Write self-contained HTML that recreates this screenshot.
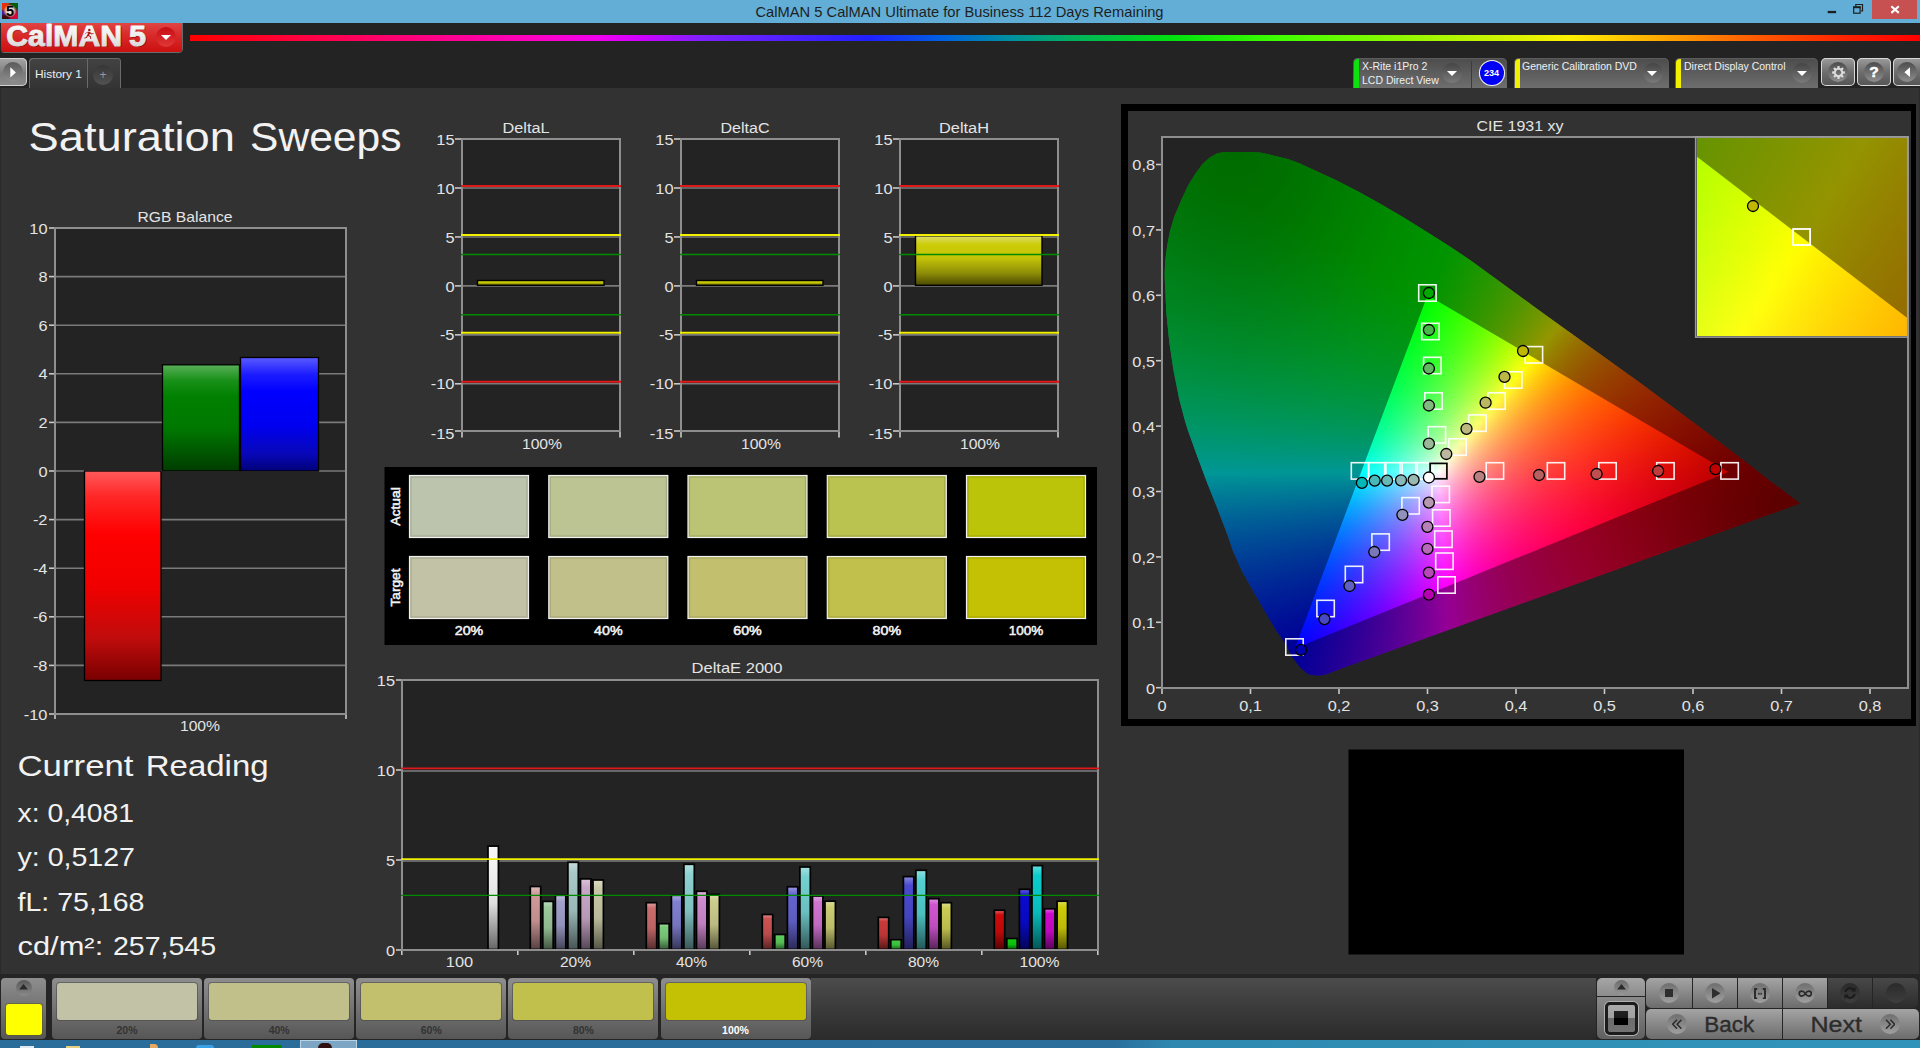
<!DOCTYPE html>
<html lang="en"><head><meta charset="utf-8"><title>CalMAN 5 - Saturation Sweeps</title>
<style>
html,body{margin:0;padding:0}
body{width:1920px;height:1048px;overflow:hidden;background:#323232;position:relative;font-family:"Liberation Sans",sans-serif}
svg.layer{position:absolute;left:0;top:0}
svg text{font-family:"Liberation Sans",sans-serif}
.cie{position:absolute;width:746px;height:550px}
.cie .hs{position:absolute;left:0;top:0;width:746px;height:550px}
.cie i,.inset i{position:absolute;height:2px;display:block}
.cie>b{position:absolute;left:0;top:0;width:746px;height:550px;background:rgba(0,0,0,.41)}
.inset{position:absolute;overflow:hidden}
.inset>b{position:absolute;left:0;top:0;width:100%;height:100%;background:rgba(0,0,0,.42)}
.abs{position:absolute}
#rightline{position:absolute;left:1919px;top:88px;width:1px;height:886px;background:#2a2a2a}
#titlebar{position:absolute;left:0;top:0;width:1920px;height:23px;background:#62aed6}
#toolbar{position:absolute;left:0;top:23px;width:1920px;height:65px;background:#232323}
#leftline{position:absolute;left:0;top:88px;width:1px;height:886px;background:#2a2a2a}
#rainbow{position:absolute;left:190px;top:35.200px;width:1730px;height:5.400px;
 background:linear-gradient(90deg,#ff0000 0,#ff0040 6.4%,#ff0080 13.3%,#ff00c0 19.7%,#f000f0 23.7%,#d000ff 26%,#8020ff 29.5%,#2020ff 39.3%,#0060e0 43.4%,#0090a0 47.4%,#00b060 50.9%,#00e010 56.6%,#40ff00 63%,#90f800 70%,#c8f400 75%,#fff000 79.8%,#ffb000 84.5%,#ff6000 90%,#ff2000 96%,#ff0000 100%)}
#logo{position:absolute;left:1px;top:23px;width:181px;height:29px;border-radius:0 0 3.500px 3.500px;
 background:linear-gradient(#e04444 0,#d82828 45%,#cc1010 100%);box-shadow:0 1px 0 #6a6a6a,1px 0 0 #6a6a6a}
#logo .t{position:absolute;left:4px;top:-3px;font-size:28.5px;font-weight:bold;letter-spacing:-0.6px;color:#ececec;
 text-shadow:1px 1px 1px rgba(60,0,0,.55);white-space:nowrap;transform-origin:0 0}
#logo .dd{position:absolute;left:155px;top:4px;width:20px;height:20px;border-radius:50%;background:linear-gradient(#c80c14,#e03838)}
.tri-d{position:absolute;width:0;height:0;border-left:5.2px solid transparent;border-right:5.2px solid transparent;border-top:5.8px solid #fff}
.tab{position:absolute;top:58px;height:30px;border-radius:5px 5px 0 0;background:linear-gradient(#4c4c4c,#6e6e6e);color:#f0f0f0;font-size:10.8px;line-height:13.6px;white-space:nowrap;box-shadow:inset 0 1px 0 #5c5c5c}
.tab .bar{position:absolute;left:1px;top:1px;width:5px;height:29px;border-radius:4px 0 0 0}
.tab .tx{position:absolute;left:8.5px;top:2px;transform-origin:0 0;transform:scaleX(.972)}
.tab .dd{position:absolute;top:5px;width:20px;height:20px;border-radius:50%;background:linear-gradient(#444,#7a7a7a)}
.sqb{position:absolute;top:58px;height:28px;width:34px;border-radius:5px;background:linear-gradient(#9c9c9c,#6e6e6e 50%,#545454);box-shadow:inset 0 0 0 1px #d8d8d8}
.sqb .c{position:absolute;left:7px;top:4px;width:20px;height:20px;border-radius:50%;background:linear-gradient(#4c4c4c,#8e8e8e)}
#bottombar{position:absolute;left:0;top:974px;width:1920px;height:66px;background:#252525}
#taskbar{position:absolute;left:0;top:1040px;width:1920px;height:8px;background:linear-gradient(100deg,#2a6c9a 0,#2a6e9c 58%,#2e88b0 61%,#3090b6 80%,#3094ba 100%)}
.sw{position:absolute;top:978px;width:150px;height:60.5px;border-radius:4px;background:linear-gradient(#8e8e8e,#767676 45%,#565656);}
.sw .c{position:absolute;left:5px;top:5px;width:140px;height:37px;border-radius:3px;box-shadow:0 0 0 1px rgba(70,70,70,.55)}
.sw .l{position:absolute;left:0;width:150px;top:46px;text-align:center;font-size:10.5px;font-weight:bold;color:#333}
.gbtn{position:absolute;background:linear-gradient(#a4a4a4,#6c6c6c)}
.gbtn .c{position:absolute;width:20px;height:20px;border-radius:50%;background:linear-gradient(#6e6e6e,#a0a0a0)}

</style></head>
<body>
<svg class="layer" width="1920" height="1048" viewBox="0 0 1920 1048"><defs><linearGradient id="g1" x1="0" y1="0" x2="0" y2="1"><stop offset="0" stop-color="#ff5a5a"/><stop offset="0.12" stop-color="#ff2828"/><stop offset="0.3" stop-color="#ff0000"/><stop offset="0.55" stop-color="#f00000"/><stop offset="0.8" stop-color="#c00c0c"/><stop offset="1" stop-color="#780000"/></linearGradient>
<linearGradient id="g2" x1="0" y1="0" x2="0" y2="1"><stop offset="0" stop-color="#58b058"/><stop offset="0.15" stop-color="#189018"/><stop offset="0.3" stop-color="#008000"/><stop offset="0.6" stop-color="#007800"/><stop offset="1" stop-color="#003c00"/></linearGradient>
<linearGradient id="g3" x1="0" y1="0" x2="0" y2="1"><stop offset="0" stop-color="#5a5aff"/><stop offset="0.15" stop-color="#1c1cff"/><stop offset="0.3" stop-color="#0000ff"/><stop offset="0.6" stop-color="#0000f0"/><stop offset="0.85" stop-color="#0808b8"/><stop offset="1" stop-color="#000078"/></linearGradient>
<linearGradient id="g4" x1="0" y1="0" x2="0" y2="1"><stop offset="0" stop-color="#dede70"/><stop offset="0.18" stop-color="#cccc08"/><stop offset="0.45" stop-color="#c4c408"/><stop offset="0.75" stop-color="#8e8e08"/><stop offset="1" stop-color="#4a4800"/></linearGradient>
<linearGradient id="g5" x1="0" y1="0" x2="0" y2="1"><stop offset="0" stop-color="#dede70"/><stop offset="0.18" stop-color="#cccc08"/><stop offset="0.45" stop-color="#c4c408"/><stop offset="0.75" stop-color="#8e8e08"/><stop offset="1" stop-color="#4a4800"/></linearGradient>
<linearGradient id="g6" x1="0" y1="0" x2="0" y2="1"><stop offset="0" stop-color="#dede70"/><stop offset="0.18" stop-color="#cccc08"/><stop offset="0.45" stop-color="#c4c408"/><stop offset="0.75" stop-color="#8e8e08"/><stop offset="1" stop-color="#4a4800"/></linearGradient>
<linearGradient id="g7" x1="0" y1="0" x2="0" y2="1"><stop offset="0" stop-color="#f7f7f7"/><stop offset="0.12" stop-color="#f4f4f4"/><stop offset="0.55" stop-color="#e0e0e0"/><stop offset="1" stop-color="#666666"/></linearGradient>
<linearGradient id="g8" x1="0" y1="0" x2="0" y2="1"><stop offset="0" stop-color="#e0bdbd"/><stop offset="0.12" stop-color="#d09a9a"/><stop offset="0.55" stop-color="#bf8d8d"/><stop offset="1" stop-color="#574040"/></linearGradient>
<linearGradient id="g9" x1="0" y1="0" x2="0" y2="1"><stop offset="0" stop-color="#bedbbe"/><stop offset="0.12" stop-color="#9cc89c"/><stop offset="0.55" stop-color="#8fb88f"/><stop offset="1" stop-color="#415441"/></linearGradient>
<linearGradient id="g10" x1="0" y1="0" x2="0" y2="1"><stop offset="0" stop-color="#c1c1dd"/><stop offset="0.12" stop-color="#a0a0cc"/><stop offset="0.55" stop-color="#9393bb"/><stop offset="1" stop-color="#434355"/></linearGradient>
<linearGradient id="g11" x1="0" y1="0" x2="0" y2="1"><stop offset="0" stop-color="#c6dbdb"/><stop offset="0.12" stop-color="#a8c8c8"/><stop offset="0.55" stop-color="#9ab8b8"/><stop offset="1" stop-color="#465454"/></linearGradient>
<linearGradient id="g12" x1="0" y1="0" x2="0" y2="1"><stop offset="0" stop-color="#dbc6db"/><stop offset="0.12" stop-color="#c8a8c8"/><stop offset="0.55" stop-color="#b89ab8"/><stop offset="1" stop-color="#544654"/></linearGradient>
<linearGradient id="g13" x1="0" y1="0" x2="0" y2="1"><stop offset="0" stop-color="#dbdbc6"/><stop offset="0.12" stop-color="#c8c8a8"/><stop offset="0.55" stop-color="#b8b89a"/><stop offset="1" stop-color="#545446"/></linearGradient>
<linearGradient id="g14" x1="0" y1="0" x2="0" y2="1"><stop offset="0" stop-color="#dd9f9f"/><stop offset="0.12" stop-color="#cc6c6c"/><stop offset="0.55" stop-color="#bb6363"/><stop offset="1" stop-color="#552d2d"/></linearGradient>
<linearGradient id="g15" x1="0" y1="0" x2="0" y2="1"><stop offset="0" stop-color="#a9dda9"/><stop offset="0.12" stop-color="#7ccc7c"/><stop offset="0.55" stop-color="#72bb72"/><stop offset="1" stop-color="#345534"/></linearGradient>
<linearGradient id="g16" x1="0" y1="0" x2="0" y2="1"><stop offset="0" stop-color="#acace0"/><stop offset="0.12" stop-color="#8080d0"/><stop offset="0.55" stop-color="#7575bf"/><stop offset="1" stop-color="#353557"/></linearGradient>
<linearGradient id="g17" x1="0" y1="0" x2="0" y2="1"><stop offset="0" stop-color="#b4e0e0"/><stop offset="0.12" stop-color="#8cd0d0"/><stop offset="0.55" stop-color="#80bfbf"/><stop offset="1" stop-color="#3a5757"/></linearGradient>
<linearGradient id="g18" x1="0" y1="0" x2="0" y2="1"><stop offset="0" stop-color="#e0b4e0"/><stop offset="0.12" stop-color="#d08cd0"/><stop offset="0.55" stop-color="#bf80bf"/><stop offset="1" stop-color="#573a57"/></linearGradient>
<linearGradient id="g19" x1="0" y1="0" x2="0" y2="1"><stop offset="0" stop-color="#ddddb4"/><stop offset="0.12" stop-color="#cccc8c"/><stop offset="0.55" stop-color="#bbbb80"/><stop offset="1" stop-color="#55553a"/></linearGradient>
<linearGradient id="g20" x1="0" y1="0" x2="0" y2="1"><stop offset="0" stop-color="#dd8e8e"/><stop offset="0.12" stop-color="#cc5252"/><stop offset="0.55" stop-color="#bb4b4b"/><stop offset="1" stop-color="#552222"/></linearGradient>
<linearGradient id="g21" x1="0" y1="0" x2="0" y2="1"><stop offset="0" stop-color="#95dd95"/><stop offset="0.12" stop-color="#5ccc5c"/><stop offset="0.55" stop-color="#54bb54"/><stop offset="1" stop-color="#265526"/></linearGradient>
<linearGradient id="g22" x1="0" y1="0" x2="0" y2="1"><stop offset="0" stop-color="#9a9ae0"/><stop offset="0.12" stop-color="#6464d0"/><stop offset="0.55" stop-color="#5c5cbf"/><stop offset="1" stop-color="#2a2a57"/></linearGradient>
<linearGradient id="g23" x1="0" y1="0" x2="0" y2="1"><stop offset="0" stop-color="#a4e0e0"/><stop offset="0.12" stop-color="#74d0d0"/><stop offset="0.55" stop-color="#6abfbf"/><stop offset="1" stop-color="#305757"/></linearGradient>
<linearGradient id="g24" x1="0" y1="0" x2="0" y2="1"><stop offset="0" stop-color="#e0a4e0"/><stop offset="0.12" stop-color="#d074d0"/><stop offset="0.55" stop-color="#bf6abf"/><stop offset="1" stop-color="#573057"/></linearGradient>
<linearGradient id="g25" x1="0" y1="0" x2="0" y2="1"><stop offset="0" stop-color="#dddda4"/><stop offset="0.12" stop-color="#cccc74"/><stop offset="0.55" stop-color="#bbbb6a"/><stop offset="1" stop-color="#555530"/></linearGradient>
<linearGradient id="g26" x1="0" y1="0" x2="0" y2="1"><stop offset="0" stop-color="#dd7e7e"/><stop offset="0.12" stop-color="#cc3a3a"/><stop offset="0.55" stop-color="#bb3535"/><stop offset="1" stop-color="#551818"/></linearGradient>
<linearGradient id="g27" x1="0" y1="0" x2="0" y2="1"><stop offset="0" stop-color="#82dd82"/><stop offset="0.12" stop-color="#40cc40"/><stop offset="0.55" stop-color="#3abb3a"/><stop offset="1" stop-color="#1a551a"/></linearGradient>
<linearGradient id="g28" x1="0" y1="0" x2="0" y2="1"><stop offset="0" stop-color="#8989e0"/><stop offset="0.12" stop-color="#4a4ad0"/><stop offset="0.55" stop-color="#4444bf"/><stop offset="1" stop-color="#1f1f57"/></linearGradient>
<linearGradient id="g29" x1="0" y1="0" x2="0" y2="1"><stop offset="0" stop-color="#8fe0e0"/><stop offset="0.12" stop-color="#54d0d0"/><stop offset="0.55" stop-color="#4dbfbf"/><stop offset="1" stop-color="#235757"/></linearGradient>
<linearGradient id="g30" x1="0" y1="0" x2="0" y2="1"><stop offset="0" stop-color="#e08fe0"/><stop offset="0.12" stop-color="#d054d0"/><stop offset="0.55" stop-color="#bf4dbf"/><stop offset="1" stop-color="#572357"/></linearGradient>
<linearGradient id="g31" x1="0" y1="0" x2="0" y2="1"><stop offset="0" stop-color="#dddd8f"/><stop offset="0.12" stop-color="#cccc54"/><stop offset="0.55" stop-color="#bbbb4d"/><stop offset="1" stop-color="#555523"/></linearGradient>
<linearGradient id="g32" x1="0" y1="0" x2="0" y2="1"><stop offset="0" stop-color="#dd5f5f"/><stop offset="0.12" stop-color="#cc0a0a"/><stop offset="0.55" stop-color="#bb0909"/><stop offset="1" stop-color="#550404"/></linearGradient>
<linearGradient id="g33" x1="0" y1="0" x2="0" y2="1"><stop offset="0" stop-color="#63dd63"/><stop offset="0.12" stop-color="#10cc10"/><stop offset="0.55" stop-color="#0ebb0e"/><stop offset="1" stop-color="#065506"/></linearGradient>
<linearGradient id="g34" x1="0" y1="0" x2="0" y2="1"><stop offset="0" stop-color="#5f5fe0"/><stop offset="0.12" stop-color="#0a0ad0"/><stop offset="0.55" stop-color="#0909bf"/><stop offset="1" stop-color="#040457"/></linearGradient>
<linearGradient id="g35" x1="0" y1="0" x2="0" y2="1"><stop offset="0" stop-color="#5fdddd"/><stop offset="0.12" stop-color="#0acccc"/><stop offset="0.55" stop-color="#09bbbb"/><stop offset="1" stop-color="#045555"/></linearGradient>
<linearGradient id="g36" x1="0" y1="0" x2="0" y2="1"><stop offset="0" stop-color="#dd5fdd"/><stop offset="0.12" stop-color="#cc0acc"/><stop offset="0.55" stop-color="#bb09bb"/><stop offset="1" stop-color="#550455"/></linearGradient>
<linearGradient id="g37" x1="0" y1="0" x2="0" y2="1"><stop offset="0" stop-color="#dddd5f"/><stop offset="0.12" stop-color="#cccc0a"/><stop offset="0.55" stop-color="#bbbb09"/><stop offset="1" stop-color="#555504"/></linearGradient></defs>
<rect x="54.00" y="227.00" width="293.00" height="488.00" fill="#232323" />
<line x1="49.00" y1="714.00" x2="54.00" y2="714.00" stroke="#c8c8c8" stroke-width="1.6"/>
<text x="47.5" y="719.6" font-size="15.00" text-anchor="end" fill="#e4e4e4" font-weight="normal" textLength="23.7" lengthAdjust="spacingAndGlyphs" >-10</text>
<line x1="54.00" y1="665.40" x2="347.00" y2="665.40" stroke="#7a7a7a" stroke-width="1.6"/>
<line x1="49.00" y1="665.40" x2="54.00" y2="665.40" stroke="#c8c8c8" stroke-width="1.6"/>
<text x="47.5" y="671.0" font-size="15.00" text-anchor="end" fill="#e4e4e4" font-weight="normal" textLength="14.6" lengthAdjust="spacingAndGlyphs" >-8</text>
<line x1="54.00" y1="616.80" x2="347.00" y2="616.80" stroke="#7a7a7a" stroke-width="1.6"/>
<line x1="49.00" y1="616.80" x2="54.00" y2="616.80" stroke="#c8c8c8" stroke-width="1.6"/>
<text x="47.5" y="622.4" font-size="15.00" text-anchor="end" fill="#e4e4e4" font-weight="normal" textLength="14.6" lengthAdjust="spacingAndGlyphs" >-6</text>
<line x1="54.00" y1="568.20" x2="347.00" y2="568.20" stroke="#7a7a7a" stroke-width="1.6"/>
<line x1="49.00" y1="568.20" x2="54.00" y2="568.20" stroke="#c8c8c8" stroke-width="1.6"/>
<text x="47.5" y="573.8" font-size="15.00" text-anchor="end" fill="#e4e4e4" font-weight="normal" textLength="14.6" lengthAdjust="spacingAndGlyphs" >-4</text>
<line x1="54.00" y1="519.60" x2="347.00" y2="519.60" stroke="#7a7a7a" stroke-width="1.6"/>
<line x1="49.00" y1="519.60" x2="54.00" y2="519.60" stroke="#c8c8c8" stroke-width="1.6"/>
<text x="47.5" y="525.2" font-size="15.00" text-anchor="end" fill="#e4e4e4" font-weight="normal" textLength="14.6" lengthAdjust="spacingAndGlyphs" >-2</text>
<line x1="54.00" y1="471.00" x2="347.00" y2="471.00" stroke="#7a7a7a" stroke-width="1.6"/>
<line x1="49.00" y1="471.00" x2="54.00" y2="471.00" stroke="#c8c8c8" stroke-width="1.6"/>
<text x="47.5" y="476.6" font-size="15.00" text-anchor="end" fill="#e4e4e4" font-weight="normal" textLength="9.1" lengthAdjust="spacingAndGlyphs" >0</text>
<line x1="54.00" y1="422.40" x2="347.00" y2="422.40" stroke="#7a7a7a" stroke-width="1.6"/>
<line x1="49.00" y1="422.40" x2="54.00" y2="422.40" stroke="#c8c8c8" stroke-width="1.6"/>
<text x="47.5" y="428.0" font-size="15.00" text-anchor="end" fill="#e4e4e4" font-weight="normal" textLength="9.1" lengthAdjust="spacingAndGlyphs" >2</text>
<line x1="54.00" y1="373.80" x2="347.00" y2="373.80" stroke="#7a7a7a" stroke-width="1.6"/>
<line x1="49.00" y1="373.80" x2="54.00" y2="373.80" stroke="#c8c8c8" stroke-width="1.6"/>
<text x="47.5" y="379.4" font-size="15.00" text-anchor="end" fill="#e4e4e4" font-weight="normal" textLength="9.1" lengthAdjust="spacingAndGlyphs" >4</text>
<line x1="54.00" y1="325.20" x2="347.00" y2="325.20" stroke="#7a7a7a" stroke-width="1.6"/>
<line x1="49.00" y1="325.20" x2="54.00" y2="325.20" stroke="#c8c8c8" stroke-width="1.6"/>
<text x="47.5" y="330.8" font-size="15.00" text-anchor="end" fill="#e4e4e4" font-weight="normal" textLength="9.1" lengthAdjust="spacingAndGlyphs" >6</text>
<line x1="54.00" y1="276.60" x2="347.00" y2="276.60" stroke="#7a7a7a" stroke-width="1.6"/>
<line x1="49.00" y1="276.60" x2="54.00" y2="276.60" stroke="#c8c8c8" stroke-width="1.6"/>
<text x="47.5" y="282.2" font-size="15.00" text-anchor="end" fill="#e4e4e4" font-weight="normal" textLength="9.1" lengthAdjust="spacingAndGlyphs" >8</text>
<line x1="49.00" y1="228.00" x2="54.00" y2="228.00" stroke="#c8c8c8" stroke-width="1.6"/>
<text x="47.5" y="233.6" font-size="15.00" text-anchor="end" fill="#e4e4e4" font-weight="normal" textLength="18.2" lengthAdjust="spacingAndGlyphs" >10</text>
<rect x="84.5" y="471.0" width="76.5" height="209.5" fill="url(#g1)" stroke="#000" stroke-width="1.3"/>
<rect x="162.5" y="364.8" width="77.0" height="106.2" fill="url(#g2)" stroke="#000" stroke-width="1.3"/>
<rect x="240.5" y="357.5" width="78.0" height="113.5" fill="url(#g3)" stroke="#000" stroke-width="1.3"/>
<rect x="55.0" y="228.0" width="291.0" height="486.0" fill="none" stroke="#8e8e8e" stroke-width="2"/>
<line x1="55.00" y1="715.00" x2="55.00" y2="719.00" stroke="#c8c8c8" stroke-width="1.6"/>
<line x1="346.00" y1="715.00" x2="346.00" y2="719.00" stroke="#c8c8c8" stroke-width="1.6"/>
<text x="200.0" y="730.7" font-size="15.00" text-anchor="middle" fill="#e4e4e4" font-weight="normal" textLength="40.2" lengthAdjust="spacingAndGlyphs" >100%</text>
<text x="185.0" y="221.5" font-size="14.60" text-anchor="middle" fill="#e4e4e4" font-weight="normal" textLength="95.0" lengthAdjust="spacingAndGlyphs" >RGB Balance</text>
<rect x="461.00" y="138.00" width="160.00" height="294.00" fill="#232323" />
<line x1="455.00" y1="431.00" x2="461.00" y2="431.00" stroke="#c8c8c8" stroke-width="1.6"/>
<text x="454.5" y="439.2" font-size="15.00" text-anchor="end" fill="#e4e4e4" font-weight="normal" textLength="23.7" lengthAdjust="spacingAndGlyphs" >-15</text>
<line x1="461.00" y1="383.80" x2="621.00" y2="383.80" stroke="#7a7a7a" stroke-width="1.6"/>
<line x1="455.00" y1="383.80" x2="461.00" y2="383.80" stroke="#c8c8c8" stroke-width="1.6"/>
<text x="454.5" y="389.4" font-size="15.00" text-anchor="end" fill="#e4e4e4" font-weight="normal" textLength="23.7" lengthAdjust="spacingAndGlyphs" >-10</text>
<line x1="461.00" y1="334.85" x2="621.00" y2="334.85" stroke="#7a7a7a" stroke-width="1.6"/>
<line x1="455.00" y1="334.85" x2="461.00" y2="334.85" stroke="#c8c8c8" stroke-width="1.6"/>
<text x="454.5" y="340.4" font-size="15.00" text-anchor="end" fill="#e4e4e4" font-weight="normal" textLength="14.6" lengthAdjust="spacingAndGlyphs" >-5</text>
<line x1="461.00" y1="285.90" x2="621.00" y2="285.90" stroke="#7a7a7a" stroke-width="1.6"/>
<line x1="455.00" y1="285.90" x2="461.00" y2="285.90" stroke="#c8c8c8" stroke-width="1.6"/>
<text x="454.5" y="291.5" font-size="15.00" text-anchor="end" fill="#e4e4e4" font-weight="normal" textLength="9.1" lengthAdjust="spacingAndGlyphs" >0</text>
<line x1="461.00" y1="236.95" x2="621.00" y2="236.95" stroke="#7a7a7a" stroke-width="1.6"/>
<line x1="455.00" y1="236.95" x2="461.00" y2="236.95" stroke="#c8c8c8" stroke-width="1.6"/>
<text x="454.5" y="242.5" font-size="15.00" text-anchor="end" fill="#e4e4e4" font-weight="normal" textLength="9.1" lengthAdjust="spacingAndGlyphs" >5</text>
<line x1="461.00" y1="188.00" x2="621.00" y2="188.00" stroke="#7a7a7a" stroke-width="1.6"/>
<line x1="455.00" y1="188.00" x2="461.00" y2="188.00" stroke="#c8c8c8" stroke-width="1.6"/>
<text x="454.5" y="193.6" font-size="15.00" text-anchor="end" fill="#e4e4e4" font-weight="normal" textLength="18.2" lengthAdjust="spacingAndGlyphs" >10</text>
<line x1="455.00" y1="139.00" x2="461.00" y2="139.00" stroke="#c8c8c8" stroke-width="1.6"/>
<text x="454.5" y="144.6" font-size="15.00" text-anchor="end" fill="#e4e4e4" font-weight="normal" textLength="18.2" lengthAdjust="spacingAndGlyphs" >15</text>
<rect x="477.5" y="280.5" width="126.5" height="4.8" fill="url(#g4)" stroke="#000" stroke-width="1.4"/>
<rect x="462.0" y="139.0" width="158.0" height="292.0" fill="none" stroke="#8e8e8e" stroke-width="2"/>
<line x1="461.00" y1="186.00" x2="621.00" y2="186.00" stroke="#e01818" stroke-width="2"/>
<line x1="461.00" y1="381.80" x2="621.00" y2="381.80" stroke="#e01818" stroke-width="2"/>
<line x1="461.00" y1="234.95" x2="621.00" y2="234.95" stroke="#f0f000" stroke-width="2"/>
<line x1="461.00" y1="332.85" x2="621.00" y2="332.85" stroke="#f0f000" stroke-width="2"/>
<line x1="461.00" y1="254.53" x2="621.00" y2="254.53" stroke="#008a00" stroke-width="1.5"/>
<line x1="461.00" y1="314.77" x2="621.00" y2="314.77" stroke="#008a00" stroke-width="1.5"/>
<line x1="462.00" y1="432.00" x2="462.00" y2="437.50" stroke="#c8c8c8" stroke-width="1.6"/>
<line x1="620.00" y1="432.00" x2="620.00" y2="437.50" stroke="#c8c8c8" stroke-width="1.6"/>
<text x="542.0" y="448.8" font-size="15.00" text-anchor="middle" fill="#e4e4e4" font-weight="normal" textLength="40.2" lengthAdjust="spacingAndGlyphs" >100%</text>
<text x="526.0" y="133.0" font-size="15.20" text-anchor="middle" fill="#e4e4e4" font-weight="normal" textLength="47.0" lengthAdjust="spacingAndGlyphs" >DeltaL</text>
<rect x="680.00" y="138.00" width="160.00" height="294.00" fill="#232323" />
<line x1="674.00" y1="431.00" x2="680.00" y2="431.00" stroke="#c8c8c8" stroke-width="1.6"/>
<text x="673.5" y="439.2" font-size="15.00" text-anchor="end" fill="#e4e4e4" font-weight="normal" textLength="23.7" lengthAdjust="spacingAndGlyphs" >-15</text>
<line x1="680.00" y1="383.80" x2="840.00" y2="383.80" stroke="#7a7a7a" stroke-width="1.6"/>
<line x1="674.00" y1="383.80" x2="680.00" y2="383.80" stroke="#c8c8c8" stroke-width="1.6"/>
<text x="673.5" y="389.4" font-size="15.00" text-anchor="end" fill="#e4e4e4" font-weight="normal" textLength="23.7" lengthAdjust="spacingAndGlyphs" >-10</text>
<line x1="680.00" y1="334.85" x2="840.00" y2="334.85" stroke="#7a7a7a" stroke-width="1.6"/>
<line x1="674.00" y1="334.85" x2="680.00" y2="334.85" stroke="#c8c8c8" stroke-width="1.6"/>
<text x="673.5" y="340.4" font-size="15.00" text-anchor="end" fill="#e4e4e4" font-weight="normal" textLength="14.6" lengthAdjust="spacingAndGlyphs" >-5</text>
<line x1="680.00" y1="285.90" x2="840.00" y2="285.90" stroke="#7a7a7a" stroke-width="1.6"/>
<line x1="674.00" y1="285.90" x2="680.00" y2="285.90" stroke="#c8c8c8" stroke-width="1.6"/>
<text x="673.5" y="291.5" font-size="15.00" text-anchor="end" fill="#e4e4e4" font-weight="normal" textLength="9.1" lengthAdjust="spacingAndGlyphs" >0</text>
<line x1="680.00" y1="236.95" x2="840.00" y2="236.95" stroke="#7a7a7a" stroke-width="1.6"/>
<line x1="674.00" y1="236.95" x2="680.00" y2="236.95" stroke="#c8c8c8" stroke-width="1.6"/>
<text x="673.5" y="242.5" font-size="15.00" text-anchor="end" fill="#e4e4e4" font-weight="normal" textLength="9.1" lengthAdjust="spacingAndGlyphs" >5</text>
<line x1="680.00" y1="188.00" x2="840.00" y2="188.00" stroke="#7a7a7a" stroke-width="1.6"/>
<line x1="674.00" y1="188.00" x2="680.00" y2="188.00" stroke="#c8c8c8" stroke-width="1.6"/>
<text x="673.5" y="193.6" font-size="15.00" text-anchor="end" fill="#e4e4e4" font-weight="normal" textLength="18.2" lengthAdjust="spacingAndGlyphs" >10</text>
<line x1="674.00" y1="139.00" x2="680.00" y2="139.00" stroke="#c8c8c8" stroke-width="1.6"/>
<text x="673.5" y="144.6" font-size="15.00" text-anchor="end" fill="#e4e4e4" font-weight="normal" textLength="18.2" lengthAdjust="spacingAndGlyphs" >15</text>
<rect x="696.5" y="280.5" width="126.5" height="4.8" fill="url(#g5)" stroke="#000" stroke-width="1.4"/>
<rect x="681.0" y="139.0" width="158.0" height="292.0" fill="none" stroke="#8e8e8e" stroke-width="2"/>
<line x1="680.00" y1="186.00" x2="840.00" y2="186.00" stroke="#e01818" stroke-width="2"/>
<line x1="680.00" y1="381.80" x2="840.00" y2="381.80" stroke="#e01818" stroke-width="2"/>
<line x1="680.00" y1="234.95" x2="840.00" y2="234.95" stroke="#f0f000" stroke-width="2"/>
<line x1="680.00" y1="332.85" x2="840.00" y2="332.85" stroke="#f0f000" stroke-width="2"/>
<line x1="680.00" y1="254.53" x2="840.00" y2="254.53" stroke="#008a00" stroke-width="1.5"/>
<line x1="680.00" y1="314.77" x2="840.00" y2="314.77" stroke="#008a00" stroke-width="1.5"/>
<line x1="681.00" y1="432.00" x2="681.00" y2="437.50" stroke="#c8c8c8" stroke-width="1.6"/>
<line x1="839.00" y1="432.00" x2="839.00" y2="437.50" stroke="#c8c8c8" stroke-width="1.6"/>
<text x="761.0" y="448.8" font-size="15.00" text-anchor="middle" fill="#e4e4e4" font-weight="normal" textLength="40.2" lengthAdjust="spacingAndGlyphs" >100%</text>
<text x="745.0" y="133.0" font-size="15.20" text-anchor="middle" fill="#e4e4e4" font-weight="normal" textLength="49.0" lengthAdjust="spacingAndGlyphs" >DeltaC</text>
<rect x="899.00" y="138.00" width="160.00" height="294.00" fill="#232323" />
<line x1="893.00" y1="431.00" x2="899.00" y2="431.00" stroke="#c8c8c8" stroke-width="1.6"/>
<text x="892.5" y="439.2" font-size="15.00" text-anchor="end" fill="#e4e4e4" font-weight="normal" textLength="23.7" lengthAdjust="spacingAndGlyphs" >-15</text>
<line x1="899.00" y1="383.80" x2="1059.00" y2="383.80" stroke="#7a7a7a" stroke-width="1.6"/>
<line x1="893.00" y1="383.80" x2="899.00" y2="383.80" stroke="#c8c8c8" stroke-width="1.6"/>
<text x="892.5" y="389.4" font-size="15.00" text-anchor="end" fill="#e4e4e4" font-weight="normal" textLength="23.7" lengthAdjust="spacingAndGlyphs" >-10</text>
<line x1="899.00" y1="334.85" x2="1059.00" y2="334.85" stroke="#7a7a7a" stroke-width="1.6"/>
<line x1="893.00" y1="334.85" x2="899.00" y2="334.85" stroke="#c8c8c8" stroke-width="1.6"/>
<text x="892.5" y="340.4" font-size="15.00" text-anchor="end" fill="#e4e4e4" font-weight="normal" textLength="14.6" lengthAdjust="spacingAndGlyphs" >-5</text>
<line x1="899.00" y1="285.90" x2="1059.00" y2="285.90" stroke="#7a7a7a" stroke-width="1.6"/>
<line x1="893.00" y1="285.90" x2="899.00" y2="285.90" stroke="#c8c8c8" stroke-width="1.6"/>
<text x="892.5" y="291.5" font-size="15.00" text-anchor="end" fill="#e4e4e4" font-weight="normal" textLength="9.1" lengthAdjust="spacingAndGlyphs" >0</text>
<line x1="899.00" y1="236.95" x2="1059.00" y2="236.95" stroke="#7a7a7a" stroke-width="1.6"/>
<line x1="893.00" y1="236.95" x2="899.00" y2="236.95" stroke="#c8c8c8" stroke-width="1.6"/>
<text x="892.5" y="242.5" font-size="15.00" text-anchor="end" fill="#e4e4e4" font-weight="normal" textLength="9.1" lengthAdjust="spacingAndGlyphs" >5</text>
<line x1="899.00" y1="188.00" x2="1059.00" y2="188.00" stroke="#7a7a7a" stroke-width="1.6"/>
<line x1="893.00" y1="188.00" x2="899.00" y2="188.00" stroke="#c8c8c8" stroke-width="1.6"/>
<text x="892.5" y="193.6" font-size="15.00" text-anchor="end" fill="#e4e4e4" font-weight="normal" textLength="18.2" lengthAdjust="spacingAndGlyphs" >10</text>
<line x1="893.00" y1="139.00" x2="899.00" y2="139.00" stroke="#c8c8c8" stroke-width="1.6"/>
<text x="892.5" y="144.6" font-size="15.00" text-anchor="end" fill="#e4e4e4" font-weight="normal" textLength="18.2" lengthAdjust="spacingAndGlyphs" >15</text>
<rect x="915.5" y="235.8" width="126.5" height="49.5" fill="url(#g6)" stroke="#000" stroke-width="1.4"/>
<rect x="900.0" y="139.0" width="158.0" height="292.0" fill="none" stroke="#8e8e8e" stroke-width="2"/>
<line x1="899.00" y1="186.00" x2="1059.00" y2="186.00" stroke="#e01818" stroke-width="2"/>
<line x1="899.00" y1="381.80" x2="1059.00" y2="381.80" stroke="#e01818" stroke-width="2"/>
<line x1="899.00" y1="234.95" x2="1059.00" y2="234.95" stroke="#f0f000" stroke-width="2"/>
<line x1="899.00" y1="332.85" x2="1059.00" y2="332.85" stroke="#f0f000" stroke-width="2"/>
<line x1="899.00" y1="254.53" x2="1059.00" y2="254.53" stroke="#008a00" stroke-width="1.5"/>
<line x1="899.00" y1="314.77" x2="1059.00" y2="314.77" stroke="#008a00" stroke-width="1.5"/>
<line x1="900.00" y1="432.00" x2="900.00" y2="437.50" stroke="#c8c8c8" stroke-width="1.6"/>
<line x1="1058.00" y1="432.00" x2="1058.00" y2="437.50" stroke="#c8c8c8" stroke-width="1.6"/>
<text x="980.0" y="448.8" font-size="15.00" text-anchor="middle" fill="#e4e4e4" font-weight="normal" textLength="40.2" lengthAdjust="spacingAndGlyphs" >100%</text>
<text x="964.0" y="133.0" font-size="15.20" text-anchor="middle" fill="#e4e4e4" font-weight="normal" textLength="50.0" lengthAdjust="spacingAndGlyphs" >DeltaH</text>
<rect x="384.50" y="467.00" width="712.50" height="178.00" fill="#000" />
<rect x="409.5" y="475.5" width="119" height="62" fill="#bcc4ae" stroke="#f0f0f0" stroke-width="1.2"/>
<rect x="409.5" y="556.5" width="119" height="62" fill="#c2c2a6" stroke="#f0f0f0" stroke-width="1.2"/>
<rect x="411.0" y="477" width="116" height="59" fill="none" stroke="#000" stroke-opacity=".13" stroke-width="1.2"/>
<rect x="411.0" y="558" width="116" height="59" fill="none" stroke="#000" stroke-opacity=".13" stroke-width="1.2"/>
<text x="469.0" y="634.5" font-size="12.60" text-anchor="middle" fill="#f4f4f4" font-weight="normal" textLength="28.5" lengthAdjust="spacingAndGlyphs" stroke="#f4f4f4" stroke-width=".5">20%</text>
<rect x="548.8" y="475.5" width="119" height="62" fill="#bcc493" stroke="#f0f0f0" stroke-width="1.2"/>
<rect x="548.8" y="556.5" width="119" height="62" fill="#c2c08a" stroke="#f0f0f0" stroke-width="1.2"/>
<rect x="550.3" y="477" width="116" height="59" fill="none" stroke="#000" stroke-opacity=".13" stroke-width="1.2"/>
<rect x="550.3" y="558" width="116" height="59" fill="none" stroke="#000" stroke-opacity=".13" stroke-width="1.2"/>
<text x="608.3" y="634.5" font-size="12.60" text-anchor="middle" fill="#f4f4f4" font-weight="normal" textLength="28.5" lengthAdjust="spacingAndGlyphs" stroke="#f4f4f4" stroke-width=".5">40%</text>
<rect x="688.0" y="475.5" width="119" height="62" fill="#bac474" stroke="#f0f0f0" stroke-width="1.2"/>
<rect x="688.0" y="556.5" width="119" height="62" fill="#c2c06e" stroke="#f0f0f0" stroke-width="1.2"/>
<rect x="689.5" y="477" width="116" height="59" fill="none" stroke="#000" stroke-opacity=".13" stroke-width="1.2"/>
<rect x="689.5" y="558" width="116" height="59" fill="none" stroke="#000" stroke-opacity=".13" stroke-width="1.2"/>
<text x="747.5" y="634.5" font-size="12.60" text-anchor="middle" fill="#f4f4f4" font-weight="normal" textLength="28.5" lengthAdjust="spacingAndGlyphs" stroke="#f4f4f4" stroke-width=".5">60%</text>
<rect x="827.3" y="475.5" width="119" height="62" fill="#bac250" stroke="#f0f0f0" stroke-width="1.2"/>
<rect x="827.3" y="556.5" width="119" height="62" fill="#c2c04c" stroke="#f0f0f0" stroke-width="1.2"/>
<rect x="828.8" y="477" width="116" height="59" fill="none" stroke="#000" stroke-opacity=".13" stroke-width="1.2"/>
<rect x="828.8" y="558" width="116" height="59" fill="none" stroke="#000" stroke-opacity=".13" stroke-width="1.2"/>
<text x="886.8" y="634.5" font-size="12.60" text-anchor="middle" fill="#f4f4f4" font-weight="normal" textLength="28.5" lengthAdjust="spacingAndGlyphs" stroke="#f4f4f4" stroke-width=".5">80%</text>
<rect x="966.5" y="475.5" width="119" height="62" fill="#bcc40a" stroke="#f0f0f0" stroke-width="1.2"/>
<rect x="966.5" y="556.5" width="119" height="62" fill="#c4c004" stroke="#f0f0f0" stroke-width="1.2"/>
<rect x="968.0" y="477" width="116" height="59" fill="none" stroke="#000" stroke-opacity=".13" stroke-width="1.2"/>
<rect x="968.0" y="558" width="116" height="59" fill="none" stroke="#000" stroke-opacity=".13" stroke-width="1.2"/>
<text x="1026.0" y="634.5" font-size="12.60" text-anchor="middle" fill="#f4f4f4" font-weight="normal" textLength="34.5" lengthAdjust="spacingAndGlyphs" stroke="#f4f4f4" stroke-width=".5">100%</text>
<text x="0.0" y="0.0" font-size="12.60" text-anchor="middle" fill="#f4f4f4" font-weight="normal" textLength="38.5" lengthAdjust="spacingAndGlyphs" transform="translate(399.5 506.5) rotate(-90)" stroke="#f4f4f4" stroke-width=".5">Actual</text>
<text x="0.0" y="0.0" font-size="12.60" text-anchor="middle" fill="#f4f4f4" font-weight="normal" textLength="38.0" lengthAdjust="spacingAndGlyphs" transform="translate(399.5 587.5) rotate(-90)" stroke="#f4f4f4" stroke-width=".5">Target</text>
<rect x="401.00" y="679.00" width="698.00" height="272.00" fill="#232323" />
<line x1="396.00" y1="950.00" x2="401.00" y2="950.00" stroke="#c8c8c8" stroke-width="1.6"/>
<text x="395.0" y="956.2" font-size="15.00" text-anchor="end" fill="#e4e4e4" font-weight="normal" textLength="9.1" lengthAdjust="spacingAndGlyphs" >0</text>
<line x1="401.00" y1="860.90" x2="1099.00" y2="860.90" stroke="#808080" stroke-width="1.5"/>
<line x1="396.00" y1="860.00" x2="401.00" y2="860.00" stroke="#c8c8c8" stroke-width="1.6"/>
<text x="395.0" y="866.2" font-size="15.00" text-anchor="end" fill="#e4e4e4" font-weight="normal" textLength="9.1" lengthAdjust="spacingAndGlyphs" >5</text>
<line x1="401.00" y1="770.90" x2="1099.00" y2="770.90" stroke="#808080" stroke-width="1.5"/>
<line x1="396.00" y1="770.00" x2="401.00" y2="770.00" stroke="#c8c8c8" stroke-width="1.6"/>
<text x="395.0" y="776.2" font-size="15.00" text-anchor="end" fill="#e4e4e4" font-weight="normal" textLength="18.2" lengthAdjust="spacingAndGlyphs" >10</text>
<line x1="396.00" y1="680.00" x2="401.00" y2="680.00" stroke="#c8c8c8" stroke-width="1.6"/>
<text x="395.0" y="686.2" font-size="15.00" text-anchor="end" fill="#e4e4e4" font-weight="normal" textLength="18.2" lengthAdjust="spacingAndGlyphs" >15</text>
<rect x="488.0" y="846.1" width="10.400" height="103.4" fill="url(#g7)" stroke="#000" stroke-width="1.700"/>
<rect x="530.3" y="886.5" width="10.400" height="63.0" fill="url(#g8)" stroke="#000" stroke-width="1.700"/>
<rect x="542.8" y="901.4" width="10.400" height="48.1" fill="url(#g9)" stroke="#000" stroke-width="1.700"/>
<rect x="555.4" y="895.3" width="10.400" height="54.2" fill="url(#g10)" stroke="#000" stroke-width="1.700"/>
<rect x="567.9" y="862.3" width="10.400" height="87.2" fill="url(#g11)" stroke="#000" stroke-width="1.700"/>
<rect x="580.5" y="878.9" width="10.400" height="70.6" fill="url(#g12)" stroke="#000" stroke-width="1.700"/>
<rect x="593.0" y="880.0" width="10.400" height="69.5" fill="url(#g13)" stroke="#000" stroke-width="1.700"/>
<rect x="646.3" y="902.7" width="10.400" height="46.8" fill="url(#g14)" stroke="#000" stroke-width="1.700"/>
<rect x="658.8" y="923.7" width="10.400" height="25.8" fill="url(#g15)" stroke="#000" stroke-width="1.700"/>
<rect x="671.4" y="895.3" width="10.400" height="54.2" fill="url(#g16)" stroke="#000" stroke-width="1.700"/>
<rect x="683.9" y="864.3" width="10.400" height="85.2" fill="url(#g17)" stroke="#000" stroke-width="1.700"/>
<rect x="696.5" y="891.3" width="10.400" height="58.2" fill="url(#g18)" stroke="#000" stroke-width="1.700"/>
<rect x="709.0" y="894.4" width="10.400" height="55.1" fill="url(#g19)" stroke="#000" stroke-width="1.700"/>
<rect x="762.3" y="914.5" width="10.400" height="35.0" fill="url(#g20)" stroke="#000" stroke-width="1.700"/>
<rect x="774.8" y="934.5" width="10.400" height="15.0" fill="url(#g21)" stroke="#000" stroke-width="1.700"/>
<rect x="787.4" y="886.8" width="10.400" height="62.7" fill="url(#g22)" stroke="#000" stroke-width="1.700"/>
<rect x="799.9" y="867.0" width="10.400" height="82.5" fill="url(#g23)" stroke="#000" stroke-width="1.700"/>
<rect x="812.5" y="896.0" width="10.400" height="53.5" fill="url(#g24)" stroke="#000" stroke-width="1.700"/>
<rect x="825.0" y="901.2" width="10.400" height="48.3" fill="url(#g25)" stroke="#000" stroke-width="1.700"/>
<rect x="878.3" y="917.4" width="10.400" height="32.1" fill="url(#g26)" stroke="#000" stroke-width="1.700"/>
<rect x="890.8" y="939.7" width="10.400" height="9.8" fill="url(#g27)" stroke="#000" stroke-width="1.700"/>
<rect x="903.4" y="876.6" width="10.400" height="72.9" fill="url(#g28)" stroke="#000" stroke-width="1.700"/>
<rect x="915.9" y="870.3" width="10.400" height="79.2" fill="url(#g29)" stroke="#000" stroke-width="1.700"/>
<rect x="928.5" y="898.7" width="10.400" height="50.8" fill="url(#g30)" stroke="#000" stroke-width="1.700"/>
<rect x="941.0" y="902.7" width="10.400" height="46.8" fill="url(#g31)" stroke="#000" stroke-width="1.700"/>
<rect x="994.3" y="910.2" width="10.400" height="39.3" fill="url(#g32)" stroke="#000" stroke-width="1.700"/>
<rect x="1006.8" y="938.5" width="10.400" height="11.0" fill="url(#g33)" stroke="#000" stroke-width="1.700"/>
<rect x="1019.4" y="889.3" width="10.400" height="60.2" fill="url(#g34)" stroke="#000" stroke-width="1.700"/>
<rect x="1032.0" y="865.6" width="10.400" height="83.9" fill="url(#g35)" stroke="#000" stroke-width="1.700"/>
<rect x="1044.5" y="908.8" width="10.400" height="40.7" fill="url(#g36)" stroke="#000" stroke-width="1.700"/>
<rect x="1057.1" y="901.2" width="10.400" height="48.3" fill="url(#g37)" stroke="#000" stroke-width="1.700"/>
<rect x="402.0" y="680.0" width="696.0" height="270.0" fill="none" stroke="#8e8e8e" stroke-width="2"/>
<line x1="401.00" y1="768.40" x2="1099.00" y2="768.40" stroke="#e01818" stroke-width="1.9"/>
<line x1="401.00" y1="859.10" x2="1099.00" y2="859.10" stroke="#f0f000" stroke-width="1.7"/>
<line x1="401.00" y1="895.40" x2="1099.00" y2="895.40" stroke="#008a00" stroke-width="1.4"/>
<line x1="401.80" y1="951.00" x2="401.80" y2="955.00" stroke="#c8c8c8" stroke-width="1.6"/>
<line x1="517.80" y1="951.00" x2="517.80" y2="955.00" stroke="#c8c8c8" stroke-width="1.6"/>
<line x1="633.80" y1="951.00" x2="633.80" y2="955.00" stroke="#c8c8c8" stroke-width="1.6"/>
<line x1="749.80" y1="951.00" x2="749.80" y2="955.00" stroke="#c8c8c8" stroke-width="1.6"/>
<line x1="865.80" y1="951.00" x2="865.80" y2="955.00" stroke="#c8c8c8" stroke-width="1.6"/>
<line x1="981.80" y1="951.00" x2="981.80" y2="955.00" stroke="#c8c8c8" stroke-width="1.6"/>
<line x1="1097.80" y1="951.00" x2="1097.80" y2="955.00" stroke="#c8c8c8" stroke-width="1.6"/>
<text x="459.5" y="967.0" font-size="15.00" text-anchor="middle" fill="#e4e4e4" font-weight="normal" textLength="27.3" lengthAdjust="spacingAndGlyphs" >100</text>
<text x="575.5" y="967.0" font-size="15.00" text-anchor="middle" fill="#e4e4e4" font-weight="normal" textLength="31.1" lengthAdjust="spacingAndGlyphs" >20%</text>
<text x="691.5" y="967.0" font-size="15.00" text-anchor="middle" fill="#e4e4e4" font-weight="normal" textLength="31.1" lengthAdjust="spacingAndGlyphs" >40%</text>
<text x="807.5" y="967.0" font-size="15.00" text-anchor="middle" fill="#e4e4e4" font-weight="normal" textLength="31.1" lengthAdjust="spacingAndGlyphs" >60%</text>
<text x="923.5" y="967.0" font-size="15.00" text-anchor="middle" fill="#e4e4e4" font-weight="normal" textLength="31.1" lengthAdjust="spacingAndGlyphs" >80%</text>
<text x="1039.5" y="967.0" font-size="15.00" text-anchor="middle" fill="#e4e4e4" font-weight="normal" textLength="40.2" lengthAdjust="spacingAndGlyphs" >100%</text>
<text x="737.0" y="672.5" font-size="14.60" text-anchor="middle" fill="#e4e4e4" font-weight="normal" textLength="91.0" lengthAdjust="spacingAndGlyphs" >DeltaE 2000</text>
<rect x="1121.00" y="104.00" width="795.00" height="622.00" fill="#000" />
<rect x="1128.00" y="111.00" width="783.00" height="608.00" fill="#323232" />
<rect x="1161.00" y="136.00" width="748.00" height="553.00" fill="#232323" />
<rect x="1162.0" y="137.0" width="746.0" height="551.0" fill="none" stroke="#8e8e8e" stroke-width="2"/>
<line x1="1162.00" y1="689.00" x2="1162.00" y2="694.00" stroke="#c8c8c8" stroke-width="1.6"/>
<text x="1162.0" y="711.2" font-size="15.00" text-anchor="middle" fill="#e4e4e4" font-weight="normal" textLength="9.1" lengthAdjust="spacingAndGlyphs" >0</text>
<line x1="1156.00" y1="687.70" x2="1161.00" y2="687.70" stroke="#c8c8c8" stroke-width="1.6"/>
<text x="1155.0" y="693.5" font-size="15.00" text-anchor="end" fill="#e4e4e4" font-weight="normal" textLength="9.1" lengthAdjust="spacingAndGlyphs" >0</text>
<line x1="1250.50" y1="689.00" x2="1250.50" y2="694.00" stroke="#c8c8c8" stroke-width="1.6"/>
<text x="1250.5" y="711.2" font-size="15.00" text-anchor="middle" fill="#e4e4e4" font-weight="normal" textLength="22.7" lengthAdjust="spacingAndGlyphs" >0,1</text>
<line x1="1156.00" y1="622.30" x2="1161.00" y2="622.30" stroke="#c8c8c8" stroke-width="1.6"/>
<text x="1155.0" y="628.1" font-size="15.00" text-anchor="end" fill="#e4e4e4" font-weight="normal" textLength="22.7" lengthAdjust="spacingAndGlyphs" >0,1</text>
<line x1="1339.00" y1="689.00" x2="1339.00" y2="694.00" stroke="#c8c8c8" stroke-width="1.6"/>
<text x="1339.0" y="711.2" font-size="15.00" text-anchor="middle" fill="#e4e4e4" font-weight="normal" textLength="22.7" lengthAdjust="spacingAndGlyphs" >0,2</text>
<line x1="1156.00" y1="556.90" x2="1161.00" y2="556.90" stroke="#c8c8c8" stroke-width="1.6"/>
<text x="1155.0" y="562.7" font-size="15.00" text-anchor="end" fill="#e4e4e4" font-weight="normal" textLength="22.7" lengthAdjust="spacingAndGlyphs" >0,2</text>
<line x1="1427.50" y1="689.00" x2="1427.50" y2="694.00" stroke="#c8c8c8" stroke-width="1.6"/>
<text x="1427.5" y="711.2" font-size="15.00" text-anchor="middle" fill="#e4e4e4" font-weight="normal" textLength="22.7" lengthAdjust="spacingAndGlyphs" >0,3</text>
<line x1="1156.00" y1="491.50" x2="1161.00" y2="491.50" stroke="#c8c8c8" stroke-width="1.6"/>
<text x="1155.0" y="497.3" font-size="15.00" text-anchor="end" fill="#e4e4e4" font-weight="normal" textLength="22.7" lengthAdjust="spacingAndGlyphs" >0,3</text>
<line x1="1516.00" y1="689.00" x2="1516.00" y2="694.00" stroke="#c8c8c8" stroke-width="1.6"/>
<text x="1516.0" y="711.2" font-size="15.00" text-anchor="middle" fill="#e4e4e4" font-weight="normal" textLength="22.7" lengthAdjust="spacingAndGlyphs" >0,4</text>
<line x1="1156.00" y1="426.10" x2="1161.00" y2="426.10" stroke="#c8c8c8" stroke-width="1.6"/>
<text x="1155.0" y="431.9" font-size="15.00" text-anchor="end" fill="#e4e4e4" font-weight="normal" textLength="22.7" lengthAdjust="spacingAndGlyphs" >0,4</text>
<line x1="1604.50" y1="689.00" x2="1604.50" y2="694.00" stroke="#c8c8c8" stroke-width="1.6"/>
<text x="1604.5" y="711.2" font-size="15.00" text-anchor="middle" fill="#e4e4e4" font-weight="normal" textLength="22.7" lengthAdjust="spacingAndGlyphs" >0,5</text>
<line x1="1156.00" y1="360.70" x2="1161.00" y2="360.70" stroke="#c8c8c8" stroke-width="1.6"/>
<text x="1155.0" y="366.5" font-size="15.00" text-anchor="end" fill="#e4e4e4" font-weight="normal" textLength="22.7" lengthAdjust="spacingAndGlyphs" >0,5</text>
<line x1="1693.00" y1="689.00" x2="1693.00" y2="694.00" stroke="#c8c8c8" stroke-width="1.6"/>
<text x="1693.0" y="711.2" font-size="15.00" text-anchor="middle" fill="#e4e4e4" font-weight="normal" textLength="22.7" lengthAdjust="spacingAndGlyphs" >0,6</text>
<line x1="1156.00" y1="295.30" x2="1161.00" y2="295.30" stroke="#c8c8c8" stroke-width="1.6"/>
<text x="1155.0" y="301.1" font-size="15.00" text-anchor="end" fill="#e4e4e4" font-weight="normal" textLength="22.7" lengthAdjust="spacingAndGlyphs" >0,6</text>
<line x1="1781.50" y1="689.00" x2="1781.50" y2="694.00" stroke="#c8c8c8" stroke-width="1.6"/>
<text x="1781.5" y="711.2" font-size="15.00" text-anchor="middle" fill="#e4e4e4" font-weight="normal" textLength="22.7" lengthAdjust="spacingAndGlyphs" >0,7</text>
<line x1="1156.00" y1="229.90" x2="1161.00" y2="229.90" stroke="#c8c8c8" stroke-width="1.6"/>
<text x="1155.0" y="235.7" font-size="15.00" text-anchor="end" fill="#e4e4e4" font-weight="normal" textLength="22.7" lengthAdjust="spacingAndGlyphs" >0,7</text>
<line x1="1870.00" y1="689.00" x2="1870.00" y2="694.00" stroke="#c8c8c8" stroke-width="1.6"/>
<text x="1870.0" y="711.2" font-size="15.00" text-anchor="middle" fill="#e4e4e4" font-weight="normal" textLength="22.7" lengthAdjust="spacingAndGlyphs" >0,8</text>
<line x1="1156.00" y1="164.50" x2="1161.00" y2="164.50" stroke="#c8c8c8" stroke-width="1.6"/>
<text x="1155.0" y="170.3" font-size="15.00" text-anchor="end" fill="#e4e4e4" font-weight="normal" textLength="22.7" lengthAdjust="spacingAndGlyphs" >0,8</text>
<text x="1520.0" y="131.0" font-size="14.60" text-anchor="middle" fill="#e4e4e4" font-weight="normal" textLength="87.0" lengthAdjust="spacingAndGlyphs" >CIE 1931 xy</text>
<rect x="1692.00" y="138.00" width="215.00" height="202.50" fill="#232323" />
<rect x="1348.50" y="749.50" width="335.50" height="205.00" fill="#000" />
<text x="28.5" y="151.3" font-size="40.60" text-anchor="start" fill="#f2f2f2" font-weight="normal" textLength="206.5" lengthAdjust="spacingAndGlyphs" >Saturation</text>
<text x="250.0" y="151.3" font-size="40.60" text-anchor="start" fill="#f2f2f2" font-weight="normal" textLength="151.5" lengthAdjust="spacingAndGlyphs" >Sweeps</text>
<text x="17.5" y="775.5" font-size="28.80" text-anchor="start" fill="#f2f2f2" font-weight="normal" textLength="116.0" lengthAdjust="spacingAndGlyphs" >Current</text>
<text x="145.7" y="775.5" font-size="28.80" text-anchor="start" fill="#f2f2f2" font-weight="normal" textLength="123.0" lengthAdjust="spacingAndGlyphs" >Reading</text>
<text x="17.5" y="822.0" font-size="25.40" text-anchor="start" fill="#f2f2f2" font-weight="normal" textLength="116.5" lengthAdjust="spacingAndGlyphs" >x: 0,4081</text>
<text x="17.5" y="865.7" font-size="25.40" text-anchor="start" fill="#f2f2f2" font-weight="normal" textLength="117.5" lengthAdjust="spacingAndGlyphs" >y: 0,5127</text>
<text x="17.5" y="910.6" font-size="25.40" text-anchor="start" fill="#f2f2f2" font-weight="normal" textLength="127.0" lengthAdjust="spacingAndGlyphs" >fL: 75,168</text>
<text x="17.5" y="955.2" font-size="25.40" text-anchor="start" fill="#f2f2f2" font-weight="normal" textLength="85.7" lengthAdjust="spacingAndGlyphs" >cd/m²:</text>
<text x="112.9" y="955.2" font-size="25.40" text-anchor="start" fill="#f2f2f2" font-weight="normal" textLength="103.2" lengthAdjust="spacingAndGlyphs" >257,545</text>
</svg>
<div class="cie" style="left:1162px;top:138px"><div class="hs" style="clip-path:polygon(62.4px 13.9px,91.0px 13.9px,98.2px 14.4px,112.5px 17.7px,126.8px 21.3px,138.0px 25.5px,150.9px 31.5px,173.8px 42.0px,196.7px 53.8px,219.6px 66.4px,242.5px 79.9px,265.4px 94.2px,288.3px 108.8px,308.0px 121.9px,383.9px 177.2px,441.1px 218.2px,478.0px 244.8px,519.1px 275.3px,549.6px 298.0px,580.1px 321.2px,610.7px 344.9px,638.2px 365.5px,178.0px 530.9px,169.0px 534.6px,162.2px 537.0px,154.2px 537.6px,146.2px 536.3px,138.2px 529.6px,130.2px 518.9px,123.5px 505.5px,114.1px 492.2px,102.1px 472.1px,90.7px 452.1px,79.4px 432.0px,70.6px 412.0px,66.3px 399.0px,56.1px 372.2px,45.4px 345.5px,35.4px 318.7px,25.8px 292.0px,23.0px 283.0px,17.3px 261.5px,11.6px 232.9px,7.3px 204.3px,4.4px 175.6px,3.0px 147.0px,2.6px 135.8px,3.4px 121.5px,5.2px 107.2px,8.0px 92.9px,12.3px 78.6px,19.5px 61.4px,26.6px 46.4px,33.8px 34.9px,40.9px 25.6px,48.1px 19.2px,55.3px 15.3px)"><i style="left:54px;top:13px;width:56px;background:linear-gradient(90deg,#00b900,#00b800,#00b800,#00b800,#00b900,#00b900,#00bb00,#00bc00)"></i>
<i style="left:50px;top:15px;width:64px;background:linear-gradient(90deg,#00b900,#00b900,#00b800,#00b800,#00b800,#00b900,#00ba00,#00bb00,#00bd00)"></i>
<i style="left:46px;top:17px;width:80px;background:linear-gradient(90deg,#00ba00,#00b900,#00b800,#00b800,#00b800,#00b900,#00ba00,#00bb00,#00bc00,#00be00,#00c000)"></i>
<i style="left:44px;top:19px;width:88px;background:linear-gradient(90deg,#00ba00,#00b900,#00b900,#00b800,#00b800,#00b900,#00ba00,#00bb00,#00bc00,#00be00,#00c000,#00c200)"></i>
<i style="left:41px;top:21px;width:96px;background:linear-gradient(90deg,#00bb00,#00ba00,#00b900,#00b900,#00b900,#00b900,#00b900,#00ba00,#00bc00,#00bd00,#00bf00,#00c100,#00c300)"></i>
<i style="left:39px;top:23px;width:104px;background:linear-gradient(90deg,#00bb00,#00ba00,#00b900,#00b900,#00b900,#00b900,#00b900,#00ba00,#00bb00,#00bd00,#00bf00,#00c100,#00c300,#00c500)"></i>
<i style="left:37px;top:25px;width:112px;background:linear-gradient(90deg,#00bc01,#00bb00,#00ba00,#00b900,#00b900,#00b900,#00b900,#00ba00,#00bb00,#00bd00,#00be00,#00c000,#00c300,#00c500,#00c700)"></i>
<i style="left:36px;top:27px;width:112px;background:linear-gradient(90deg,#00bc01,#00bb00,#00ba00,#00b900,#00b900,#00b900,#00ba00,#00ba00,#00bb00,#00bd00,#00be00,#00c000,#00c200,#00c500,#00c700)"></i>
<i style="left:34px;top:29px;width:120px;background:linear-gradient(90deg,#00bd02,#00bb01,#00ba00,#00ba00,#00b900,#00b900,#00ba00,#00ba00,#00bb00,#00bd00,#00be00,#00c000,#00c200,#00c400,#00c700,#00c900)"></i>
<i style="left:33px;top:31px;width:128px;background:linear-gradient(90deg,#00bd02,#00bc01,#00bb00,#00ba00,#00ba00,#00b900,#00ba00,#00ba00,#00bb00,#00bd00,#00be00,#00c000,#00c200,#00c400,#00c700,#00c900,#00cc00)"></i>
<i style="left:31px;top:33px;width:136px;background:linear-gradient(90deg,#00be03,#00bc02,#00bb01,#00ba00,#00ba00,#00ba00,#00ba00,#00ba00,#00bb00,#00bc00,#00be00,#00c000,#00c200,#00c400,#00c600,#00c900,#00cc00,#00ce00)"></i>
<i style="left:30px;top:35px;width:136px;background:linear-gradient(90deg,#00be04,#00bd03,#00bc02,#00bb01,#00ba00,#00ba00,#00ba00,#00bb00,#00bb00,#00bd00,#00be00,#00c000,#00c200,#00c400,#00c600,#00c900,#00cb00,#00ce00)"></i>
<i style="left:29px;top:37px;width:144px;background:linear-gradient(90deg,#00bf04,#00bd03,#00bc02,#00bb01,#00ba00,#00ba00,#00ba00,#00bb00,#00bc00,#00bd00,#00be00,#00c000,#00c200,#00c400,#00c600,#00c900,#00cb00,#00ce00,#00d100)"></i>
<i style="left:27px;top:39px;width:152px;background:linear-gradient(90deg,#00bf05,#00be04,#00bd03,#00bc02,#00bb01,#00bb00,#00bb00,#00bb00,#00bc00,#00bd00,#00be00,#00bf00,#00c100,#00c300,#00c600,#00c800,#00cb00,#00cd00,#00d000,#00d300)"></i>
<i style="left:26px;top:41px;width:152px;background:linear-gradient(90deg,#00c005,#00be04,#00bd03,#00bc02,#00bb01,#00bb00,#00bb00,#00bb00,#00bc00,#00bd00,#00be00,#00bf00,#00c100,#00c300,#00c600,#00c800,#00cb00,#00cd00,#00d000,#00d300)"></i>
<i style="left:25px;top:43px;width:160px;background:linear-gradient(90deg,#00c006,#00bf05,#00bd04,#00bc03,#00bc02,#00bb01,#00bb00,#00bb00,#00bc00,#00bd00,#00be00,#00c000,#00c100,#00c300,#00c600,#00c800,#00ca00,#00cd00,#00d000,#00d300,#00d600)"></i>
<i style="left:24px;top:45px;width:168px;background:linear-gradient(90deg,#00c107,#00bf06,#00be05,#00bd04,#00bc02,#00bc01,#00bb00,#00bc00,#00bc00,#00bd00,#00be00,#00c000,#00c100,#00c300,#00c500,#00c800,#00ca00,#00cd00,#00d000,#00d300,#00d600,#00d900)"></i>
<i style="left:23px;top:47px;width:168px;background:linear-gradient(90deg,#00c107,#00c006,#00be05,#00bd04,#00bc03,#00bc02,#00bc01,#00bc00,#00bc00,#00bd00,#00be00,#00c000,#00c100,#00c300,#00c500,#00c800,#00ca00,#00cd00,#00d000,#00d300,#00d600,#00d900)"></i>
<i style="left:22px;top:49px;width:176px;background:linear-gradient(90deg,#00c208,#00c007,#00bf06,#00be05,#00bd04,#00bc03,#00bc02,#00bc01,#00bd00,#00bd00,#00be00,#00c000,#00c100,#00c300,#00c500,#00c800,#00ca00,#00cd00,#00d000,#00d300,#00d500,#00d900,#00dc00)"></i>
<i style="left:21px;top:51px;width:184px;background:linear-gradient(90deg,#00c209,#00c108,#00bf06,#00be05,#00bd04,#00bd03,#00bc02,#00bc01,#00bd00,#00be00,#00bf00,#00c000,#00c200,#00c300,#00c500,#00c800,#00ca00,#00cd00,#00d000,#00d200,#00d500,#00d800,#00db00,#00de00)"></i>
<i style="left:20px;top:53px;width:184px;background:linear-gradient(90deg,#00c309,#00c108,#00c007,#00bf06,#00be05,#00bd04,#00bd03,#00bd02,#00bd01,#00be00,#00bf00,#00c000,#00c200,#00c300,#00c600,#00c800,#00ca00,#00cd00,#00cf00,#00d200,#00d500,#00d800,#00db00,#00de00)"></i>
<i style="left:19px;top:55px;width:192px;background:linear-gradient(90deg,#00c30a,#00c209,#00c008,#00bf07,#00be06,#00bd04,#00bd03,#00bd02,#00bd01,#00be00,#00bf00,#00c000,#00c200,#00c400,#00c600,#00c800,#00ca00,#00cd00,#00cf00,#00d200,#00d500,#00d800,#00db00,#00de00,#00e100)"></i>
<i style="left:18px;top:57px;width:192px;background:linear-gradient(90deg,#00c40b,#00c20a,#00c108,#00c007,#00bf06,#00be05,#00be04,#00be03,#00be02,#00be01,#00bf00,#00c000,#00c200,#00c400,#00c600,#00c800,#00ca00,#00cd00,#00cf00,#00d200,#00d500,#00d800,#00db00,#00de00,#00e100)"></i>
<i style="left:17px;top:59px;width:200px;background:linear-gradient(90deg,#00c50c,#00c30a,#00c109,#00c008,#00bf07,#00be06,#00be05,#00be04,#00be02,#00bf01,#00c000,#00c100,#00c200,#00c400,#00c600,#00c800,#00ca00,#00cd00,#00cf00,#00d200,#00d500,#00d800,#00db00,#00de00,#00e100,#00e400)"></i>
<i style="left:16px;top:61px;width:200px;background:linear-gradient(90deg,#00c50c,#00c30b,#00c20a,#00c109,#00c008,#00bf06,#00be05,#00be04,#00be03,#00bf02,#00c001,#00c100,#00c200,#00c400,#00c600,#00c800,#00ca00,#00cd00,#00cf00,#00d200,#00d500,#00d800,#00db00,#00de00,#00e100,#00e400)"></i>
<i style="left:15px;top:63px;width:208px;background:linear-gradient(90deg,#00c60d,#00c40c,#00c20b,#00c109,#00c008,#00bf07,#00bf06,#00bf05,#00bf04,#00bf03,#00c002,#00c100,#00c200,#00c400,#00c600,#00c800,#00ca00,#00cd00,#00cf00,#00d200,#00d500,#00d800,#00db00,#00de00,#00e000,#00e300,#00e600)"></i>
<i style="left:15px;top:65px;width:208px;background:linear-gradient(90deg,#00c60e,#00c40c,#00c30b,#00c10a,#00c009,#00c008,#00bf07,#00bf05,#00bf04,#00c003,#00c002,#00c201,#00c300,#00c400,#00c600,#00c800,#00cb00,#00cd00,#00d000,#00d200,#00d500,#00d800,#00db00,#00de00,#00e100,#00e400,#00e700)"></i>
<i style="left:14px;top:67px;width:216px;background:linear-gradient(90deg,#00c70e,#00c50d,#00c30c,#00c20b,#00c10a,#00c008,#00c007,#00c006,#00c005,#00c004,#00c103,#00c202,#00c300,#00c500,#00c600,#00c800,#00cb00,#00cd00,#00d000,#00d200,#00d500,#00d800,#00db00,#00de00,#00e100,#00e400,#00e600,#00e900)"></i>
<i style="left:13px;top:69px;width:224px;background:linear-gradient(90deg,#00c70f,#00c60e,#00c40d,#00c30b,#00c20a,#00c109,#00c008,#00c007,#00c006,#00c004,#00c103,#00c202,#00c301,#00c500,#00c700,#00c900,#00cb00,#00cd00,#00d000,#00d200,#00d500,#00d800,#00db00,#00de00,#00e000,#00e300,#00e600,#00e900,#00ec00)"></i>
<i style="left:12px;top:71px;width:224px;background:linear-gradient(90deg,#00c810,#00c60f,#00c50d,#00c30c,#00c20b,#00c10a,#00c109,#00c007,#00c006,#00c105,#00c104,#00c203,#00c402,#00c501,#00c700,#00c900,#00cb00,#00cd00,#00d000,#00d200,#00d500,#00d800,#00db00,#00dd00,#00e000,#00e300,#00e600,#00e900,#00ec00)"></i>
<i style="left:11px;top:73px;width:232px;background:linear-gradient(90deg,#00c911,#00c70f,#00c50e,#00c40d,#00c30c,#00c20b,#00c109,#00c108,#00c107,#00c106,#00c205,#00c304,#00c402,#00c501,#00c700,#00c900,#00cb00,#00cd00,#00d000,#00d200,#00d500,#00d800,#00da00,#00dd00,#00e000,#00e300,#00e600,#00e900,#00ec00,#00ee00)"></i>
<i style="left:10px;top:75px;width:232px;background:linear-gradient(90deg,#00c911,#00c710,#00c60f,#00c40e,#00c30c,#00c20b,#00c20a,#00c109,#00c108,#00c207,#00c205,#00c304,#00c403,#00c602,#00c701,#00c900,#00cb00,#00cd00,#00d000,#00d200,#00d500,#00d800,#00da00,#00dd00,#00e000,#00e300,#00e600,#00e900,#00ec00,#00ee00)"></i>
<i style="left:10px;top:77px;width:240px;background:linear-gradient(90deg,#00ca12,#00c811,#00c610,#00c50e,#00c40d,#00c30c,#00c20b,#00c209,#00c208,#00c207,#00c306,#00c305,#00c504,#00c602,#00c801,#00c900,#00cb00,#00ce00,#00d000,#00d300,#00d500,#00d800,#00db00,#00de00,#00e000,#00e300,#00e600,#00e900,#00ec00,#00ee00,#00f100)"></i>
<i style="left:9px;top:79px;width:240px;background:linear-gradient(90deg,#00ca13,#00c912,#00c710,#00c50f,#00c40e,#00c30d,#00c30b,#00c20a,#00c209,#00c208,#00c307,#00c406,#00c504,#00c603,#00c802,#00ca01,#00cc00,#00ce00,#00d000,#00d300,#00d500,#00d800,#00db00,#00de00,#00e000,#00e300,#00e600,#00e900,#00ec00,#00ee00,#00f100)"></i>
<i style="left:8px;top:81px;width:248px;background:linear-gradient(90deg,#00cb14,#00c912,#00c811,#00c610,#00c50f,#00c40d,#00c30c,#00c30b,#00c30a,#00c309,#00c307,#00c406,#00c505,#00c604,#00c803,#00ca01,#00cc00,#00ce00,#00d000,#00d300,#00d500,#00d800,#00db00,#00dd00,#00e000,#00e300,#00e600,#00e900,#00ec00,#00ee00,#00f100,#00f300)"></i>
<i style="left:8px;top:83px;width:248px;background:linear-gradient(90deg,#00cc14,#00ca13,#00c812,#00c711,#00c50f,#00c40e,#00c40d,#00c30c,#00c30a,#00c309,#00c408,#00c507,#00c606,#00c704,#00c803,#00ca02,#00cc01,#00ce00,#00d100,#00d300,#00d600,#00d800,#00db00,#00de00,#00e100,#00e300,#00e600,#00e900,#00ec00,#00ee00,#00f100,#00f300)"></i>
<i style="left:7px;top:85px;width:256px;background:linear-gradient(90deg,#00cc15,#00ca14,#00c913,#00c711,#00c610,#00c50f,#00c40e,#00c40c,#00c40b,#00c40a,#00c409,#00c508,#00c606,#00c705,#00c904,#00ca03,#00cc01,#00ce00,#00d100,#00d300,#00d600,#00d800,#00db00,#00de00,#00e100,#00e300,#00e600,#00e900,#00ec00,#00ee00,#00f100,#00f300,#00f500)"></i>
<i style="left:7px;top:87px;width:256px;background:linear-gradient(90deg,#00cd16,#00cb15,#00c913,#00c812,#00c611,#00c50f,#00c50e,#00c40d,#00c40c,#00c40b,#00c509,#00c608,#00c707,#00c806,#00c904,#00cb03,#00cd02,#00cf01,#00d100,#00d400,#00d600,#00d900,#00db00,#00de00,#00e100,#00e400,#00e600,#00e900,#00ec00,#00ee00,#00f100,#00f300,#00f600)"></i>
<i style="left:6px;top:89px;width:264px;background:linear-gradient(90deg,#00cd17,#00cc16,#00ca14,#00c813,#00c712,#00c610,#00c50f,#00c50e,#00c50d,#00c50b,#00c50a,#00c609,#00c708,#00c807,#00c905,#00cb04,#00cd03,#00cf01,#00d100,#00d400,#00d600,#00d900,#00db00,#00de00,#00e100,#00e400,#00e600,#00e900,#00ec00,#00ee00,#00f100,#00f300,#00f500,#00f700)"></i>
<i style="left:5px;top:91px;width:264px;background:linear-gradient(90deg,#00ce18,#00cc16,#00ca15,#00c914,#00c812,#00c711,#00c610,#00c50f,#00c50d,#00c50c,#00c60b,#00c60a,#00c709,#00c807,#00ca06,#00cb05,#00cd03,#00cf02,#00d101,#00d400,#00d600,#00d900,#00db00,#00de00,#00e100,#00e400,#00e600,#00e900,#00ec00,#00ee00,#00f100,#00f300,#00f500,#00f700)"></i>
<i style="left:5px;top:93px;width:264px;background:linear-gradient(90deg,#00cf19,#00cd17,#00cb16,#00c914,#00c813,#00c712,#00c711,#00c60f,#00c60e,#00c60d,#00c60c,#00c70a,#00c809,#00c908,#00ca07,#00cc05,#00ce04,#00d003,#00d201,#00d400,#00d700,#00d900,#00dc00,#00de00,#00e100,#00e400,#00e700,#00e900,#00ec00,#00ef00,#00f100,#00f300,#00f600,#00f800)"></i>
<i style="left:5px;top:95px;width:272px;background:linear-gradient(90deg,#00cf19,#00cd18,#00cb17,#00ca15,#00c914,#00c813,#00c711,#00c710,#00c60f,#00c60e,#00c70c,#00c70b,#00c80a,#00c909,#00cb07,#00cc06,#00ce05,#00d003,#00d202,#00d501,#00d700,#00da00,#00dc00,#00df00,#00e100,#00e400,#00e700,#00ea00,#00ec00,#00ef00,#00f100,#00f400,#00f600,#00f800,#00fa00)"></i>
<i style="left:4px;top:97px;width:272px;background:linear-gradient(90deg,#00d01a,#00ce19,#00cc17,#00cb16,#00c915,#00c813,#00c812,#00c711,#00c710,#00c70e,#00c70d,#00c80c,#00c90b,#00ca09,#00cb08,#00cd07,#00ce06,#00d004,#00d203,#00d501,#00d700,#00da00,#00dc00,#00df00,#00e200,#00e400,#00e700,#00ea00,#00ec00,#00ef00,#00f100,#00f300,#00f600,#00f800,#00f900)"></i>
<i style="left:4px;top:99px;width:280px;background:linear-gradient(90deg,#00d01b,#00ce1a,#00cd18,#00cb17,#00ca15,#00c914,#00c813,#00c812,#00c710,#00c80f,#00c80e,#00c80d,#00c90b,#00ca0a,#00cc09,#00cd07,#00cf06,#00d105,#00d303,#00d502,#00d801,#00da00,#00dd00,#00df00,#00e200,#00e500,#00e700,#00ea00,#00ec00,#00ef00,#00f100,#00f400,#00f600,#00f800,#00fa00,#00fb00)"></i>
<i style="left:4px;top:101px;width:280px;background:linear-gradient(90deg,#00d11c,#00cf1a,#00cd19,#00cc18,#00ca16,#00c915,#00c914,#00c812,#00c811,#00c810,#00c80f,#00c90d,#00ca0c,#00cb0b,#00cc09,#00ce08,#00cf07,#00d105,#00d304,#00d603,#00d801,#00da00,#00dd00,#00e000,#00e200,#00e500,#00e800,#00ea00,#00ed00,#00ef00,#00f200,#00f400,#00f600,#00f800,#00fa00,#00fb00)"></i>
<i style="left:3px;top:103px;width:288px;background:linear-gradient(90deg,#00d11d,#00d01b,#00ce1a,#00cc18,#00cb17,#00ca16,#00c914,#00c913,#00c912,#00c911,#00c90f,#00c90e,#00ca0d,#00cb0c,#00cd0a,#00ce09,#00d008,#00d206,#00d405,#00d604,#00d802,#00db01,#00dd00,#00e000,#00e200,#00e500,#00e700,#00ea00,#00ed00,#00ef00,#00f200,#00f400,#00f600,#00f800,#00fa00,#00fb00,#05fd00)"></i>
<i style="left:3px;top:105px;width:288px;background:linear-gradient(90deg,#00d21e,#00d01c,#00ce1b,#00cd19,#00cc18,#00cb17,#00ca15,#00c914,#00c913,#00c911,#00c910,#00ca0f,#00cb0e,#00cc0c,#00cd0b,#00cf0a,#00d008,#00d207,#00d406,#00d604,#00d903,#00db01,#00dd00,#00e000,#00e300,#00e500,#00e800,#00ea00,#00ed00,#00ef00,#00f200,#00f400,#00f600,#00f800,#00fa00,#00fb00,#06fd00)"></i>
<i style="left:2px;top:107px;width:296px;background:linear-gradient(90deg,#00d31f,#00d11d,#00cf1c,#00ce1a,#00cc19,#00cb18,#00cb16,#00ca15,#00ca14,#00ca12,#00ca11,#00ca10,#00cb0e,#00cc0d,#00cd0c,#00cf0b,#00d009,#00d208,#00d406,#00d605,#00d904,#00db02,#00de01,#00e000,#00e300,#00e500,#00e800,#00ea00,#00ed00,#00ef00,#00f200,#00f400,#00f600,#00f800,#00fa00,#00fb00,#06fd00,#0efe00)"></i>
<i style="left:2px;top:109px;width:296px;background:linear-gradient(90deg,#00d31f,#00d11e,#00d01c,#00ce1b,#00cd1a,#00cc18,#00cb17,#00cb16,#00ca14,#00ca13,#00cb12,#00cb11,#00cc0f,#00cd0e,#00ce0d,#00cf0b,#00d10a,#00d309,#00d507,#00d706,#00d904,#00dc03,#00de01,#00e000,#00e300,#00e600,#00e800,#00eb00,#00ed00,#00f000,#00f200,#00f400,#00f600,#00f800,#00fa00,#00fb00,#06fd00,#0ffe00)"></i>
<i style="left:2px;top:111px;width:296px;background:linear-gradient(90deg,#00d420,#00d21f,#00d01d,#00cf1c,#00ce1a,#00cd19,#00cc18,#00cb16,#00cb15,#00cb14,#00cb13,#00cc11,#00cc10,#00cd0f,#00cf0d,#00d00c,#00d20b,#00d309,#00d508,#00d706,#00da05,#00dc03,#00de02,#00e100,#00e300,#00e600,#00e800,#00eb00,#00ed00,#00f000,#00f200,#00f400,#00f600,#00f800,#00fa00,#00fb00,#07fd00,#10fe00)"></i>
<i style="left:2px;top:113px;width:304px;background:linear-gradient(90deg,#00d421,#00d220,#00d11e,#00cf1d,#00ce1b,#00cd1a,#00cc19,#00cc17,#00cc16,#00cc15,#00cc13,#00cc12,#00cd11,#00ce0f,#00cf0e,#00d00d,#00d20b,#00d40a,#00d609,#00d807,#00da06,#00dc04,#00df03,#00e101,#00e400,#00e600,#00e900,#00eb00,#00ee00,#00f000,#00f200,#00f500,#00f700,#00f800,#00fa00,#00fc00,#08fd00,#11fe00,#1aff00)"></i>
<i style="left:1px;top:115px;width:304px;background:linear-gradient(90deg,#00d522,#00d321,#00d21f,#00d01e,#00cf1c,#00ce1b,#00cd1a,#00cc18,#00cc17,#00cc16,#00cc14,#00cd13,#00cd12,#00ce10,#00cf0f,#00d10e,#00d20c,#00d40b,#00d60a,#00d808,#00da07,#00dd05,#00df04,#00e102,#00e400,#00e600,#00e900,#00eb00,#00ee00,#00f000,#00f200,#00f500,#00f700,#00f800,#00fa00,#00fc00,#08fd00,#10fe00,#19fe00)"></i>
<i style="left:1px;top:117px;width:312px;background:linear-gradient(90deg,#00d523,#00d421,#00d220,#00d11f,#00cf1d,#00ce1c,#00ce1a,#00cd19,#00cd18,#00cd16,#00cd15,#00cd14,#00ce12,#00cf11,#00d010,#00d10f,#00d30d,#00d50c,#00d70a,#00d909,#00db07,#00dd06,#00df04,#00e203,#00e401,#00e700,#00e900,#00ec00,#00ee00,#00f000,#00f300,#00f500,#00f700,#00f900,#00fa00,#01fc00,#09fd00,#11fe00,#1aff00,#24ff00)"></i>
<i style="left:1px;top:119px;width:312px;background:linear-gradient(90deg,#00d624,#00d422,#00d321,#00d11f,#00d01e,#00cf1d,#00ce1b,#00ce1a,#00cd19,#00cd17,#00cd16,#00ce15,#00cf13,#00cf12,#00d111,#00d20f,#00d30e,#00d50d,#00d70b,#00d90a,#00db08,#00dd07,#00e005,#00e203,#00e502,#00e700,#00ea00,#00ec00,#00ee00,#00f100,#00f300,#00f500,#00f700,#00f900,#00fa00,#01fc00,#09fd00,#12fe00,#1bff00,#25ff00)"></i>
<i style="left:1px;top:121px;width:312px;background:linear-gradient(90deg,#00d725,#00d523,#00d322,#00d220,#00d11f,#00d01d,#00cf1c,#00ce1b,#00ce19,#00ce18,#00ce17,#00cf15,#00cf14,#00d013,#00d111,#00d310,#00d40f,#00d60d,#00d80c,#00da0a,#00dc09,#00de07,#00e006,#00e304,#00e503,#00e701,#00ea00,#00ec00,#00ef00,#00f100,#00f300,#00f500,#00f700,#00f900,#00fb00,#02fc00,#0afd00,#13fe00,#1cff00,#26ff00)"></i>
<i style="left:1px;top:123px;width:320px;background:linear-gradient(90deg,#00d726,#00d524,#00d423,#00d221,#00d120,#00d01e,#00cf1d,#00cf1c,#00cf1a,#00cf19,#00cf18,#00cf16,#00d015,#00d114,#00d212,#00d311,#00d510,#00d60e,#00d80d,#00da0b,#00dc0a,#00de08,#00e107,#00e305,#00e503,#00e802,#00ea00,#00ed00,#00ef00,#00f100,#00f300,#00f500,#00f700,#00f900,#00fb00,#03fc00,#0bfd00,#14fe00,#1eff00,#27ff00,#31ff00)"></i>
<i style="left:1px;top:125px;width:320px;background:linear-gradient(90deg,#00d827,#00d625,#00d424,#00d322,#00d221,#00d11f,#00d01e,#00cf1c,#00cf1b,#00cf1a,#00cf18,#00d017,#00d016,#00d114,#00d213,#00d412,#00d510,#00d70f,#00d90e,#00db0c,#00dd0b,#00df09,#00e107,#00e306,#00e604,#00e802,#00eb01,#00ed00,#00ef00,#00f100,#00f400,#00f600,#00f800,#00f900,#00fb00,#04fc00,#0cfd00,#15fe00,#1fff00,#28ff00,#33ff00)"></i>
<i style="left:0px;top:127px;width:320px;background:linear-gradient(90deg,#00d828,#00d726,#00d525,#00d423,#00d222,#00d120,#00d11f,#00d01e,#00d01c,#00d01b,#00d019,#00d018,#00d117,#00d215,#00d314,#00d413,#00d611,#00d710,#00d90f,#00db0d,#00dd0c,#00df0a,#00e108,#00e407,#00e605,#00e803,#00eb02,#00ed00,#00ef00,#00f100,#00f400,#00f600,#00f800,#00f900,#00fb00,#03fc00,#0cfd00,#15fe00,#1eff00,#28ff00,#33ff00)"></i>
<i style="left:0px;top:129px;width:328px;background:linear-gradient(90deg,#00d929,#00d727,#00d626,#00d424,#00d323,#00d221,#00d120,#00d11e,#00d01d,#00d01c,#00d11a,#00d119,#00d218,#00d216,#00d315,#00d514,#00d612,#00d811,#00d90f,#00db0e,#00dd0c,#00e00b,#00e209,#00e408,#00e606,#00e904,#00eb02,#00ed01,#00f000,#00f200,#00f400,#00f600,#00f800,#00f900,#00fb00,#04fc00,#0dfd00,#16fe00,#20ff00,#2aff00,#34ff00,#3eff00)"></i>
<i style="left:0px;top:131px;width:328px;background:linear-gradient(90deg,#00d92a,#00d828,#00d627,#00d525,#00d424,#00d322,#00d221,#00d11f,#00d11e,#00d11d,#00d11b,#00d21a,#00d219,#00d317,#00d416,#00d515,#00d713,#00d812,#00da10,#00dc0f,#00de0d,#00e00c,#00e20a,#00e408,#00e707,#00e905,#00eb03,#00ee01,#00f000,#00f200,#00f400,#00f600,#00f800,#00fa00,#00fb00,#05fc00,#0efd00,#17fe00,#21ff00,#2bff00,#35ff00,#40ff00)"></i>
<i style="left:0px;top:133px;width:328px;background:linear-gradient(90deg,#00da2b,#00d829,#00d728,#00d526,#00d425,#00d323,#00d322,#00d220,#00d21f,#00d21e,#00d21c,#00d21b,#00d319,#00d418,#00d517,#00d615,#00d714,#00d913,#00db11,#00dc10,#00de0e,#00e10d,#00e30b,#00e509,#00e708,#00e906,#00ec04,#00ee02,#00f000,#00f200,#00f400,#00f600,#00f800,#00fa00,#00fb00,#06fc00,#0ffe00,#18fe00,#22ff00,#2cff00,#36ff00,#41ff00)"></i>
<i style="left:0px;top:135px;width:336px;background:linear-gradient(90deg,#00db2c,#00d92a,#00d729,#00d627,#00d526,#00d424,#00d323,#00d321,#00d220,#00d21e,#00d21d,#00d31c,#00d31a,#00d419,#00d518,#00d616,#00d815,#00d914,#00db12,#00dd11,#00df0f,#00e10d,#00e30c,#00e50a,#00e808,#00ea07,#00ec05,#00ee03,#00f101,#00f300,#00f500,#00f700,#00f800,#00fa00,#00fb00,#07fd00,#10fe00,#19fe00,#23ff00,#2dff00,#38ff00,#43ff00,#4eff00)"></i>
<i style="left:0px;top:137px;width:336px;background:linear-gradient(90deg,#00db2d,#00d92b,#00d82a,#00d728,#00d527,#00d525,#00d424,#00d322,#00d321,#00d31f,#00d31e,#00d31d,#00d41b,#00d51a,#00d619,#00d717,#00d816,#00da14,#00dc13,#00dd12,#00df10,#00e10e,#00e40d,#00e60b,#00e809,#00ea08,#00ec06,#00ef04,#00f102,#00f300,#00f500,#00f700,#00f900,#00fa00,#00fc00,#07fd00,#11fe00,#1afe00,#24ff00,#2eff00,#39ff00,#44ff00,#4fff00)"></i>
<i style="left:0px;top:139px;width:344px;background:linear-gradient(90deg,#00dc2e,#00da2c,#00d92b,#00d729,#00d628,#00d526,#00d425,#00d423,#00d422,#00d420,#00d41f,#00d41e,#00d51c,#00d51b,#00d61a,#00d818,#00d917,#00db15,#00dc14,#00de12,#00e011,#00e20f,#00e40e,#00e60c,#00e80a,#00eb08,#00ed07,#00ef05,#00f103,#00f301,#00f500,#00f700,#00f900,#00fa00,#00fc00,#08fd00,#12fe00,#1bfe00,#25ff00,#30ff00,#3aff00,#45ff00,#51ff00,#5dff00)"></i>
<i style="left:0px;top:141px;width:344px;background:linear-gradient(90deg,#00dc2f,#00db2d,#00d92c,#00d82a,#00d729,#00d627,#00d526,#00d524,#00d423,#00d421,#00d420,#00d51f,#00d51d,#00d61c,#00d71b,#00d819,#00da18,#00db16,#00dd15,#00df13,#00e012,#00e210,#00e50f,#00e70d,#00e90b,#00eb09,#00ed08,#00ef06,#00f104,#00f402,#00f500,#00f700,#00f900,#00fa00,#01fc00,#09fd00,#13fe00,#1cff00,#26ff00,#31ff00,#3cff00,#47ff00,#52ff00,#5eff00)"></i>
<i style="left:0px;top:143px;width:344px;background:linear-gradient(90deg,#00dd30,#00db2e,#00da2d,#00d82b,#00d72a,#00d628,#00d627,#00d525,#00d524,#00d522,#00d521,#00d520,#00d61e,#00d71d,#00d81c,#00d91a,#00da19,#00dc17,#00dd16,#00df14,#00e113,#00e311,#00e510,#00e70e,#00e90c,#00eb0a,#00ee08,#00f007,#00f205,#00f403,#00f601,#00f800,#00f900,#00fb00,#01fc00,#0afd00,#14fe00,#1dff00,#28ff00,#32ff00,#3dff00,#48ff00,#54ff00,#60ff00)"></i>
<i style="left:0px;top:145px;width:352px;background:linear-gradient(90deg,#00dd31,#00dc2f,#00da2e,#00d92c,#00d82b,#00d729,#00d628,#00d626,#00d625,#00d523,#00d622,#00d621,#00d71f,#00d71e,#00d81d,#00d91b,#00db1a,#00dc18,#00de17,#00e015,#00e114,#00e312,#00e511,#00e80f,#00ea0d,#00ec0b,#00ee09,#00f008,#00f206,#00f404,#00f602,#00f800,#00f900,#00fb00,#02fc00,#0bfd00,#15fe00,#1fff00,#29ff00,#34ff00,#3fff00,#4aff00,#56ff00,#62ff00,#6eff00)"></i>
<i style="left:1px;top:147px;width:352px;background:linear-gradient(90deg,#00de32,#00dc30,#00db2f,#00da2d,#00d82b,#00d82a,#00d729,#00d627,#00d626,#00d624,#00d623,#00d721,#00d720,#00d81f,#00d91d,#00da1c,#00dc1b,#00dd19,#00df18,#00e016,#00e215,#00e413,#00e611,#00e810,#00ea0e,#00ec0c,#00ef0a,#00f108,#00f306,#00f504,#00f602,#00f800,#00fa00,#00fb00,#04fc00,#0dfd00,#17fe00,#21ff00,#2bff00,#36ff00,#42ff00,#4dff00,#59ff00,#65ff00,#72ff00)"></i>
<i style="left:1px;top:149px;width:352px;background:linear-gradient(90deg,#00de33,#00dd31,#00db30,#00da2e,#00d92d,#00d82b,#00d82a,#00d728,#00d727,#00d725,#00d724,#00d723,#00d821,#00d920,#00da1e,#00db1d,#00dc1c,#00de1a,#00df19,#00e117,#00e316,#00e514,#00e712,#00e911,#00eb0f,#00ed0d,#00ef0b,#00f109,#00f307,#00f505,#00f703,#00f801,#00fa00,#00fb00,#05fd00,#0efe00,#18fe00,#22ff00,#2dff00,#38ff00,#43ff00,#4fff00,#5bff00,#67ff00,#74ff00)"></i>
<i style="left:1px;top:151px;width:352px;background:linear-gradient(90deg,#00df34,#00dd32,#00dc31,#00db2f,#00da2e,#00d92c,#00d82b,#00d829,#00d728,#00d726,#00d825,#00d824,#00d922,#00d921,#00da1f,#00db1e,#00dd1d,#00de1b,#00e01a,#00e118,#00e317,#00e515,#00e713,#00e912,#00eb10,#00ed0e,#00ef0c,#00f10a,#00f308,#00f506,#00f704,#00f902,#00fa00,#00fc00,#06fd00,#0ffe00,#19fe00,#23ff00,#2eff00,#39ff00,#45ff00,#50ff00,#5cff00,#69ff00,#76ff00)"></i>
<i style="left:1px;top:153px;width:360px;background:linear-gradient(90deg,#00df35,#00de33,#00dd32,#00db30,#00da2f,#00d92d,#00d92c,#00d82a,#00d829,#00d827,#00d826,#00d925,#00d923,#00da22,#00db20,#00dc1f,#00dd1e,#00df1c,#00e01b,#00e219,#00e418,#00e616,#00e814,#00ea13,#00ec11,#00ee0f,#00f00d,#00f20b,#00f409,#00f507,#00f705,#00f903,#00fa01,#00fc00,#07fd00,#10fe00,#1afe00,#25ff00,#2fff00,#3bff00,#46ff00,#52ff00,#5eff00,#6bff00,#78ff00,#85ff00)"></i>
<i style="left:1px;top:155px;width:360px;background:linear-gradient(90deg,#00e036,#00de35,#00dd33,#00dc31,#00db30,#00da2e,#00d92d,#00d92b,#00d92a,#00d929,#00d927,#00d926,#00da24,#00db23,#00db22,#00dd20,#00de1f,#00df1d,#00e11c,#00e31a,#00e419,#00e617,#00e815,#00ea14,#00ec12,#00ee10,#00f00e,#00f20c,#00f40a,#00f608,#00f706,#00f904,#00fb02,#00fc00,#08fd00,#11fe00,#1bfe00,#26ff00,#31ff00,#3cff00,#48ff00,#54ff00,#60ff00,#6dff00,#7aff00,#87ff00)"></i>
<i style="left:1px;top:157px;width:360px;background:linear-gradient(90deg,#00e137,#00df36,#00de34,#00dd33,#00dc31,#00db30,#00da2e,#00da2d,#00d92b,#00d92a,#00da28,#00da27,#00da25,#00db24,#00dc23,#00dd21,#00de20,#00e01e,#00e11d,#00e31b,#00e51a,#00e718,#00e917,#00eb15,#00ec13,#00ee11,#00f00f,#00f20d,#00f40b,#00f609,#00f807,#00f905,#00fb03,#00fc00,#09fd00,#12fe00,#1cff00,#27ff00,#32ff00,#3dff00,#49ff00,#55ff00,#62ff00,#6fff00,#7cff00,#8aff00)"></i>
<i style="left:1px;top:159px;width:368px;background:linear-gradient(90deg,#00e139,#00e037,#00de35,#00dd34,#00dc32,#00db31,#00db2f,#00da2e,#00da2c,#00da2b,#00da29,#00db28,#00db27,#00dc25,#00dd24,#00de22,#00df21,#00e01f,#00e21e,#00e41c,#00e51b,#00e719,#00e918,#00eb16,#00ed14,#00ef12,#00f110,#00f30e,#00f50c,#00f60a,#00f808,#00fa06,#00fb04,#00fc01,#09fd00,#13fe00,#1eff00,#28ff00,#33ff00,#3fff00,#4bff00,#57ff00,#64ff00,#71ff00,#7eff00,#8cff00,#9aff00)"></i>
<i style="left:1px;top:161px;width:368px;background:linear-gradient(90deg,#00e23a,#00e038,#00df37,#00de35,#00dd33,#00dc32,#00db30,#00db2f,#00db2d,#00db2c,#00db2b,#00db29,#00dc28,#00dc26,#00dd25,#00de24,#00e022,#00e121,#00e31f,#00e41e,#00e61c,#00e81a,#00e919,#00eb17,#00ed15,#00ef13,#00f111,#00f30f,#00f50d,#00f70b,#00f809,#00fa07,#00fb05,#01fc02,#0afd00,#14fe00,#1fff00,#2aff00,#35ff00,#40ff00,#4cff00,#59ff00,#66ff00,#73ff00,#80ff00,#8eff00,#9dff00)"></i>
<i style="left:1px;top:163px;width:376px;background:linear-gradient(90deg,#00e23b,#00e139,#00e038,#00de36,#00dd35,#00dd33,#00dc32,#00dc30,#00db2f,#00db2d,#00dc2c,#00dc2a,#00dc29,#00dd27,#00de26,#00df25,#00e023,#00e222,#00e320,#00e51f,#00e61d,#00e81c,#00ea1a,#00ec18,#00ee16,#00f014,#00f213,#00f311,#00f50f,#00f70c,#00f80a,#00fa08,#00fb06,#02fc03,#0bfd01,#15fe00,#20ff00,#2bff00,#36ff00,#42ff00,#4eff00,#5bff00,#67ff00,#75ff00,#82ff00,#91ff00,#9fff00,#aeff00)"></i>
<i style="left:1px;top:165px;width:376px;background:linear-gradient(90deg,#00e33c,#00e13b,#00e039,#00df37,#00de36,#00dd34,#00dd33,#00dc31,#00dc30,#00dc2e,#00dc2d,#00dd2b,#00dd2a,#00de29,#00df27,#00e026,#00e124,#00e223,#00e421,#00e520,#00e71e,#00e91d,#00ea1b,#00ec19,#00ee17,#00f016,#00f214,#00f412,#00f510,#00f70e,#00f90b,#00fa09,#00fb07,#03fd04,#0cfe02,#17fe00,#21ff00,#2cff00,#38ff00,#44ff00,#50ff00,#5cff00,#69ff00,#77ff00,#85ff00,#93ff00,#a2ff00,#b1ff00)"></i>
<i style="left:1px;top:167px;width:376px;background:linear-gradient(90deg,#00e33e,#00e23c,#00e13a,#00e039,#00df37,#00de35,#00dd34,#00dd32,#00dd31,#00dd30,#00dd2e,#00dd2d,#00de2b,#00de2a,#00df28,#00e027,#00e126,#00e324,#00e423,#00e621,#00e71f,#00e91e,#00eb1c,#00ed1a,#00ef19,#00f017,#00f215,#00f413,#00f611,#00f70f,#00f90c,#00fa0a,#00fc08,#04fd06,#0dfe03,#18fe01,#22ff00,#2eff00,#39ff00,#45ff00,#51ff00,#5eff00,#6bff00,#79ff00,#87ff00,#95ff00,#a4ff00,#b4ff00)"></i>
<i style="left:2px;top:169px;width:376px;background:linear-gradient(90deg,#00e43f,#00e23d,#00e13b,#00e03a,#00df38,#00df37,#00de35,#00de34,#00dd32,#00dd31,#00dd2f,#00de2e,#00de2c,#00df2b,#00e029,#00e128,#00e227,#00e425,#00e524,#00e622,#00e820,#00ea1f,#00ec1d,#00ed1b,#00ef1a,#00f118,#00f316,#00f514,#00f612,#00f810,#00f90d,#00fb0b,#00fc09,#06fd06,#10fe04,#1afe01,#25ff00,#30ff00,#3cff00,#48ff00,#55ff00,#62ff00,#6fff00,#7dff00,#8bff00,#9aff00,#a9ff00,#b8ff00)"></i>
<i style="left:2px;top:171px;width:384px;background:linear-gradient(90deg,#00e440,#00e33e,#00e23d,#00e13b,#00e039,#00df38,#00df36,#00de35,#00de33,#00de32,#00de30,#00de2f,#00df2e,#00e02c,#00e12b,#00e229,#00e328,#00e426,#00e625,#00e723,#00e922,#00ea20,#00ec1e,#00ee1d,#00f01b,#00f119,#00f317,#00f515,#00f713,#00f811,#00fa0f,#00fb0c,#00fc0a,#07fd07,#11fe05,#1bff03,#26ff00,#32ff00,#3eff00,#4aff00,#57ff00,#64ff00,#71ff00,#7fff00,#8dff00,#9cff00,#abff00,#bbff00,#cbff00)"></i>
<i style="left:2px;top:173px;width:384px;background:linear-gradient(90deg,#00e541,#00e43f,#00e23e,#00e13c,#00e13b,#00e039,#00df38,#00df36,#00df35,#00df33,#00df32,#00df30,#00e02f,#00e02d,#00e12c,#00e22b,#00e329,#00e528,#00e626,#00e825,#00e923,#00eb21,#00ed20,#00ee1e,#00f01c,#00f21a,#00f418,#00f516,#00f714,#00f812,#00fa10,#00fb0d,#00fc0b,#08fd09,#12fe06,#1dff04,#28ff01,#33ff00,#3fff00,#4cff00,#58ff00,#66ff00,#73ff00,#81ff00,#90ff00,#9fff00,#aeff00,#beff00,#cfff00)"></i>
<i style="left:2px;top:175px;width:384px;background:linear-gradient(90deg,#00e542,#00e441,#00e33f,#00e23e,#00e13c,#00e03a,#00e039,#00e037,#00df36,#00df34,#00df33,#00e032,#00e030,#00e12f,#00e22d,#00e32c,#00e42a,#00e529,#00e727,#00e826,#00ea24,#00eb23,#00ed21,#00ef1f,#00f01d,#00f21b,#00f419,#00f617,#00f715,#00f913,#00fa11,#00fb0f,#00fc0c,#09fd0a,#13fe07,#1eff05,#29ff02,#35ff00,#41ff00,#4dff00,#5aff00,#68ff00,#75ff00,#84ff00,#92ff00,#a1ff00,#b1ff00,#c1ff00,#d2ff00)"></i>
<i style="left:2px;top:177px;width:392px;background:linear-gradient(90deg,#00e644,#00e542,#00e440,#00e33f,#00e23d,#00e13c,#00e13a,#00e039,#00e037,#00e036,#00e034,#00e033,#00e131,#00e230,#00e22f,#00e32d,#00e52c,#00e62a,#00e729,#00e927,#00ea25,#00ec24,#00ed22,#00ef20,#00f11f,#00f31d,#00f41b,#00f619,#00f717,#00f914,#00fa12,#00fc10,#00fd0d,#0afe0b,#14fe08,#1fff06,#2aff03,#36ff01,#42ff00,#4fff00,#5cff00,#6aff00,#78ff00,#86ff00,#95ff00,#a4ff00,#b4ff00,#c4ff00,#d5ff00,#e6ff00)"></i>
<i style="left:2px;top:179px;width:392px;background:linear-gradient(90deg,#00e745,#00e544,#00e442,#00e340,#00e23f,#00e23d,#00e13c,#00e13a,#00e139,#00e137,#00e136,#00e134,#00e233,#00e231,#00e330,#00e42e,#00e52d,#00e62b,#00e82a,#00e928,#00eb27,#00ec25,#00ee23,#00f022,#00f120,#00f31e,#00f51c,#00f61a,#00f818,#00f916,#00fb13,#00fc11,#01fd0f,#0bfe0c,#15fe0a,#20ff07,#2cff05,#38ff02,#44ff00,#51ff00,#5eff00,#6cff00,#7aff00,#88ff00,#97ff00,#a7ff00,#b7ff00,#c7ff00,#d8ff00,#eaff00)"></i>
<i style="left:2px;top:181px;width:392px;background:linear-gradient(90deg,#00e747,#00e645,#00e543,#00e442,#00e340,#00e23e,#00e23d,#00e13b,#00e13a,#00e138,#00e137,#00e235,#00e234,#00e333,#00e431,#00e530,#00e62e,#00e72d,#00e82b,#00ea2a,#00eb28,#00ed26,#00ee25,#00f023,#00f221,#00f31f,#00f51d,#00f71b,#00f819,#00f917,#00fb15,#00fc12,#02fd10,#0cfe0e,#16fe0b,#22ff08,#2dff06,#39ff03,#46ff00,#53ff00,#60ff00,#6eff00,#7cff00,#8bff00,#9aff00,#a9ff00,#baff00,#caff00,#dcff00,#edff00)"></i>
<i style="left:3px;top:183px;width:400px;background:linear-gradient(90deg,#00e848,#00e646,#00e544,#00e443,#00e441,#00e340,#00e23e,#00e23d,#00e23b,#00e23a,#00e238,#00e237,#00e335,#00e434,#00e432,#00e531,#00e62f,#00e82e,#00e92c,#00ea2b,#00ec29,#00ed28,#00ef26,#00f124,#00f222,#00f420,#00f51e,#00f71c,#00f81a,#00fa18,#00fb16,#00fc13,#04fd11,#0efe0e,#19ff0c,#24ff09,#30ff07,#3cff04,#49ff01,#56ff00,#64ff00,#72ff00,#80ff00,#8fff00,#9eff00,#aeff00,#bfff00,#d0ff00,#e1ff00,#f3ff00,#fff800)"></i>
<i style="left:3px;top:185px;width:400px;background:linear-gradient(90deg,#00e849,#00e747,#00e646,#00e544,#00e443,#00e441,#00e33f,#00e33e,#00e33c,#00e33b,#00e33a,#00e338,#00e437,#00e435,#00e534,#00e632,#00e731,#00e82f,#00ea2e,#00eb2c,#00ec2b,#00ee29,#00ef27,#00f126,#00f324,#00f422,#00f620,#00f71e,#00f91c,#00fa19,#00fb17,#00fc15,#05fd12,#0ffe10,#1aff0d,#26ff0b,#32ff08,#3eff05,#4bff02,#58ff00,#66ff00,#74ff00,#82ff00,#91ff00,#a1ff00,#b1ff00,#c2ff00,#d3ff00,#e5ff00,#f7ff00,#fff400)"></i>
<i style="left:3px;top:187px;width:400px;background:linear-gradient(90deg,#00e94b,#00e849,#00e647,#00e646,#00e544,#00e442,#00e441,#00e33f,#00e33e,#00e33c,#00e33b,#00e439,#00e438,#00e537,#00e635,#00e734,#00e832,#00e931,#00ea2f,#00eb2e,#00ed2c,#00ee2a,#00f029,#00f127,#00f325,#00f523,#00f621,#00f81f,#00f91d,#00fa1b,#00fb18,#00fd16,#06fd14,#10fe11,#1bff0f,#27ff0c,#33ff09,#40ff06,#4cff04,#5aff01,#68ff00,#76ff00,#85ff00,#94ff00,#a4ff00,#b4ff00,#c5ff00,#d6ff00,#e8ff00,#fbff00,#fff100)"></i>
<i style="left:3px;top:189px;width:408px;background:linear-gradient(90deg,#00e94c,#00e84a,#00e749,#00e647,#00e545,#00e544,#00e442,#00e441,#00e43f,#00e43e,#00e43c,#00e43b,#00e539,#00e538,#00e637,#00e735,#00e834,#00e932,#00eb31,#00ec2f,#00ed2d,#00ef2c,#00f02a,#00f228,#00f326,#00f525,#00f623,#00f821,#00f91e,#00fb1c,#00fc1a,#00fd17,#07fe15,#11fe12,#1dff10,#28ff0d,#35ff0a,#41ff08,#4eff05,#5cff02,#6aff00,#78ff00,#87ff00,#97ff00,#a7ff00,#b7ff00,#c8ff00,#daff00,#ecff00,#ffff00,#ffed00,#ffdd00)"></i>
<i style="left:3px;top:191px;width:408px;background:linear-gradient(90deg,#00ea4e,#00e94c,#00e84a,#00e749,#00e647,#00e545,#00e544,#00e542,#00e441,#00e43f,#00e53e,#00e53c,#00e53b,#00e639,#00e738,#00e837,#00e935,#00ea34,#00eb32,#00ec31,#00ee2f,#00ef2d,#00f12c,#00f22a,#00f428,#00f526,#00f724,#00f822,#00fa20,#00fb1e,#00fc1b,#00fd19,#08fe16,#13fe14,#1eff11,#2aff0f,#36ff0c,#43ff09,#50ff06,#5eff03,#6cff01,#7bff00,#8aff00,#99ff00,#a9ff00,#baff00,#cbff00,#ddff00,#f0ff00,#fffb00,#ffe900,#ffd900)"></i>
<i style="left:4px;top:193px;width:408px;background:linear-gradient(90deg,#00ea4f,#00e94d,#00e84b,#00e74a,#00e748,#00e647,#00e645,#00e544,#00e542,#00e541,#00e53f,#00e63e,#00e63c,#00e73b,#00e839,#00e838,#00e936,#00eb35,#00ec33,#00ed32,#00ef30,#00f02e,#00f12d,#00f32b,#00f429,#00f627,#00f725,#00f923,#00fa21,#00fb1f,#00fc1c,#00fd1a,#0afe18,#15fe15,#21ff12,#2dff10,#39ff0d,#46ff0a,#54ff07,#62ff04,#70ff01,#7fff00,#8eff00,#9eff00,#aeff00,#bfff00,#d1ff00,#e3ff00,#f6ff00,#fff500,#ffe400,#ffd400)"></i>
<i style="left:4px;top:195px;width:416px;background:linear-gradient(90deg,#00eb50,#00ea4f,#00e94d,#00e84b,#00e74a,#00e748,#00e647,#00e645,#00e644,#00e642,#00e641,#00e63f,#00e73e,#00e73c,#00e83b,#00e939,#00ea38,#00eb36,#00ec35,#00ee33,#00ef32,#00f030,#00f22e,#00f32c,#00f52b,#00f629,#00f827,#00f925,#00fa22,#00fb20,#00fc1e,#01fd1b,#0bfe19,#16ff16,#22ff14,#2eff11,#3bff0e,#48ff0b,#56ff08,#64ff06,#72ff03,#81ff00,#91ff00,#a1ff00,#b1ff00,#c3ff00,#d4ff00,#e7ff00,#faff00,#fff100,#ffe000,#ffd100,#ffc300)"></i>
<i style="left:4px;top:197px;width:416px;background:linear-gradient(90deg,#00eb52,#00ea50,#00e94f,#00e84d,#00e84b,#00e74a,#00e748,#00e647,#00e645,#00e644,#00e742,#00e741,#00e73f,#00e83e,#00e93c,#00ea3b,#00eb39,#00ec38,#00ed36,#00ee35,#00ef33,#00f132,#00f230,#00f42e,#00f52c,#00f72a,#00f828,#00f926,#00fa24,#00fc22,#00fd1f,#02fd1d,#0cfe1a,#18ff18,#23ff15,#30ff12,#3dff10,#4aff0d,#58ff0a,#66ff07,#74ff04,#84ff01,#93ff00,#a4ff00,#b4ff00,#c6ff00,#d8ff00,#eaff00,#feff00,#ffee00,#ffdd00,#ffce00,#ffc000)"></i>
<i style="left:4px;top:199px;width:416px;background:linear-gradient(90deg,#00ec53,#00eb52,#00ea50,#00e94e,#00e84d,#00e84b,#00e74a,#00e748,#00e747,#00e745,#00e744,#00e742,#00e841,#00e93f,#00e93e,#00ea3c,#00eb3b,#00ec39,#00ed38,#00ef36,#00f035,#00f133,#00f331,#00f430,#00f62e,#00f72c,#00f82a,#00fa28,#00fb25,#00fc23,#00fd21,#03fe1e,#0efe1c,#19ff19,#25ff17,#31ff14,#3eff11,#4cff0e,#59ff0b,#68ff08,#77ff05,#86ff02,#96ff00,#a6ff00,#b7ff00,#c9ff00,#dbff00,#eeff00,#fffc00,#ffea00,#ffd900,#ffcb00,#ffbd00)"></i>
<i style="left:4px;top:201px;width:424px;background:linear-gradient(90deg,#00ec55,#00eb53,#00ea52,#00ea50,#00e94e,#00e84d,#00e84b,#00e84a,#00e848,#00e847,#00e845,#00e844,#00e942,#00e941,#00ea3f,#00eb3e,#00ec3d,#00ed3b,#00ee39,#00ef38,#00f036,#00f235,#00f333,#00f531,#00f62f,#00f72d,#00f92b,#00fa29,#00fb27,#00fc25,#00fd22,#04fe20,#0ffe1d,#1aff1b,#26ff18,#33ff15,#40ff13,#4dff10,#5bff0d,#6aff0a,#79ff07,#89ff04,#99ff01,#a9ff00,#bbff00,#ccff00,#dfff00,#f2ff00,#fff800,#ffe600,#ffd600,#ffc800,#ffba00,#ffaf00)"></i>
<i style="left:5px;top:203px;width:424px;background:linear-gradient(90deg,#00ed56,#00ec55,#00eb53,#00ea51,#00e950,#00e94e,#00e94d,#00e84b,#00e84a,#00e848,#00e847,#00e945,#00e944,#00ea42,#00eb41,#00eb3f,#00ec3e,#00ed3c,#00ef3b,#00f039,#00f138,#00f236,#00f434,#00f532,#00f631,#00f82f,#00f92d,#00fa2b,#00fb28,#00fc26,#00fd24,#06fe21,#11fe1f,#1dff1c,#29ff19,#36ff17,#43ff14,#51ff11,#5fff0e,#6eff0b,#7dff08,#8dff05,#9eff01,#afff00,#c0ff00,#d2ff00,#e5ff00,#f9ff00,#fff200,#ffe100,#ffd100,#ffc300,#ffb600,#ffaa00)"></i>
<i style="left:5px;top:205px;width:424px;background:linear-gradient(90deg,#00ed58,#00ec56,#00eb55,#00eb53,#00ea51,#00ea50,#00e94e,#00e94d,#00e94b,#00e94a,#00e948,#00e947,#00ea45,#00ea44,#00eb43,#00ec41,#00ed40,#00ee3e,#00ef3d,#00f03b,#00f239,#00f338,#00f436,#00f534,#00f732,#00f830,#00f92e,#00fa2c,#00fc2a,#00fc28,#00fd25,#07fe23,#13ff20,#1eff1e,#2bff1b,#38ff18,#45ff15,#53ff12,#61ff0f,#70ff0c,#80ff09,#90ff06,#a0ff03,#b2ff00,#c3ff00,#d6ff00,#e9ff00,#fdff00,#ffee00,#ffdd00,#ffce00,#ffc000,#ffb300,#ffa800)"></i>
<i style="left:5px;top:207px;width:432px;background:linear-gradient(90deg,#00ee5a,#00ed58,#00ec56,#00eb55,#00eb53,#00ea52,#00ea50,#00ea4e,#00e94d,#00e94b,#00ea4a,#00ea49,#00ea47,#00eb46,#00ec44,#00ed43,#00ed41,#00ee40,#00f03e,#00f13d,#00f23b,#00f339,#00f538,#00f636,#00f734,#00f832,#00fa30,#00fb2e,#00fc2c,#00fd29,#00fd27,#08fe24,#14ff22,#20ff1f,#2cff1c,#39ff1a,#47ff17,#55ff14,#64ff11,#73ff0e,#82ff0b,#93ff07,#a3ff04,#b5ff01,#c7ff00,#d9ff00,#edff00,#fffd00,#ffea00,#ffd900,#ffca00,#ffbd00,#ffb000,#ffa500,#ff9b00)"></i>
<i style="left:6px;top:209px;width:432px;background:linear-gradient(90deg,#00ee5b,#00ed59,#00ed58,#00ec56,#00eb55,#00eb53,#00ea51,#00ea50,#00ea4e,#00ea4d,#00ea4b,#00eb4a,#00eb49,#00ec47,#00ec46,#00ed44,#00ee43,#00ef41,#00f040,#00f13e,#00f33c,#00f43b,#00f539,#00f637,#00f835,#00f933,#00fa31,#00fb2f,#00fc2d,#00fd2b,#00fe28,#0bfe26,#16ff23,#23ff21,#2fff1e,#3dff1b,#4bff18,#59ff15,#68ff12,#77ff0f,#87ff0c,#97ff09,#a8ff05,#baff02,#ccff00,#dfff00,#f3ff00,#fff700,#ffe400,#ffd400,#ffc500,#ffb800,#ffac00,#ffa100,#ff9700)"></i>
<i style="left:6px;top:211px;width:432px;background:linear-gradient(90deg,#00ef5d,#00ee5b,#00ed59,#00ec58,#00ec56,#00eb55,#00eb53,#00eb52,#00eb50,#00eb4f,#00eb4d,#00eb4c,#00ec4a,#00ec49,#00ed47,#00ee46,#00ef44,#00f043,#00f141,#00f240,#00f33e,#00f43c,#00f53b,#00f739,#00f837,#00f935,#00fa33,#00fb31,#00fc2f,#00fd2c,#01fe2a,#0cfe27,#18ff25,#24ff22,#31ff1f,#3eff1d,#4cff1a,#5bff17,#6aff14,#79ff10,#8aff0d,#9aff0a,#acff07,#bdff03,#d0ff00,#e3ff00,#f7ff00,#fff300,#ffe100,#ffd100,#ffc200,#ffb500,#ffa900,#ff9f00,#ff9500)"></i>
<i style="left:6px;top:213px;width:440px;background:linear-gradient(90deg,#00ef5f,#00ee5d,#00ee5b,#00ed5a,#00ec58,#00ec56,#00ec55,#00eb53,#00eb52,#00eb50,#00eb4f,#00ec4d,#00ec4c,#00ed4b,#00ed49,#00ee48,#00ef46,#00f045,#00f143,#00f242,#00f340,#00f53e,#00f63c,#00f73b,#00f839,#00f937,#00fb35,#00fc33,#00fc30,#00fd2e,#02fe2c,#0dfe29,#19ff27,#26ff24,#33ff21,#40ff1e,#4eff1b,#5dff18,#6cff15,#7cff12,#8cff0f,#9dff0c,#afff08,#c1ff05,#d4ff02,#e7ff00,#fbff00,#ffef00,#ffdd00,#ffcd00,#ffbf00,#ffb200,#ffa700,#ff9c00,#ff9200,#ff8a00)"></i>
<i style="left:6px;top:215px;width:440px;background:linear-gradient(90deg,#00f060,#00ef5f,#00ee5d,#00ed5b,#00ed5a,#00ec58,#00ec57,#00ec55,#00ec54,#00ec52,#00ec51,#00ec4f,#00ed4e,#00ed4c,#00ee4b,#00ef49,#00f048,#00f146,#00f245,#00f343,#00f442,#00f540,#00f63e,#00f73c,#00f93b,#00fa39,#00fb37,#00fc34,#00fd32,#00fd30,#03fe2d,#0eff2b,#1aff28,#27ff26,#34ff23,#42ff20,#50ff1d,#5fff1a,#6fff17,#7eff14,#8fff11,#a0ff0d,#b2ff0a,#c4ff07,#d7ff03,#ebff00,#fffe00,#ffeb00,#ffd900,#ffca00,#ffbc00,#ffaf00,#ffa400,#ff9a00,#ff9000,#ff8700)"></i>
<i style="left:7px;top:217px;width:440px;background:linear-gradient(90deg,#00f062,#00ef60,#00ef5f,#00ee5d,#00ed5b,#00ed5a,#00ed58,#00ec57,#00ec55,#00ec54,#00ed52,#00ed51,#00ed4f,#00ee4e,#00ef4c,#00ef4b,#00f04a,#00f148,#00f246,#00f345,#00f443,#00f642,#00f740,#00f83e,#00f93c,#00fa3a,#00fb38,#00fc36,#00fd34,#00fe31,#06fe2f,#11ff2c,#1dff2a,#2aff27,#38ff24,#46ff21,#54ff1e,#63ff1b,#73ff18,#83ff15,#94ff12,#a5ff0e,#b7ff0b,#caff08,#deff04,#f2ff01,#fff800,#ffe500,#ffd400,#ffc500,#ffb700,#ffab00,#ffa000,#ff9600,#ff8d00,#ff8400)"></i>
<i style="left:7px;top:219px;width:440px;background:linear-gradient(90deg,#00f164,#00f062,#00ef60,#00ef5f,#00ee5d,#00ee5c,#00ed5a,#00ed59,#00ed57,#00ed56,#00ed54,#00ee53,#00ee51,#00ef50,#00ef4e,#00f04d,#00f14b,#00f24a,#00f348,#00f447,#00f545,#00f643,#00f742,#00f840,#00f93e,#00fa3c,#00fb3a,#00fc38,#00fd36,#00fe33,#07fe31,#12ff2e,#1fff2c,#2cff29,#39ff26,#48ff23,#56ff20,#66ff1d,#75ff1a,#86ff17,#97ff14,#a8ff10,#bbff0d,#ceff09,#e1ff06,#f6ff02,#fff400,#ffe100,#ffd000,#ffc200,#ffb400,#ffa800,#ff9d00,#ff9300,#ff8a00,#ff8200)"></i>
<i style="left:7px;top:221px;width:448px;background:linear-gradient(90deg,#00f165,#00f064,#00f062,#00ef61,#00ef5f,#00ee5d,#00ee5c,#00ee5a,#00ee59,#00ee57,#00ee56,#00ee54,#00ef53,#00ef52,#00f050,#00f04f,#00f14d,#00f24c,#00f34a,#00f449,#00f547,#00f645,#00f744,#00f942,#00fa40,#00fb3e,#00fc3c,#00fd3a,#00fd37,#00fe35,#08fe33,#14ff30,#20ff2d,#2dff2b,#3bff28,#4aff25,#58ff22,#68ff1f,#78ff1c,#88ff19,#9aff15,#acff12,#beff0e,#d1ff0b,#e5ff07,#faff04,#ffef00,#ffdd00,#ffcd00,#ffbe00,#ffb100,#ffa600,#ff9b00,#ff9100,#ff8800,#ff8000,#ff7800)"></i>
<i style="left:8px;top:223px;width:448px;background:linear-gradient(90deg,#00f267,#00f165,#00f064,#00f062,#00ef61,#00ef5f,#00ee5e,#00ee5c,#00ee5b,#00ee59,#00ee58,#00ef56,#00ef55,#00f053,#00f052,#00f150,#00f24f,#00f34d,#00f44c,#00f54a,#00f649,#00f747,#00f845,#00f943,#00fa41,#00fb3f,#00fc3d,#00fd3b,#00fe39,#00fe37,#0aff34,#17ff32,#23ff2f,#31ff2c,#3fff29,#4dff26,#5cff23,#6cff20,#7cff1d,#8dff1a,#9fff17,#b1ff13,#c4ff10,#d8ff0c,#ecff09,#fffd05,#ffe901,#ffd700,#ffc800,#ffba00,#ffad00,#ffa100,#ff9700,#ff8d00,#ff8500,#ff7d00,#ff7500)"></i>
<i style="left:8px;top:225px;width:448px;background:linear-gradient(90deg,#00f269,#00f167,#00f166,#00f064,#00f062,#00ef61,#00ef5f,#00ef5e,#00ef5c,#00ef5b,#00ef5a,#00ef58,#00f057,#00f055,#00f154,#00f252,#00f251,#00f34f,#00f44e,#00f54c,#00f64b,#00f749,#00f847,#00f945,#00fa43,#00fb41,#00fc3f,#00fd3d,#00fe3b,#00fe39,#0cff36,#18ff33,#25ff31,#32ff2e,#41ff2b,#4fff28,#5fff25,#6fff22,#7fff1f,#90ff1c,#a2ff19,#b4ff15,#c8ff12,#dbff0e,#f0ff0a,#fff907,#ffe503,#ffd400,#ffc400,#ffb700,#ffaa00,#ff9f00,#ff9400,#ff8b00,#ff8200,#ff7b00,#ff7300)"></i>
<i style="left:8px;top:227px;width:456px;background:linear-gradient(90deg,#00f36b,#00f269,#00f168,#00f166,#00f064,#00f063,#00ef61,#00ef60,#00ef5e,#00ef5d,#00f05b,#00f05a,#00f059,#00f157,#00f156,#00f254,#00f353,#00f451,#00f550,#00f64e,#00f74d,#00f84b,#00f949,#00fa47,#00fb45,#00fc43,#00fc41,#00fd3f,#00fe3d,#01fe3a,#0dff38,#19ff35,#26ff33,#34ff30,#43ff2d,#51ff2a,#61ff27,#71ff24,#82ff21,#93ff1e,#a5ff1a,#b8ff17,#cbff13,#dfff10,#f4ff0c,#fff408,#ffe104,#ffd001,#ffc100,#ffb300,#ffa700,#ff9c00,#ff9200,#ff8900,#ff8000,#ff7800,#ff7100,#ff6b00)"></i>
<i style="left:9px;top:229px;width:456px;background:linear-gradient(90deg,#00f36c,#00f26b,#00f269,#00f168,#00f166,#00f065,#00f063,#00f062,#00f060,#00f05f,#00f05d,#00f05c,#00f15a,#00f159,#00f258,#00f356,#00f355,#00f453,#00f552,#00f650,#00f74e,#00f84d,#00f94b,#00fa49,#00fb47,#00fc45,#00fd43,#00fd41,#00fe3f,#04ff3c,#10ff3a,#1cff37,#2aff34,#38ff32,#46ff2f,#55ff2c,#65ff29,#76ff26,#87ff23,#98ff1f,#abff1c,#beff18,#d1ff15,#e6ff11,#fbff0e,#ffee09,#ffdb05,#ffcb02,#ffbc00,#ffaf00,#ffa300,#ff9800,#ff8e00,#ff8500,#ff7d00,#ff7500,#ff6e00,#ff6800)"></i>
<i style="left:9px;top:231px;width:456px;background:linear-gradient(90deg,#00f36e,#00f36d,#00f26b,#00f26a,#00f168,#00f167,#00f065,#00f064,#00f062,#00f061,#00f15f,#00f15e,#00f15c,#00f25b,#00f25a,#00f358,#00f457,#00f555,#00f654,#00f752,#00f850,#00f84f,#00f94d,#00fa4b,#00fb49,#00fc47,#00fd45,#00fe43,#00fe41,#05ff3e,#11ff3c,#1eff39,#2bff36,#3aff34,#48ff31,#58ff2e,#68ff2b,#78ff28,#89ff24,#9bff21,#aeff1e,#c1ff1a,#d5ff17,#eaff13,#fffe0f,#ffea0b,#ffd706,#ffc703,#ffb900,#ffac00,#ffa000,#ff9600,#ff8c00,#ff8300,#ff7b00,#ff7300,#ff6c00,#ff6600)"></i>
<i style="left:9px;top:233px;width:464px;background:linear-gradient(90deg,#00f470,#00f36f,#00f36d,#00f26c,#00f26a,#00f169,#00f167,#00f166,#00f164,#00f163,#00f161,#00f160,#00f25e,#00f25d,#00f35c,#00f45a,#00f459,#00f557,#00f656,#00f754,#00f852,#00f951,#00fa4f,#00fb4d,#00fc4b,#00fc49,#00fd47,#00fe45,#00fe43,#06ff40,#12ff3e,#1fff3b,#2dff38,#3bff36,#4aff33,#5aff30,#6aff2d,#7bff2a,#8cff27,#9eff23,#b1ff20,#c5ff1c,#d9ff19,#eeff15,#fffa11,#ffe50c,#ffd408,#ffc404,#ffb601,#ffa900,#ff9d00,#ff9300,#ff8900,#ff8100,#ff7900,#ff7100,#ff6a00,#ff6400,#ff5e00)"></i>
<i style="left:10px;top:235px;width:464px;background:linear-gradient(90deg,#00f472,#00f471,#00f36f,#00f36d,#00f26c,#00f26a,#00f269,#00f167,#00f166,#00f265,#00f263,#00f262,#00f260,#00f35f,#00f45d,#00f45c,#00f55b,#00f659,#00f757,#00f756,#00f854,#00f953,#00fa51,#00fb4f,#00fc4d,#00fd4b,#00fd49,#00fe47,#00fe44,#09ff42,#15ff40,#23ff3d,#30ff3a,#3fff37,#4eff35,#5eff32,#6fff2f,#80ff2b,#92ff28,#a4ff25,#b7ff21,#cbff1e,#e0ff1a,#f6ff17,#fff312,#ffdf0d,#ffce09,#ffbf05,#ffb102,#ffa500,#ff9900,#ff8f00,#ff8600,#ff7d00,#ff7600,#ff6e00,#ff6800,#ff6200,#ff5c00)"></i>
<i style="left:10px;top:237px;width:464px;background:linear-gradient(90deg,#00f574,#00f473,#00f471,#00f36f,#00f36e,#00f26c,#00f26b,#00f26a,#00f268,#00f267,#00f265,#00f364,#00f362,#00f361,#00f460,#00f55e,#00f55d,#00f65b,#00f75a,#00f858,#00f956,#00fa55,#00fa53,#00fb51,#00fc4f,#00fd4d,#00fe4b,#00fe49,#00ff47,#0aff44,#17ff42,#24ff3f,#32ff3c,#41ff3a,#50ff37,#60ff34,#71ff31,#83ff2e,#95ff2a,#a7ff27,#bbff24,#cfff20,#e4ff1c,#faff19,#ffee14,#ffdb0f,#ffca0a,#ffbb06,#ffae03,#ffa200,#ff9700,#ff8d00,#ff8400,#ff7b00,#ff7400,#ff6c00,#ff6600,#ff6000,#ff5a00)"></i>
<i style="left:10px;top:239px;width:472px;background:linear-gradient(90deg,#00f576,#00f575,#00f473,#00f472,#00f370,#00f36f,#00f36d,#00f26c,#00f26a,#00f369,#00f367,#00f366,#00f365,#00f463,#00f462,#00f560,#00f65f,#00f75d,#00f75c,#00f85a,#00f959,#00fa57,#00fb55,#00fc53,#00fc51,#00fd4f,#00fe4d,#00fe4b,#00ff49,#0bff46,#18ff44,#26ff41,#34ff3e,#43ff3c,#53ff39,#63ff36,#74ff33,#85ff30,#98ff2c,#abff29,#beff26,#d3ff22,#e8ff1f,#ffff1b,#ffea15,#ffd710,#ffc70c,#ffb808,#ffab04,#ff9f01,#ff9400,#ff8a00,#ff8100,#ff7900,#ff7100,#ff6a00,#ff6400,#ff5e00,#ff5800,#fe5300)"></i>
<i style="left:11px;top:241px;width:472px;background:linear-gradient(90deg,#00f678,#00f577,#00f475,#00f473,#00f472,#00f370,#00f36f,#00f36e,#00f36c,#00f36b,#00f369,#00f468,#00f467,#00f465,#00f564,#00f662,#00f661,#00f75f,#00f85e,#00f95c,#00f95b,#00fa59,#00fb57,#00fc55,#00fd53,#00fd51,#00fe4f,#00fe4d,#02ff4b,#0eff48,#1bff46,#29ff43,#38ff40,#47ff3e,#57ff3b,#67ff38,#79ff35,#8bff32,#9dff2e,#b1ff2b,#c5ff28,#daff24,#efff20,#fff81c,#ffe316,#ffd111,#ffc10d,#ffb309,#ffa605,#ff9b02,#ff9000,#ff8700,#ff7e00,#ff7600,#ff6e00,#ff6800,#ff6100,#ff5b00,#fe5600,#fe5000)"></i>
<i style="left:11px;top:243px;width:472px;background:linear-gradient(90deg,#00f67a,#00f579,#00f577,#00f476,#00f474,#00f473,#00f471,#00f370,#00f36e,#00f46d,#00f46c,#00f46a,#00f469,#00f567,#00f566,#00f664,#00f763,#00f762,#00f860,#00f95e,#00fa5d,#00fb5b,#00fb59,#00fc58,#00fd56,#00fd54,#00fe52,#00fe4f,#03ff4d,#0fff4b,#1dff48,#2bff45,#3aff43,#49ff40,#59ff3d,#6aff3a,#7bff37,#8eff34,#a0ff31,#b4ff2d,#c9ff2a,#deff26,#f4ff23,#fff31d,#ffdf18,#ffce12,#ffbe0e,#ffb00a,#ffa306,#ff9803,#ff8e01,#ff8400,#ff7c00,#ff7400,#ff6c00,#ff6600,#ff5f00,#ff5a00,#fe5400,#fd4f00)"></i>
<i style="left:12px;top:245px;width:472px;background:linear-gradient(90deg,#00f67c,#00f67b,#00f579,#00f578,#00f476,#00f475,#00f473,#00f472,#00f470,#00f46f,#00f46e,#00f56c,#00f56b,#00f569,#00f668,#00f767,#00f765,#00f864,#00f962,#00f961,#00fa5f,#00fb5d,#00fc5b,#00fc5a,#00fd58,#00fe56,#00fe54,#00ff51,#06ff4f,#12ff4d,#20ff4a,#2eff47,#3dff45,#4dff42,#5eff3f,#6fff3c,#80ff39,#93ff36,#a6ff32,#baff2f,#cfff2c,#e5ff28,#fbff24,#ffec1e,#ffd918,#ffc813,#ffb90f,#ffab0b,#ff9f07,#ff9404,#ff8a01,#ff8100,#ff7800,#ff7100,#ff6a00,#ff6300,#ff5d00,#fe5700,#fe5200,#fd4c00)"></i>
<i style="left:12px;top:247px;width:480px;background:linear-gradient(90deg,#00f77e,#00f67d,#00f67b,#00f57a,#00f578,#00f577,#00f575,#00f474,#00f473,#00f571,#00f570,#00f56e,#00f56d,#00f66c,#00f66a,#00f769,#00f867,#00f866,#00f964,#00fa63,#00fb61,#00fb60,#00fc5e,#00fd5c,#00fd5a,#00fe58,#00fe56,#00ff54,#07ff51,#14ff4f,#22ff4c,#30ff4a,#3fff47,#4fff44,#60ff41,#71ff3e,#83ff3b,#96ff38,#aaff35,#beff32,#d3ff2e,#e9ff2a,#fffe27,#ffe820,#ffd51a,#ffc415,#ffb510,#ffa80c,#ff9c08,#ff9105,#ff8702,#ff7e00,#ff7600,#ff6f00,#ff6800,#ff6100,#ff5b00,#fe5500,#fd5000,#fc4b00,#fb4600)"></i>
<i style="left:12px;top:249px;width:480px;background:linear-gradient(90deg,#00f780,#00f77f,#00f67d,#00f67c,#00f57b,#00f579,#00f578,#00f576,#00f575,#00f574,#00f572,#00f671,#00f66f,#00f66e,#00f76d,#00f76b,#00f86a,#00f968,#00f967,#00fa65,#00fb64,#00fc62,#00fc60,#00fd5e,#00fd5c,#00fe5a,#00fe58,#00ff56,#08ff54,#15ff51,#23ff4f,#32ff4c,#41ff49,#52ff47,#62ff44,#74ff41,#86ff3e,#99ff3b,#adff37,#c2ff34,#d7ff30,#eeff2d,#fff928,#ffe421,#ffd11b,#ffc116,#ffb212,#ffa50d,#ff990a,#ff8f06,#ff8504,#ff7c01,#ff7400,#ff6c00,#ff6600,#ff5f00,#ff5900,#fe5400,#fd4e00,#fc4900,#fb4400)"></i>
<i style="left:13px;top:251px;width:480px;background:linear-gradient(90deg,#00f883,#00f781,#00f780,#00f67e,#00f67d,#00f67b,#00f57a,#00f578,#00f577,#00f676,#00f674,#00f673,#00f672,#00f770,#00f76f,#00f86d,#00f86c,#00f96b,#00fa69,#00fb67,#00fb66,#00fc64,#00fd62,#00fd61,#00fe5f,#00fe5d,#00ff5a,#00ff58,#0bff56,#18ff53,#27ff51,#36ff4e,#46ff4c,#56ff49,#67ff46,#79ff43,#8cff40,#9fff3d,#b3ff39,#c8ff36,#deff33,#f5ff2f,#fff229,#ffdd22,#ffcb1c,#ffbb17,#ffad12,#ffa00e,#ff950a,#ff8b07,#ff8104,#ff7902,#ff7100,#ff6a00,#ff6300,#ff5d00,#fe5700,#fe5100,#fd4c00,#fc4700,#fa4200)"></i>
<i style="left:13px;top:253px;width:488px;background:linear-gradient(90deg,#00f885,#00f783,#00f782,#00f780,#00f67f,#00f67e,#00f67c,#00f67b,#00f679,#00f678,#00f677,#00f675,#00f774,#00f773,#00f871,#00f870,#00f96e,#00f96d,#00fa6b,#00fb6a,#00fb68,#00fc67,#00fd65,#00fd63,#00fe61,#00fe5f,#00ff5d,#00ff5b,#0cff58,#1aff56,#28ff53,#38ff51,#48ff4e,#58ff4b,#6aff48,#7cff45,#8fff42,#a3ff3f,#b7ff3c,#ccff39,#e3ff35,#faff31,#ffed2b,#ffd924,#ffc71e,#ffb818,#ffaa14,#ff9d0f,#ff920c,#ff8808,#ff7f05,#ff7603,#ff6f00,#ff6700,#ff6100,#ff5b00,#fe5500,#fd4f00,#fc4a00,#fb4500,#fa4100,#f83c00)"></i>
<i style="left:14px;top:255px;width:488px;background:linear-gradient(90deg,#00f887,#00f885,#00f784,#00f783,#00f781,#00f680,#00f67e,#00f67d,#00f67c,#00f67a,#00f779,#00f778,#00f776,#00f875,#00f873,#00f972,#00f971,#00fa6f,#00fb6e,#00fb6c,#00fc6b,#00fc69,#00fd67,#00fe65,#00fe63,#00fe61,#00ff5f,#02ff5d,#0fff5b,#1dff58,#2cff56,#3cff53,#4cff50,#5dff4d,#6fff4b,#81ff48,#94ff45,#a9ff41,#beff3e,#d3ff3b,#eaff37,#fffc33,#ffe62b,#ffd324,#ffc21e,#ffb319,#ffa514,#ff9910,#ff8e0c,#ff8409,#ff7b06,#ff7303,#ff6c01,#ff6500,#ff5e00,#ff5800,#fe5200,#fd4d00,#fc4800,#fa4300,#f93f00,#f73a00)"></i>
<i style="left:14px;top:257px;width:488px;background:linear-gradient(90deg,#00f989,#00f888,#00f886,#00f785,#00f783,#00f782,#00f781,#00f77f,#00f77e,#00f77d,#00f77b,#00f77a,#00f879,#00f877,#00f976,#00f975,#00fa73,#00fa72,#00fb70,#00fb6f,#00fc6d,#00fd6b,#00fd6a,#00fe68,#00fe66,#00ff64,#00ff62,#03ff60,#11ff5d,#1fff5b,#2eff58,#3eff56,#4eff53,#5fff50,#71ff4d,#84ff4a,#98ff47,#acff44,#c1ff41,#d8ff3d,#efff3a,#fff735,#ffe22d,#ffcf26,#ffbe20,#ffaf1a,#ffa216,#ff9611,#ff8c0e,#ff820a,#ff7907,#ff7104,#ff6902,#ff6300,#ff5c00,#fe5600,#fe5100,#fd4b00,#fb4600,#fa4100,#f83d00,#f63900)"></i>
<i style="left:14px;top:259px;width:488px;background:linear-gradient(90deg,#00f98c,#00f98a,#00f889,#00f887,#00f886,#00f785,#00f783,#00f782,#00f780,#00f77f,#00f77e,#00f87d,#00f87b,#00f87a,#00f979,#00f977,#00fa76,#00fb74,#00fb73,#00fc71,#00fc70,#00fd6e,#00fd6c,#00fe6a,#00fe69,#00ff67,#00ff64,#05ff62,#12ff60,#21ff5d,#30ff5b,#40ff58,#51ff56,#62ff53,#74ff50,#87ff4d,#9bff4a,#b0ff47,#c5ff44,#dcff40,#f4ff3d,#fff236,#ffdd2e,#ffcb27,#ffba21,#ffac1c,#ff9f17,#ff9313,#ff890f,#ff7f0b,#ff7708,#ff6f05,#ff6703,#ff6101,#ff5a00,#fe5400,#fd4f00,#fc4a00,#fb4500,#f94000,#f83b00,#f63700)"></i>
<i style="left:15px;top:261px;width:496px;background:linear-gradient(90deg,#00f98e,#00f98c,#00f98b,#00f88a,#00f888,#00f887,#00f885,#00f884,#00f883,#00f881,#00f880,#00f87f,#00f97e,#00f97c,#00f97b,#00fa7a,#00fa78,#00fb77,#00fc75,#00fc74,#00fd72,#00fd70,#00fe6f,#00fe6d,#00fe6b,#00ff69,#00ff67,#08ff65,#15ff62,#24ff60,#34ff5d,#44ff5b,#55ff58,#67ff55,#7aff52,#8dff4f,#a1ff4c,#b6ff49,#ccff46,#e3ff43,#fcff3f,#ffeb37,#ffd72f,#ffc528,#ffb522,#ffa71c,#ff9a18,#ff8f13,#ff8510,#ff7c0c,#ff7309,#ff6c06,#ff6404,#ff5e01,#ff5800,#fe5200,#fd4c00,#fc4700,#fa4200,#f93e00,#f73900,#f53500,#f33200)"></i>
<i style="left:15px;top:263px;width:496px;background:linear-gradient(90deg,#00fa90,#00f98f,#00f98d,#00f98c,#00f88b,#00f889,#00f888,#00f887,#00f885,#00f884,#00f883,#00f981,#00f980,#00f97f,#00fa7e,#00fa7c,#00fb7b,#00fb79,#00fc78,#00fc76,#00fd75,#00fd73,#00fe71,#00fe70,#00ff6e,#00ff6c,#00ff69,#09ff67,#17ff65,#26ff63,#36ff60,#46ff5d,#58ff5b,#6aff58,#7dff55,#90ff52,#a5ff4f,#baff4c,#d1ff49,#e8ff46,#fffd42,#ffe638,#ffd230,#ffc129,#ffb223,#ffa41e,#ff9719,#ff8c15,#ff8211,#ff790d,#ff710a,#ff6907,#ff6204,#ff5c02,#ff5600,#fe5000,#fd4b00,#fb4600,#fa4100,#f83c00,#f63800,#f43400,#f23000)"></i>
<i style="left:16px;top:265px;width:496px;background:linear-gradient(90deg,#00fa92,#00fa91,#00f990,#00f98e,#00f98d,#00f98c,#00f88a,#00f889,#00f888,#00f986,#00f985,#00f984,#00f983,#00fa81,#00fa80,#00fb7f,#00fb7d,#00fc7c,#00fc7a,#00fd79,#00fd77,#00fe76,#00fe74,#00fe72,#00ff70,#00ff6e,#00ff6c,#0cff6a,#1aff67,#2aff65,#3aff63,#4bff60,#5cff5d,#6fff5b,#82ff58,#96ff55,#abff52,#c1ff4f,#d8ff4b,#f0ff48,#fff542,#ffdf39,#ffcc31,#ffbb2a,#ffac24,#ff9f1e,#ff931a,#ff8815,#ff7f11,#ff760e,#ff6e0b,#ff6608,#ff6005,#ff5903,#fe5301,#fd4e00,#fc4800,#fb4300,#f93f00,#f73a00,#f53600,#f33200,#f12e00)"></i>
<i style="left:16px;top:267px;width:504px;background:linear-gradient(90deg,#00fa95,#00fa94,#00fa92,#00f991,#00f990,#00f98e,#00f98d,#00f98c,#00f98a,#00f989,#00f988,#00f987,#00fa85,#00fa84,#00fa83,#00fb81,#00fb80,#00fc7f,#00fc7d,#00fd7c,#00fd7a,#00fe78,#00fe77,#00ff75,#00ff73,#00ff71,#00ff6f,#0dff6d,#1cff6a,#2cff68,#3cff65,#4dff63,#5fff60,#72ff5e,#85ff5b,#9aff58,#afff55,#c5ff52,#ddff4e,#f5ff4b,#fff144,#ffdb3a,#ffc832,#ffb82b,#ffa925,#ff9c20,#ff901b,#ff8616,#ff7c13,#ff730f,#ff6c0c,#ff6409,#ff5e06,#ff5704,#fe5101,#fd4c00,#fc4700,#fa4200,#f93d00,#f73900,#f53400,#f23100,#f02d00,#ee2a00)"></i>
<i style="left:17px;top:269px;width:504px;background:linear-gradient(90deg,#00fb97,#00fa96,#00fa95,#00fa93,#00f992,#00f991,#00f98f,#00f98e,#00f98d,#00f98c,#00fa8a,#00fa89,#00fa88,#00fa87,#00fb85,#00fb84,#00fc83,#00fc81,#00fd80,#00fd7e,#00fe7d,#00fe7b,#00fe79,#00ff78,#00ff76,#00ff74,#03ff71,#11ff6f,#20ff6d,#2fff6b,#40ff68,#52ff66,#64ff63,#77ff60,#8bff5d,#a0ff5b,#b6ff58,#ccff54,#e4ff51,#fdff4e,#ffe944,#ffd43b,#ffc233,#ffb22c,#ffa426,#ff9720,#ff8c1c,#ff8217,#ff7913,#ff7010,#ff680c,#ff6109,#ff5b07,#ff5504,#fe4f02,#fd4900,#fb4400,#fa3f00,#f83b00,#f63700,#f43300,#f12f00,#ef2b00,#ed2800)"></i>
<i style="left:17px;top:271px;width:504px;background:linear-gradient(90deg,#00fb9a,#00fb98,#00fa97,#00fa96,#00fa95,#00fa93,#00fa92,#00fa91,#00fa90,#00fa8e,#00fa8d,#00fa8c,#00fa8b,#00fb89,#00fb88,#00fc87,#00fc85,#00fc84,#00fd83,#00fd81,#00fe80,#00fe7e,#00fe7c,#00ff7a,#00ff79,#00ff77,#04ff74,#12ff72,#21ff70,#31ff6e,#42ff6b,#54ff69,#67ff66,#7aff63,#8eff61,#a4ff5e,#baff5b,#d1ff58,#e9ff54,#fffc50,#ffe445,#ffd03c,#ffbe34,#ffaf2d,#ffa127,#ff9422,#ff891d,#ff7f18,#ff7614,#ff6e11,#ff660d,#ff5f0a,#ff5908,#fe5305,#fe4d03,#fc4801,#fb4300,#f93e00,#f73900,#f53500,#f33100,#f12d00,#ee2a00,#ec2700)"></i>
<i style="left:18px;top:273px;width:504px;background:linear-gradient(90deg,#00fb9c,#00fb9b,#00fb9a,#00fa98,#00fa97,#00fa96,#00fa95,#00fa93,#00fa92,#00fa91,#00fa90,#00fb8f,#00fb8d,#00fb8c,#00fc8b,#00fc8a,#00fc88,#00fd87,#00fd85,#00fe84,#00fe82,#00fe81,#00ff7f,#00ff7d,#00ff7b,#00ff79,#07ff77,#16ff75,#25ff73,#36ff70,#47ff6e,#59ff6b,#6cff69,#80ff66,#94ff63,#aaff61,#c1ff5e,#d8ff5b,#f1ff57,#fff350,#ffdd46,#ffc93d,#ffb835,#ffa92e,#ff9c28,#ff9022,#ff851d,#ff7b19,#ff7315,#ff6b11,#ff630e,#ff5c0b,#ff5608,#fe5006,#fd4b03,#fc4501,#fa4000,#f93c00,#f73700,#f43300,#f22f00,#f02c00,#ed2800,#ea2500)"></i>
<i style="left:18px;top:275px;width:512px;background:linear-gradient(90deg,#00fc9f,#00fb9e,#00fb9c,#00fb9b,#00fa9a,#00fa99,#00fa97,#00fa96,#00fa95,#00fa94,#00fb93,#00fb91,#00fb90,#00fb8f,#00fc8e,#00fc8c,#00fd8b,#00fd8a,#00fd88,#00fe87,#00fe85,#00fe84,#00ff82,#00ff80,#00ff7e,#00ff7c,#09ff7a,#17ff78,#27ff76,#38ff74,#49ff71,#5cff6f,#6fff6c,#83ff69,#98ff67,#aeff64,#c5ff61,#ddff5e,#f6ff5b,#ffee52,#ffd847,#ffc53e,#ffb536,#ffa62f,#ff9929,#ff8d24,#ff821f,#ff791a,#ff7016,#ff6812,#ff610f,#ff5a0c,#ff5409,#fe4e07,#fd4904,#fc4402,#fa3f00,#f83a00,#f63600,#f43200,#f12e00,#ef2a00,#ec2700,#e92400,#e72100)"></i>
<i style="left:19px;top:277px;width:512px;background:linear-gradient(90deg,#00fca1,#00fba0,#00fb9f,#00fb9e,#00fb9c,#00fb9b,#00fb9a,#00fb99,#00fb98,#00fb96,#00fb95,#00fb94,#00fb93,#00fc92,#00fc91,#00fc8f,#00fd8e,#00fd8d,#00fe8b,#00fe8a,#00fe88,#00ff87,#00ff85,#00ff83,#00ff81,#00ff7f,#0cff7d,#1bff7b,#2bff79,#3cff76,#4eff74,#61ff72,#74ff6f,#89ff6d,#9eff6a,#b5ff67,#ccff64,#e5ff61,#ffff5e,#ffe752,#ffd247,#ffbf3f,#ffaf37,#ffa130,#ff942a,#ff8924,#ff7f1f,#ff751b,#ff6d17,#ff6513,#ff5e10,#ff580d,#ff520a,#fe4c07,#fd4605,#fb4103,#f93c01,#f73800,#f53400,#f33000,#f02c00,#ee2900,#eb2500,#e82200,#e51f00)"></i>
<i style="left:19px;top:279px;width:512px;background:linear-gradient(90deg,#00fca4,#00fca3,#00fba2,#00fba0,#00fb9f,#00fb9e,#00fb9d,#00fb9c,#00fb9b,#00fb99,#00fb98,#00fb97,#00fc96,#00fc95,#00fc94,#00fd92,#00fd91,#00fd90,#00fe8e,#00fe8d,#00fe8b,#00ff8a,#00ff88,#00ff86,#00ff84,#00ff82,#0dff80,#1dff7e,#2dff7c,#3eff7a,#50ff77,#63ff75,#77ff73,#8cff70,#a2ff6d,#b9ff6a,#d1ff68,#eaff65,#fffa5f,#ffe253,#ffcd49,#ffbb40,#ffab38,#ff9e31,#ff912b,#ff8625,#ff7c20,#ff731c,#ff6b18,#ff6314,#ff5c11,#ff560e,#fe500b,#fe4a08,#fc4506,#fb4004,#f93b02,#f73600,#f53200,#f22e00,#f02b00,#ed2700,#ea2400,#e72100,#e41e00)"></i>
<i style="left:20px;top:281px;width:512px;background:linear-gradient(90deg,#00fca7,#00fca5,#00fca4,#00fca3,#00fba2,#00fba1,#00fba0,#00fb9e,#00fb9d,#00fb9c,#00fc9b,#00fc9a,#00fc99,#00fc98,#00fd96,#00fd95,#00fd94,#00fe93,#00fe91,#00fe90,#00ff8e,#00ff8d,#00ff8b,#00ff89,#00ff87,#02ff85,#11ff83,#20ff81,#31ff7f,#43ff7d,#55ff7b,#69ff78,#7dff76,#93ff73,#a9ff70,#c0ff6e,#d9ff6b,#f3ff68,#fff15f,#ffda53,#ffc749,#ffb540,#ffa638,#ff9932,#ff8d2b,#ff8226,#ff7821,#ff6f1c,#ff6718,#ff6015,#ff5911,#ff530e,#fe4d0b,#fd4709,#fc4206,#fa3d04,#f83902,#f63400,#f43000,#f12c00,#ef2900,#ec2600,#e92200,#e61f00,#e31d00)"></i>
<i style="left:21px;top:283px;width:520px;background:linear-gradient(90deg,#00fca9,#00fca8,#00fca7,#00fca6,#00fca5,#00fca4,#00fca2,#00fca1,#00fca0,#00fc9f,#00fc9e,#00fc9d,#00fc9c,#00fd9b,#00fd99,#00fd98,#00fe97,#00fe96,#00fe94,#00fe93,#00ff91,#00ff90,#00ff8e,#00ff8c,#00ff8a,#05ff88,#14ff86,#24ff84,#36ff82,#48ff80,#5aff7e,#6eff7b,#83ff79,#99ff76,#b0ff74,#c8ff71,#e1ff6e,#fbff6b,#ffe95f,#ffd353,#ffc049,#ffb041,#ffa139,#ff9432,#ff882c,#ff7e26,#ff7421,#ff6c1d,#ff6419,#ff5d15,#ff5612,#ff500f,#fe4a0c,#fd4509,#fb4007,#fa3b05,#f83703,#f53201,#f32e00,#f02b00,#ed2700,#eb2400,#e82100,#e51e00,#e21b00,#df1900)"></i>
<i style="left:21px;top:285px;width:520px;background:linear-gradient(90deg,#00fdac,#00fcab,#00fcaa,#00fca9,#00fca8,#00fca6,#00fca5,#00fca4,#00fca3,#00fca2,#00fca1,#00fca0,#00fd9f,#00fd9e,#00fd9d,#00fd9b,#00fe9a,#00fe99,#00fe97,#00ff96,#00ff95,#00ff93,#00ff91,#00ff90,#00ff8e,#07ff8c,#16ff8a,#26ff88,#38ff86,#4aff84,#5dff81,#71ff7f,#87ff7d,#9dff7a,#b4ff78,#ccff75,#e6ff72,#fffd6e,#ffe461,#ffcf55,#ffbc4b,#ffac42,#ff9e3a,#ff9133,#ff852d,#ff7b28,#ff7223,#ff691e,#ff621a,#ff5b16,#ff5413,#ff4e10,#fe490d,#fd430a,#fb3e08,#f93905,#f73503,#f53102,#f22d00,#f02900,#ed2600,#ea2300,#e72000,#e41d00,#e11a00,#de1800)"></i>
<i style="left:22px;top:287px;width:520px;background:linear-gradient(90deg,#00fdaf,#00fdae,#00fdad,#00fcab,#00fcaa,#00fca9,#00fca8,#00fca7,#00fca6,#00fca5,#00fca4,#00fda3,#00fda2,#00fda1,#00fda0,#00fe9e,#00fe9d,#00fe9c,#00fe9b,#00ff99,#00ff98,#00ff96,#00ff95,#00ff93,#00ff91,#0aff8f,#1aff8d,#2aff8b,#3cff89,#4fff87,#63ff85,#77ff83,#8dff80,#a4ff7e,#bbff7b,#d4ff78,#efff76,#fff46e,#ffdd60,#ffc855,#ffb64b,#ffa642,#ff993b,#ff8c34,#ff812e,#ff7728,#ff6e23,#ff661f,#ff5f1b,#ff5817,#ff5213,#fe4c10,#fd460d,#fc410b,#fa3c08,#f93706,#f63304,#f42f02,#f12b00,#ef2700,#ec2400,#e92100,#e61e00,#e21b00,#df1900,#dc1600)"></i>
<i style="left:22px;top:289px;width:528px;background:linear-gradient(90deg,#00fdb2,#00fdb1,#00fdb0,#00fdae,#00fdad,#00fcac,#00fcab,#00fcaa,#00fca9,#00fda8,#00fda7,#00fda6,#00fda5,#00fda4,#00fea3,#00fea2,#00fea1,#00fe9f,#00ff9e,#00ff9d,#00ff9b,#00ff9a,#00ff98,#00ff96,#00ff95,#0bff93,#1bff91,#2dff8f,#3fff8d,#52ff8b,#66ff89,#7bff86,#91ff84,#a8ff82,#c0ff7f,#d9ff7c,#f4ff7a,#ffef6f,#ffd862,#ffc456,#ffb24c,#ffa344,#ff953c,#ff8935,#ff7e2f,#ff7529,#ff6c24,#ff6420,#ff5d1c,#ff5618,#ff5014,#fe4a11,#fd440e,#fc3f0c,#fa3a09,#f83607,#f63105,#f32d03,#f12a01,#ee2600,#eb2300,#e82000,#e51d00,#e11a00,#de1800,#db1500,#d81300)"></i>
<i style="left:23px;top:291px;width:528px;background:linear-gradient(90deg,#00fdb4,#00fdb3,#00fdb2,#00fdb1,#00fdb0,#00fdaf,#00fdae,#00fdad,#00fdac,#00fdab,#00fdaa,#00fda9,#00fda8,#00fea7,#00fea6,#00fea5,#00fea4,#00ffa3,#00ffa1,#00ffa0,#00ff9e,#00ff9d,#00ff9b,#00ff9a,#00ff98,#0fff96,#1fff94,#31ff92,#43ff90,#57ff8e,#6bff8c,#81ff8a,#97ff88,#afff85,#c8ff83,#e2ff80,#fdff7d,#ffe76f,#ffd062,#ffbd56,#ffac4d,#ff9e44,#ff903c,#ff8535,#ff7a2f,#ff712a,#ff6825,#ff6120,#ff5a1c,#ff5318,#ff4d15,#fe4712,#fd420f,#fb3d0c,#f9380a,#f73407,#f52f05,#f22c03,#f02801,#ed2400,#ea2100,#e71e00,#e31b00,#e01900,#dd1600,#da1400,#d71200)"></i>
<i style="left:24px;top:293px;width:528px;background:linear-gradient(90deg,#00feb7,#00fdb6,#00fdb5,#00fdb4,#00fdb3,#00fdb2,#00fdb1,#00fdb0,#00fdaf,#00fdae,#00fdad,#00fdac,#00feab,#00feaa,#00fea9,#00fea8,#00fea7,#00ffa6,#00ffa5,#00ffa3,#00ffa2,#00ffa0,#00ff9f,#00ff9d,#03ff9b,#13ff9a,#24ff98,#35ff96,#48ff94,#5cff92,#71ff90,#87ff8e,#9eff8c,#b6ff89,#d0ff87,#eaff84,#fff87e,#ffdf6f,#ffc962,#ffb756,#ffa74d,#ff9844,#ff8c3d,#ff8136,#ff7630,#ff6d2a,#ff6525,#ff5d21,#ff571d,#ff5019,#fe4a15,#fe4512,#fc3f0f,#fb3b0d,#f9360a,#f73208,#f42d06,#f22a04,#ef2602,#ec2300,#e92000,#e51d00,#e21a00,#df1800,#db1500,#d81300,#d51100)"></i>
<i style="left:24px;top:295px;width:528px;background:linear-gradient(90deg,#00feba,#00feb9,#00fdb8,#00fdb7,#00fdb7,#00fdb6,#00fdb5,#00fdb4,#00fdb3,#00fdb2,#00fdb1,#00feb0,#00feaf,#00feae,#00fead,#00feac,#00ffab,#00ffa9,#00ffa8,#00ffa7,#00ffa5,#00ffa4,#00ffa2,#00ffa1,#05ff9f,#14ff9e,#26ff9c,#38ff9a,#4bff98,#5fff96,#74ff94,#8bff92,#a2ff90,#bbff8d,#d5ff8b,#f0ff88,#fff27f,#ffda70,#ffc563,#ffb358,#ffa34e,#ff9545,#ff893e,#ff7e37,#ff7431,#ff6b2b,#ff6326,#ff5b22,#ff551e,#ff4e1a,#fe4816,#fd4313,#fc3e10,#fa390d,#f8340b,#f63008,#f42c06,#f12804,#ee2503,#eb2201,#e81e00,#e51c00,#e11900,#de1600,#da1400,#d71200,#d41000)"></i>
<i style="left:25px;top:297px;width:528px;background:linear-gradient(90deg,#00febd,#00febc,#00febb,#00febb,#00fdba,#00fdb9,#00fdb8,#00fdb7,#00fdb6,#00feb5,#00feb4,#00feb3,#00feb2,#00feb1,#00feb0,#00ffaf,#00ffae,#00ffad,#00ffac,#00ffaa,#00ffa9,#00ffa8,#00ffa6,#00ffa5,#08ffa3,#18ffa1,#2affa0,#3cff9e,#50ff9c,#65ff9a,#7bff98,#91ff96,#a9ff94,#c3ff92,#ddff8f,#f9ff8d,#ffea7f,#ffd270,#ffbe63,#ffad58,#ff9e4e,#ff9046,#ff843e,#ff7a37,#ff7031,#ff672c,#ff5f27,#ff5822,#ff521e,#ff4c1a,#fe4617,#fd4014,#fc3b11,#fa370e,#f8320b,#f52e09,#f32a07,#f02605,#ed2303,#ea2001,#e71d00,#e31a00,#e01800,#dc1500,#d91300,#d61100,#d20f00)"></i>
<i style="left:26px;top:299px;width:536px;background:linear-gradient(90deg,#00fec0,#00febf,#00febf,#00febe,#00febd,#00febc,#00febb,#00feba,#00feb9,#00feb8,#00feb7,#00feb7,#00feb6,#00feb5,#00feb4,#00ffb3,#00ffb2,#00ffb0,#00ffaf,#00ffae,#00ffad,#00ffab,#00ffaa,#00ffa8,#0cffa7,#1cffa5,#2effa3,#41ffa2,#55ffa0,#6bff9e,#81ff9c,#98ff9a,#b1ff98,#cbff96,#e6ff93,#fffb8f,#ffe17e,#ffcb6f,#ffb863,#ffa758,#ff984e,#ff8b46,#ff803e,#ff7538,#ff6c32,#ff642c,#ff5c27,#ff5523,#ff4f1f,#ff491b,#fe4317,#fd3e14,#fb3911,#f9340e,#f7300c,#f52c09,#f22807,#ef2505,#ec2103,#e91e02,#e51b00,#e21900,#df1600,#db1400,#d81200,#d41000,#d10e00,#ce0c00)"></i>
<i style="left:27px;top:301px;width:536px;background:linear-gradient(90deg,#00fec3,#00fec2,#00fec2,#00fec1,#00fec0,#00febf,#00febe,#00febd,#00febd,#00febc,#00febb,#00feba,#00feb9,#00feb8,#00ffb7,#00ffb6,#00ffb5,#00ffb4,#00ffb3,#00ffb2,#00ffb0,#00ffaf,#00ffae,#00ffac,#0fffab,#21ffa9,#33ffa7,#46ffa6,#5bffa4,#71ffa2,#87ffa0,#9fff9e,#b9ff9c,#d3ff9a,#efff98,#fff28e,#ffd97d,#ffc46f,#ffb163,#ffa158,#ff934e,#ff8746,#ff7c3f,#ff7238,#ff6932,#ff602d,#ff5928,#ff5223,#ff4c1f,#ff461b,#fe4118,#fc3c15,#fb3712,#f9320f,#f62e0c,#f42a0a,#f12608,#ee2306,#eb2004,#e81d02,#e41a01,#e11700,#dd1500,#da1300,#d61100,#d30f00,#cf0d00,#cc0b00)"></i>
<i style="left:27px;top:303px;width:536px;background:linear-gradient(90deg,#00fec7,#00fec6,#00fec5,#00fec4,#00fec3,#00fec3,#00fec2,#00fec1,#00fec0,#00febf,#00febe,#00febe,#00febd,#00ffbc,#00ffbb,#00ffba,#00ffb9,#00ffb8,#00ffb7,#00ffb6,#00ffb4,#00ffb3,#00ffb2,#01ffb0,#11ffaf,#23ffad,#35ffac,#49ffaa,#5effa8,#74ffa7,#8bffa5,#a4ffa3,#bdffa1,#d8ff9f,#f5ff9d,#ffed8f,#ffd47f,#ffbf70,#ffad64,#ff9e59,#ff9050,#ff8447,#ff7940,#ff6f39,#ff6633,#ff5e2e,#ff5729,#ff5024,#ff4a20,#fe441c,#fd3f19,#fc3a16,#fa3512,#f83110,#f62d0d,#f3290b,#f12508,#ee2206,#ea1e05,#e71c03,#e41901,#e01600,#dc1400,#d91200,#d51000,#d20e00,#ce0c00,#cb0a00)"></i>
<i style="left:28px;top:305px;width:536px;background:linear-gradient(90deg,#00feca,#00fec9,#00fec8,#00fec7,#00fec7,#00fec6,#00fec5,#00fec4,#00fec4,#00fec3,#00fec2,#00fec1,#00ffc0,#00ffc0,#00ffbf,#00ffbe,#00ffbd,#00ffbc,#00ffbb,#00ffb9,#00ffb8,#00ffb7,#00ffb6,#04ffb4,#15ffb3,#27ffb2,#3affb0,#4effae,#64ffad,#7affab,#92ffa9,#abffa8,#c6ffa6,#e1ffa4,#ffffa2,#ffe48e,#ffcc7e,#ffb870,#ffa764,#ff9859,#ff8b50,#ff7f48,#ff7540,#ff6b3a,#ff6334,#ff5b2e,#ff5429,#ff4d25,#ff4721,#fe421d,#fd3d19,#fc3816,#fa3313,#f82f10,#f52b0d,#f3270b,#f02309,#ed2007,#e91d05,#e61a03,#e21702,#df1500,#db1300,#d71000,#d40e00,#d00d00,#cd0b00,#ca0900)"></i>
<i style="left:29px;top:307px;width:544px;background:linear-gradient(90deg,#00ffcd,#00fecc,#00fecb,#00fecb,#00feca,#00fec9,#00fec9,#00fec8,#00fec7,#00fec6,#00ffc6,#00ffc5,#00ffc4,#00ffc3,#00ffc2,#00ffc1,#00ffc1,#00ffc0,#00ffbe,#00ffbd,#00ffbc,#00ffbb,#00ffba,#08ffb9,#19ffb7,#2cffb6,#3fffb4,#54ffb3,#6affb1,#81ffb0,#99ffae,#b3ffac,#ceffaa,#ebffa9,#fff6a0,#ffdb8d,#ffc57d,#ffb270,#ffa164,#ff9359,#ff8650,#ff7b48,#ff7140,#ff673a,#ff5f34,#ff582f,#ff512a,#ff4b25,#ff4521,#fe3f1d,#fd3a1a,#fb3516,#f93113,#f72d11,#f5290e,#f2250b,#ef2209,#ec1e07,#e81b05,#e51904,#e11602,#dd1401,#da1100,#d60f00,#d20d00,#cf0c00,#cb0a00,#c80900,#c50700)"></i>
<i style="left:29px;top:309px;width:544px;background:linear-gradient(90deg,#00ffd0,#00ffd0,#00ffcf,#00fece,#00fece,#00fecd,#00fecc,#00fecc,#00fecb,#00ffca,#00ffc9,#00ffc9,#00ffc8,#00ffc7,#00ffc6,#00ffc5,#00ffc5,#00ffc4,#00ffc3,#00ffc2,#00ffc0,#00ffbf,#00ffbe,#0affbd,#1bffbc,#2effba,#42ffb9,#57ffb8,#6dffb6,#85ffb5,#9effb3,#b8ffb1,#d3ffb0,#f0ffae,#fff0a2,#ffd68f,#ffc07f,#ffae71,#ff9e65,#ff8f5a,#ff8351,#ff7849,#ff6e42,#ff653b,#ff5d35,#ff5530,#ff4f2b,#ff4926,#ff4322,#fe3e1e,#fd381b,#fb3417,#f92f14,#f72b11,#f4270f,#f1240c,#ee200a,#eb1d08,#e81a06,#e41704,#e01503,#dd1301,#d91000,#d50e00,#d20d00,#ce0b00,#ca0900,#c70800,#c40600)"></i>
<i style="left:30px;top:311px;width:544px;background:linear-gradient(90deg,#00ffd4,#00ffd3,#00ffd2,#00ffd2,#00ffd1,#00ffd0,#00ffd0,#00ffcf,#00ffcf,#00ffce,#00ffcd,#00ffcd,#00ffcc,#00ffcb,#00ffca,#00ffc9,#00ffc9,#00ffc8,#00ffc7,#00ffc6,#00ffc5,#00ffc4,#00ffc3,#0dffc1,#1fffc0,#33ffbf,#47ffbe,#5dffbc,#74ffbb,#8cffba,#a5ffb8,#c0ffb6,#dcffb5,#faffb3,#ffe7a0,#ffce8e,#ffb97e,#ffa870,#ff9865,#ff8a5a,#ff7e51,#ff7449,#ff6a42,#ff613b,#ff5935,#ff5230,#ff4c2b,#ff4627,#ff4023,#fe3b1f,#fc361b,#fb3218,#f92d15,#f62912,#f3250f,#f1220d,#ed1f0a,#ea1c08,#e71906,#e31605,#df1403,#db1102,#d80f00,#d40d00,#d00b00,#cc0a00,#c90800,#c50700,#c20600)"></i>
<i style="left:31px;top:313px;width:544px;background:linear-gradient(90deg,#00ffd7,#00ffd6,#00ffd6,#00ffd5,#00ffd5,#00ffd4,#00ffd4,#00ffd3,#00ffd2,#00ffd2,#00ffd1,#00ffd0,#00ffd0,#00ffcf,#00ffce,#00ffce,#00ffcd,#00ffcc,#00ffcb,#00ffca,#00ffc9,#00ffc8,#01ffc7,#11ffc6,#24ffc5,#38ffc4,#4dffc3,#63ffc1,#7affc0,#93ffbf,#adffbd,#c9ffbc,#e6ffba,#fff9b5,#ffde9f,#ffc78d,#ffb37d,#ffa170,#ff9365,#ff855a,#ff7a51,#ff6f49,#ff6642,#ff5e3c,#ff5636,#ff4f30,#ff492c,#ff4327,#fe3e23,#fd391f,#fc341b,#fa2f18,#f82b15,#f52712,#f3240f,#f0200d,#ec1d0b,#e91a09,#e51707,#e21505,#de1203,#da1002,#d60e01,#d30c00,#cf0a00,#cb0900,#c70700,#c40600,#c10500)"></i>
<i style="left:32px;top:315px;width:552px;background:linear-gradient(90deg,#00ffda,#00ffda,#00ffd9,#00ffd9,#00ffd8,#00ffd8,#00ffd7,#00ffd7,#00ffd6,#00ffd6,#00ffd5,#00ffd4,#00ffd4,#00ffd3,#00ffd2,#00ffd2,#00ffd1,#00ffd0,#00ffcf,#00ffce,#00ffce,#00ffcd,#04ffcc,#16ffcb,#29ffca,#3dffc9,#52ffc8,#69ffc6,#81ffc5,#9bffc4,#b5ffc3,#d2ffc1,#f0ffc0,#fff0b3,#ffd59e,#ffbf8c,#ffac7d,#ff9c70,#ff8d64,#ff815a,#ff7551,#ff6b49,#ff6242,#ff5a3c,#ff5336,#ff4c31,#ff462c,#ff4128,#fe3b23,#fd361f,#fb321c,#fa2d19,#f72915,#f52513,#f22210,#ef1e0d,#ec1b0b,#e81809,#e41607,#e11305,#dd1104,#d90f02,#d50d01,#d10b00,#cd0900,#ca0800,#c60600,#c30500,#bf0400,#bc0300)"></i>
<i style="left:32px;top:317px;width:552px;background:linear-gradient(90deg,#00ffde,#00ffde,#00ffdd,#00ffdd,#00ffdc,#00ffdc,#00ffdb,#00ffdb,#00ffda,#00ffda,#00ffd9,#00ffd9,#00ffd8,#00ffd7,#00ffd7,#00ffd6,#00ffd5,#00ffd5,#00ffd4,#00ffd3,#00ffd2,#00ffd1,#06ffd1,#18ffd0,#2bffcf,#40ffce,#56ffcd,#6dffcc,#85ffcb,#9fffc9,#baffc8,#d7ffc7,#f6ffc6,#ffeab4,#ffd09f,#ffba8d,#ffa87e,#ff9871,#ff8a66,#ff7d5b,#ff7253,#ff694b,#ff6043,#ff583d,#ff5137,#ff4a32,#ff442d,#ff3f28,#fe3924,#fd3520,#fb301d,#f92c19,#f72816,#f42413,#f22011,#ee1d0e,#eb1a0c,#e7170a,#e41508,#e01206,#dc1004,#d80e03,#d40c02,#d00a00,#cd0900,#c90700,#c50600,#c20500,#be0300,#bb0200)"></i>
<i style="left:33px;top:319px;width:552px;background:linear-gradient(90deg,#00ffe2,#00ffe1,#00ffe1,#00ffe0,#00ffe0,#00ffdf,#00ffdf,#00ffdf,#00ffde,#00ffde,#00ffdd,#00ffdd,#00ffdc,#00ffdc,#00ffdb,#00ffda,#00ffda,#00ffd9,#00ffd8,#00ffd8,#00ffd7,#00ffd6,#0affd6,#1cffd5,#30ffd4,#45ffd3,#5cffd2,#73ffd1,#8dffd0,#a7ffcf,#c3ffce,#e1ffcd,#fffeca,#ffe0b2,#ffc89e,#ffb38c,#ffa27e,#ff9271,#ff8565,#ff795b,#ff6e53,#ff654b,#ff5c44,#ff553d,#ff4e37,#ff4732,#ff422d,#ff3c29,#fe3725,#fd3221,#fb2e1d,#f92a1a,#f62617,#f42214,#f11f11,#ee1c0e,#ea190c,#e6160a,#e31308,#df1106,#db0f05,#d70d03,#d30b02,#cf0901,#cb0800,#c70600,#c40500,#c00400,#bd0300,#ba0200)"></i>
<i style="left:34px;top:321px;width:552px;background:linear-gradient(90deg,#00ffe5,#00ffe5,#00ffe5,#00ffe4,#00ffe4,#00ffe3,#00ffe3,#00ffe3,#00ffe2,#00ffe2,#00ffe1,#00ffe1,#00ffe0,#00ffe0,#00ffdf,#00ffdf,#00ffde,#00ffde,#00ffdd,#00ffdd,#00ffdc,#00ffdb,#0effdb,#21ffda,#35ffd9,#4bffd8,#62ffd8,#7affd7,#94ffd6,#afffd5,#ccffd4,#ebffd3,#fff3c8,#ffd8b0,#ffc09c,#ffad8c,#ff9c7d,#ff8d70,#ff8065,#ff745b,#ff6a53,#ff614b,#ff5944,#ff513e,#ff4b38,#ff4533,#ff3f2e,#fe3a29,#fe3525,#fc3021,#fa2c1d,#f8281a,#f62417,#f32014,#f01d11,#ed1a0f,#e9170d,#e5140a,#e21208,#de1007,#da0e05,#d60c04,#d20a02,#ce0801,#ca0700,#c60500,#c20400,#bf0300,#bb0200,#b80100)"></i>
<i style="left:35px;top:323px;width:552px;background:linear-gradient(90deg,#00ffe9,#00ffe9,#00ffe8,#00ffe8,#00ffe8,#00ffe7,#00ffe7,#00ffe7,#00ffe6,#00ffe6,#00ffe6,#00ffe5,#00ffe5,#00ffe4,#00ffe4,#00ffe4,#00ffe3,#00ffe3,#00ffe2,#00ffe2,#00ffe1,#00ffe0,#12ffe0,#25ffdf,#3affdf,#51ffde,#68ffdd,#81ffdd,#9cffdc,#b8ffdb,#d6ffda,#f5ffd9,#ffe9c6,#ffcfaf,#ffb99b,#ffa68b,#ff967c,#ff8870,#ff7b65,#ff705b,#ff6653,#ff5d4b,#ff5644,#ff4e3e,#ff4838,#ff4233,#ff3c2e,#fe372a,#fd3225,#fc2e22,#fa2a1e,#f8261a,#f52217,#f21f14,#ef1b12,#ec180f,#e8160d,#e4130b,#e11109,#dd0e07,#d90c05,#d50b04,#d10903,#cc0701,#c90600,#c50500,#c10300,#bd0200,#ba0100,#b70000)"></i>
<i style="left:35px;top:325px;width:560px;background:linear-gradient(90deg,#00ffed,#00ffed,#00ffec,#00ffec,#00ffec,#00ffec,#00ffeb,#00ffeb,#00ffeb,#00ffea,#00ffea,#00ffea,#00ffe9,#00ffe9,#00ffe9,#00ffe8,#00ffe8,#00ffe8,#00ffe7,#00ffe7,#00ffe6,#02ffe6,#14ffe5,#28ffe5,#3dffe4,#54ffe4,#6cffe3,#86ffe3,#a1ffe2,#bdffe1,#dcffe1,#fcffe0,#ffe3c7,#ffcab0,#ffb49c,#ffa28c,#ff927e,#ff8471,#ff7866,#ff6d5c,#ff6354,#ff5b4c,#ff5345,#ff4c3f,#ff4639,#ff4034,#ff3a2f,#fe352b,#fd3126,#fc2c22,#fa281f,#f7241b,#f52118,#f21d15,#ef1a12,#eb1710,#e8140e,#e4120b,#e01009,#dc0d08,#d80c06,#d40a04,#d00803,#cc0702,#c80501,#c40400,#c00300,#bc0200,#b90100,#b60000,#b30000)"></i>
<i style="left:36px;top:327px;width:560px;background:linear-gradient(90deg,#00fff1,#00fff0,#00fff0,#00fff0,#00fff0,#00fff0,#00ffef,#00ffef,#00ffef,#00ffef,#00ffef,#00ffee,#00ffee,#00ffee,#00ffee,#00ffed,#00ffed,#00ffed,#00ffec,#00ffec,#00ffec,#06ffeb,#18ffeb,#2dffeb,#43ffea,#5affea,#73ffe9,#8dffe9,#a9ffe8,#c7ffe8,#e6ffe7,#fff7e0,#ffdac5,#ffc2ae,#ffad9b,#ff9c8b,#ff8c7d,#ff7f71,#ff7366,#ff695c,#ff6054,#ff574c,#ff5045,#ff493f,#ff4339,#ff3d34,#ff382f,#fe332b,#fd2e27,#fb2a23,#f9261f,#f7221c,#f41f18,#f11b15,#ee1813,#ea1610,#e7130e,#e3110c,#df0e0a,#db0c08,#d70a06,#d30905,#cf0703,#ca0602,#c60401,#c30300,#bf0200,#bb0100,#b80000,#b50000,#b20000)"></i>
<i style="left:37px;top:329px;width:560px;background:linear-gradient(90deg,#00fff5,#00fff4,#00fff4,#00fff4,#00fff4,#00fff4,#00fff4,#00fff4,#00fff4,#00fff3,#00fff3,#00fff3,#00fff3,#00fff3,#00fff3,#00fff2,#00fff2,#00fff2,#00fff2,#00fff1,#00fff1,#0afff1,#1dfff1,#32fff0,#49fff0,#61fff0,#7afff0,#95ffef,#b2ffef,#d0ffef,#f0ffee,#ffeddd,#ffd1c3,#ffbaad,#ffa69a,#ff958a,#ff877d,#ff7a71,#ff6f66,#ff655c,#ff5c54,#ff544c,#ff4d46,#ff463f,#ff403a,#ff3b35,#ff3530,#fe312b,#fd2c27,#fb2823,#f9241f,#f6201c,#f41d19,#f01a16,#ed1713,#ea1411,#e6120e,#e20f0c,#de0d0a,#da0b08,#d60907,#d20805,#cd0604,#c90502,#c50301,#c10200,#bd0100,#ba0000,#b60000,#b30000,#b00000)"></i>
<i style="left:37px;top:331px;width:568px;background:linear-gradient(90deg,#00fff9,#00fff9,#00fff9,#00fff8,#00fff8,#00fff8,#00fff8,#00fff8,#00fff8,#00fff8,#00fff8,#00fff8,#00fff8,#00fff8,#00fff8,#00fff8,#00fff7,#00fff7,#00fff7,#00fff7,#00fff7,#0bfff7,#1ffff7,#35fff7,#4cfff6,#64fff6,#7efff6,#9afff6,#b7fff6,#d6fff6,#f7fff5,#ffe6de,#ffccc4,#ffb5ae,#ffa29b,#ff928b,#ff837e,#ff7772,#ff6c67,#ff625d,#ff5955,#ff514d,#ff4a47,#ff4440,#ff3e3b,#ff3935,#ff3431,#fe2f2c,#fc2b28,#fb2624,#f92320,#f61f1d,#f31c19,#f01916,#ed1614,#e91311,#e5110f,#e20e0d,#dd0c0b,#d90a09,#d50807,#d10706,#cd0504,#c90403,#c40302,#c00201,#bd0100,#b90000,#b60000,#b20000,#af0000,#ad0000)"></i>
<i style="left:38px;top:333px;width:568px;background:linear-gradient(90deg,#00fffd,#00fffd,#00fffd,#00fffd,#00fffd,#00fffd,#00fffd,#00fffd,#00fffd,#00fffd,#00fffd,#00fffd,#00fffd,#00fffd,#00fffd,#00fffd,#00fffd,#00fffd,#00fffd,#00fffd,#00fffd,#10fffd,#24fffd,#3bfffd,#52fffd,#6bfffd,#86fffd,#a2fffd,#c1fffd,#e1fffd,#fffcf9,#ffdddb,#ffc3c2,#ffaeac,#ff9b9a,#ff8c8b,#ff7e7d,#ff7271,#ff6867,#ff5e5d,#ff5655,#ff4e4e,#ff4747,#ff4141,#ff3b3b,#ff3636,#fe3131,#fe2d2c,#fc2828,#fa2424,#f82120,#f61d1d,#f31a1a,#ef1717,#ec1414,#e81211,#e50f0f,#e10d0d,#dc0b0b,#d80909,#d40707,#d00606,#cc0404,#c70303,#c30202,#bf0101,#bb0000,#b80000,#b40000,#b10000,#ae0000,#ab0000)"></i>
<i style="left:39px;top:335px;width:568px;background:linear-gradient(90deg,#00fdff,#00fdff,#00fdff,#00fdff,#00fdff,#00fdff,#00fdff,#00fcff,#00fcff,#00fcff,#00fcff,#00fcff,#00fcff,#00fcff,#00fcff,#00fcff,#00fcff,#00fbff,#00fbff,#00fbff,#01fbff,#14fbff,#29fbff,#3ffbff,#57faff,#71faff,#8bfaff,#a8faff,#c6faff,#e6faff,#fff0f6,#ffd3d8,#ffbbc0,#ffa7ab,#ff9599,#ff868a,#ff797d,#ff6e71,#ff6367,#ff5a5d,#ff5255,#ff4b4e,#ff4447,#ff3e41,#ff393b,#ff3436,#fe2f31,#fd2a2d,#fc2628,#fa2224,#f81f21,#f51b1d,#f2181a,#ef1517,#eb1314,#e81012,#e40e0f,#e00c0d,#db0a0b,#d70809,#d30608,#cf0506,#ca0405,#c60203,#c20102,#be0001,#ba0000,#b70000,#b30000,#b00000,#ad0000,#aa0000)"></i>
<i style="left:40px;top:337px;width:568px;background:linear-gradient(90deg,#00f9ff,#00f9ff,#00f9ff,#00f8ff,#00f8ff,#00f8ff,#00f8ff,#00f8ff,#00f8ff,#00f7ff,#00f7ff,#00f7ff,#00f7ff,#00f7ff,#00f7ff,#00f6ff,#00f6ff,#00f6ff,#00f6ff,#00f5ff,#05f5ff,#18f5ff,#2df5ff,#44f4ff,#5bf4ff,#75f4ff,#90f3ff,#acf3ff,#caf3ff,#eaf2ff,#ffe6f3,#ffcad6,#ffb3be,#ffa0aa,#ff8f98,#ff8189,#ff747c,#ff6971,#ff5f66,#ff575d,#ff4f55,#ff484e,#ff4147,#ff3b41,#ff363b,#ff3136,#fe2d32,#fd282d,#fb2429,#f92025,#f71d21,#f41a1e,#f1171a,#ee1417,#ea1115,#e70f12,#e30d10,#df0b0e,#da090c,#d6070a,#d20508,#ce0406,#c90305,#c50204,#c10003,#bd0001,#b90001,#b50000,#b20000,#af0000,#ac0000,#a90000)"></i>
<i style="left:40px;top:339px;width:568px;background:linear-gradient(90deg,#00f5ff,#00f4ff,#00f4ff,#00f4ff,#00f4ff,#00f4ff,#00f3ff,#00f3ff,#00f3ff,#00f3ff,#00f2ff,#00f2ff,#00f2ff,#00f2ff,#00f1ff,#00f1ff,#00f1ff,#00f0ff,#00f0ff,#00f0ff,#07efff,#1aefff,#2feeff,#45eeff,#5deeff,#76edff,#90edff,#acecff,#caecff,#eaebff,#ffe0f3,#ffc5d7,#ffaebf,#ff9bab,#ff8b99,#ff7d8a,#ff717d,#ff6672,#ff5d68,#ff545e,#ff4c56,#ff454f,#ff3f48,#ff3942,#ff343c,#ff2f37,#fe2b32,#fd272e,#fb232a,#f91f26,#f71c22,#f4181e,#f1151b,#ee1318,#ea1015,#e60e13,#e20c10,#de0a0e,#da080c,#d6060a,#d10508,#cd0307,#c90205,#c40104,#c00003,#bc0002,#b80001,#b50000,#b10000,#ae0000,#ab0000,#a80000)"></i>
<i style="left:41px;top:341px;width:576px;background:linear-gradient(90deg,#00f1ff,#00f0ff,#00f0ff,#00f0ff,#00f0ff,#00efff,#00efff,#00efff,#00eeff,#00eeff,#00eeff,#00edff,#00edff,#00edff,#00ecff,#00ecff,#00ebff,#00ebff,#00eaff,#00eaff,#0be9ff,#1ee9ff,#33e8ff,#49e8ff,#61e7ff,#7ae7ff,#94e6ff,#b0e5ff,#cee5ff,#eee4ff,#ffd6f0,#ffbcd4,#ffa7bd,#ff95a9,#ff8598,#ff788a,#ff6c7d,#ff6271,#ff5967,#ff505e,#ff4956,#ff424f,#ff3c48,#ff3742,#ff323d,#ff2d37,#fe2933,#fd252e,#fb212a,#f91d26,#f61a22,#f4171f,#f0141b,#ed1118,#e90f16,#e60c13,#e20a11,#dd080e,#d9070c,#d5050a,#d00409,#cc0207,#c80106,#c30004,#bf0003,#bb0002,#b70001,#b30000,#b00000,#ad0000,#aa0000,#a70000,#a50000)"></i>
<i style="left:42px;top:343px;width:576px;background:linear-gradient(90deg,#00edff,#00ecff,#00ecff,#00ecff,#00ebff,#00ebff,#00eaff,#00eaff,#00eaff,#00e9ff,#00e9ff,#00e8ff,#00e8ff,#00e8ff,#00e7ff,#00e7ff,#00e6ff,#00e6ff,#00e5ff,#00e4ff,#0fe4ff,#22e3ff,#37e2ff,#4de2ff,#65e1ff,#7ee0ff,#98e0ff,#b4dfff,#d2deff,#f1ddff,#ffcced,#ffb4d2,#ffa0bb,#ff8fa8,#ff8097,#ff7389,#ff687c,#ff5e71,#ff5567,#ff4d5e,#ff4656,#ff3f4f,#ff3a48,#ff3442,#ff2f3d,#ff2b38,#fe2633,#fc222e,#fb1f2a,#f81b26,#f61822,#f3151f,#f0121c,#ec1019,#e90d16,#e50b13,#e10911,#dc070f,#d8060d,#d4040b,#cf0309,#cb0207,#c70006,#c20005,#be0003,#ba0002,#b60001,#b20001,#af0000,#ac0000,#a90000,#a60000,#a40000)"></i>
<i style="left:43px;top:345px;width:576px;background:linear-gradient(90deg,#00e8ff,#00e8ff,#00e8ff,#00e7ff,#00e7ff,#00e7ff,#00e6ff,#00e6ff,#00e5ff,#00e5ff,#00e4ff,#00e4ff,#00e3ff,#00e3ff,#00e2ff,#00e1ff,#00e1ff,#00e0ff,#00e0ff,#01dfff,#12deff,#26ddff,#3bddff,#51dcff,#69dbff,#82daff,#9cd9ff,#b8d8ff,#d6d7ff,#f5d6ff,#ffc3ea,#ffacd0,#ff99ba,#ff89a7,#ff7b96,#ff6e88,#ff637c,#ff5a71,#ff5167,#ff4a5e,#ff4356,#ff3c4f,#ff3749,#ff3243,#ff2d3d,#fe2838,#fe2433,#fc202f,#fa1d2a,#f81926,#f51623,#f2131f,#ef111c,#ec0e19,#e80c16,#e40a14,#e00811,#dc060f,#d7050d,#d3030b,#ce0209,#ca0108,#c60006,#c10005,#bd0004,#b90003,#b50002,#b10001,#ae0000,#ab0000,#a80000,#a50000,#a30000)"></i>
<i style="left:44px;top:347px;width:576px;background:linear-gradient(90deg,#00e5ff,#00e4ff,#00e4ff,#00e3ff,#00e3ff,#00e2ff,#00e2ff,#00e1ff,#00e1ff,#00e0ff,#00e0ff,#00dfff,#00deff,#00deff,#00ddff,#00dcff,#00dcff,#00dbff,#00daff,#04d9ff,#16d9ff,#2ad8ff,#3fd7ff,#55d6ff,#6dd5ff,#86d4ff,#a0d3ff,#bcd2ff,#d9d1ff,#f9cfff,#ffbbe7,#ffa5cd,#ff93b8,#ff83a6,#ff7596,#ff6988,#ff5f7b,#ff5671,#ff4e67,#ff465e,#ff4056,#ff3a4f,#ff3449,#ff2f43,#ff2b3d,#fe2638,#fd2233,#fc1e2f,#fa1b2b,#f81827,#f51523,#f21220,#ef0f1c,#eb0d19,#e70b16,#e30914,#df0711,#db050f,#d6040d,#d2020b,#cd010a,#c90008,#c50007,#c00005,#bc0004,#b80003,#b40002,#b00001,#ad0000,#aa0000,#a70000,#a40000,#a20000)"></i>
<i style="left:44px;top:349px;width:584px;background:linear-gradient(90deg,#00e1ff,#00e0ff,#00e0ff,#00dfff,#00dfff,#00deff,#00ddff,#00ddff,#00dcff,#00dcff,#00dbff,#00daff,#00daff,#00d9ff,#00d8ff,#00d8ff,#00d7ff,#00d6ff,#00d5ff,#06d4ff,#18d3ff,#2bd2ff,#40d1ff,#56d0ff,#6ecfff,#86ceff,#a1cdff,#bcccff,#d9caff,#f8c9ff,#ffb5e8,#ffa0ce,#ff8eb9,#ff7fa6,#ff7297,#ff6689,#ff5c7c,#ff5372,#ff4b68,#ff445f,#ff3d57,#ff3750,#ff324a,#ff2d44,#ff293e,#fe2539,#fd2134,#fc1d30,#fa192b,#f71627,#f51324,#f21120,#ee0e1d,#eb0c1a,#e70a17,#e30814,#df0612,#da0410,#d6030e,#d2020c,#cd000a,#c90008,#c40007,#c00006,#bc0004,#b70003,#b30002,#b00001,#ac0001,#a90000,#a60000,#a40000,#a10000,#a00000)"></i>
<i style="left:45px;top:351px;width:584px;background:linear-gradient(90deg,#00ddff,#00dcff,#00dcff,#00dbff,#00daff,#00daff,#00d9ff,#00d9ff,#00d8ff,#00d7ff,#00d7ff,#00d6ff,#00d5ff,#00d4ff,#00d3ff,#00d3ff,#00d2ff,#00d1ff,#00d0ff,#0acfff,#1cceff,#2fcdff,#44ccff,#5acaff,#72c9ff,#8ac8ff,#a4c7ff,#c0c5ff,#ddc4ff,#fcc2ff,#ffade5,#ff99cc,#ff88b7,#ff79a5,#ff6d96,#ff6288,#ff587c,#ff4f71,#ff4868,#ff415f,#ff3a57,#ff3550,#ff304a,#ff2b44,#ff263e,#fe2239,#fd1f35,#fb1b30,#f9182c,#f71528,#f41224,#f10f20,#ee0d1d,#ea0a1a,#e60817,#e20715,#de0512,#da0310,#d5020e,#d1010c,#cc000a,#c80009,#c30007,#bf0006,#bb0005,#b60004,#b30002,#af0002,#ab0001,#a80000,#a50000,#a30000,#a10000,#9f0000)"></i>
<i style="left:46px;top:353px;width:584px;background:linear-gradient(90deg,#00d9ff,#00d8ff,#00d8ff,#00d7ff,#00d6ff,#00d6ff,#00d5ff,#00d4ff,#00d4ff,#00d3ff,#00d2ff,#00d1ff,#00d0ff,#00d0ff,#00cfff,#00ceff,#00cdff,#00ccff,#00cbff,#0dcaff,#20c9ff,#33c7ff,#48c6ff,#5ec5ff,#75c4ff,#8ec2ff,#a8c1ff,#c4bfff,#e0beff,#ffbcff,#ffa5e2,#ff92ca,#ff82b6,#ff74a4,#ff6895,#ff5d87,#ff547c,#ff4c71,#ff4468,#ff3e5f,#ff3857,#ff3250,#ff2d4a,#ff2844,#ff243f,#fe203a,#fd1d35,#fb1930,#f9162c,#f71328,#f41024,#f10e21,#ed0b1d,#e9091a,#e50718,#e10515,#dd0413,#d90210,#d4010e,#d0000c,#cb000b,#c70009,#c20007,#be0006,#ba0005,#b60004,#b20003,#ae0002,#aa0001,#a70000,#a40000,#a20000,#a00000,#9e0000)"></i>
<i style="left:47px;top:355px;width:584px;background:linear-gradient(90deg,#00d5ff,#00d4ff,#00d4ff,#00d3ff,#00d2ff,#00d2ff,#00d1ff,#00d0ff,#00cfff,#00ceff,#00ceff,#00cdff,#00ccff,#00cbff,#00caff,#00c9ff,#00c8ff,#00c7ff,#00c6ff,#11c4ff,#23c3ff,#37c2ff,#4cc1ff,#62bfff,#79beff,#92bcff,#acbbff,#c7b9ff,#e4b7ff,#ffb3fc,#ff9ee0,#ff8cc8,#ff7cb4,#ff6fa3,#ff6394,#ff5987,#ff507b,#ff4871,#ff4167,#ff3b5f,#ff3557,#ff2f50,#ff2b4a,#ff2644,#ff223f,#fe1e3a,#fd1b35,#fb1730,#f9142c,#f61128,#f30f24,#f00c21,#ec0a1e,#e9081b,#e50618,#e10415,#dc0313,#d80111,#d3000e,#cf000d,#ca000b,#c60009,#c10008,#bd0006,#b90005,#b50004,#b10003,#ad0002,#aa0001,#a60000,#a40000,#a10000,#9f0000,#9d0000)"></i>
<i style="left:48px;top:357px;width:584px;background:linear-gradient(90deg,#00d1ff,#00d1ff,#00d0ff,#00cfff,#00ceff,#00ceff,#00cdff,#00ccff,#00cbff,#00caff,#00c9ff,#00c8ff,#00c7ff,#00c6ff,#00c5ff,#00c4ff,#00c3ff,#00c2ff,#04c1ff,#15bfff,#27beff,#3bbdff,#50bbff,#66baff,#7db8ff,#96b7ff,#afb5ff,#cbb3ff,#e7b1ff,#ffabf8,#ff96dd,#ff85c6,#ff77b3,#ff6aa2,#ff5f93,#ff5586,#ff4c7b,#ff4570,#ff3e67,#ff385f,#ff3257,#ff2d50,#ff284a,#ff2444,#ff203f,#fe1c3a,#fc1935,#fa1531,#f8122c,#f61028,#f30d25,#ef0b21,#ec091e,#e8071b,#e40518,#e00316,#dc0213,#d70011,#d3000f,#ce000d,#ca000b,#c50009,#c10008,#bc0007,#b80005,#b40004,#b00003,#ac0002,#a90001,#a60001,#a30000,#a00000,#9e0000,#9d0000)"></i>
<i style="left:48px;top:359px;width:592px;background:linear-gradient(90deg,#00ceff,#00cdff,#00ccff,#00cbff,#00caff,#00caff,#00c9ff,#00c8ff,#00c7ff,#00c6ff,#00c5ff,#00c4ff,#00c3ff,#00c2ff,#00c1ff,#00c0ff,#00beff,#00bdff,#05bcff,#16bbff,#28b9ff,#3cb8ff,#51b6ff,#67b5ff,#7eb3ff,#96b1ff,#b0afff,#cbaeff,#e7acff,#ffa6f9,#ff92de,#ff81c7,#ff73b4,#ff66a3,#ff5c94,#ff5287,#ff4a7c,#ff4271,#ff3b68,#ff3560,#ff3058,#ff2b51,#ff264b,#ff2245,#ff1e40,#fe1b3b,#fc1736,#fa1431,#f8112d,#f60e29,#f30c25,#ef0a22,#ec081f,#e8061c,#e40419,#e00216,#db0114,#d70011,#d2000f,#ce000d,#c9000c,#c5000a,#c00008,#bc0007,#b80006,#b40005,#b00004,#ac0003,#a90002,#a50001,#a30000,#a00000,#9e0000,#9c0000,#9b0000)"></i>
<i style="left:49px;top:361px;width:592px;background:linear-gradient(90deg,#00caff,#00c9ff,#00c8ff,#00c7ff,#00c7ff,#00c6ff,#00c5ff,#00c4ff,#00c3ff,#00c2ff,#00c1ff,#00c0ff,#00bfff,#00bdff,#00bcff,#00bbff,#00baff,#00b8ff,#09b7ff,#1ab6ff,#2cb4ff,#40b3ff,#55b1ff,#6aafff,#82aeff,#9aacff,#b3aaff,#cea8ff,#eba6ff,#ff9ef6,#ff8bdc,#ff7bc5,#ff6db2,#ff62a2,#ff5793,#ff4e87,#ff467b,#ff3f71,#ff3868,#ff3260,#ff2d58,#ff2851,#ff244b,#ff2045,#fe1c40,#fd193b,#fc1536,#fa1232,#f80f2d,#f50d29,#f20a26,#ef0822,#eb061f,#e7041c,#e30319,#df0116,#db0014,#d60012,#d2000f,#cd000e,#c9000c,#c4000a,#c00009,#bb0007,#b70006,#b30005,#af0004,#ab0003,#a80002,#a50001,#a20000,#9f0000,#9d0000,#9c0000,#9b0000)"></i>
<i style="left:50px;top:363px;width:592px;background:linear-gradient(90deg,#00c6ff,#00c5ff,#00c4ff,#00c4ff,#00c3ff,#00c2ff,#00c1ff,#00c0ff,#00bfff,#00beff,#00bdff,#00bbff,#00baff,#00b9ff,#00b8ff,#00b6ff,#00b5ff,#00b4ff,#0cb2ff,#1db1ff,#30afff,#44aeff,#58acff,#6eaaff,#85a8ff,#9da6ff,#b7a4ff,#d2a2ff,#eea0ff,#ff96f3,#ff84d9,#ff75c4,#ff68b1,#ff5da1,#ff5393,#ff4a86,#ff437b,#ff3c71,#ff3568,#ff3060,#ff2b58,#ff2652,#ff224b,#ff1e46,#fe1a40,#fd173b,#fc1436,#fa1132,#f70e2e,#f50b2a,#f20926,#ee0722,#eb051f,#e7031c,#e30219,#de0017,#da0014,#d60012,#d10010,#cc000e,#c8000c,#c3000a,#bf0009,#ba0007,#b60006,#b20005,#ae0004,#ab0003,#a70002,#a40001,#a10001,#9f0000,#9d0000,#9b0000,#9a0000)"></i>
<i style="left:51px;top:365px;width:592px;background:linear-gradient(90deg,#00c3ff,#00c2ff,#00c1ff,#00c0ff,#00bfff,#00beff,#00bdff,#00bcff,#00bbff,#00baff,#00b8ff,#00b7ff,#00b6ff,#00b5ff,#00b3ff,#00b2ff,#00b0ff,#00afff,#10adff,#21acff,#34aaff,#47a9ff,#5ca7ff,#72a5ff,#89a3ff,#a1a1ff,#ba9fff,#d59dff,#f19aff,#ff8ff0,#ff7ed7,#ff70c2,#ff63b0,#ff58a0,#ff4f92,#ff4785,#ff3f7a,#ff3871,#ff3268,#ff2d60,#ff2858,#ff2452,#ff1f4b,#ff1c46,#fe1840,#fd153b,#fc1237,#f90f32,#f70c2e,#f40a2a,#f10826,#ee0623,#ea041f,#e6021c,#e20119,#de0017,#d90014,#d50012,#d00010,#cc000e,#c7000c,#c3000b,#be0009,#ba0008,#b50006,#b10005,#ae0004,#aa0003,#a70002,#a30002,#a10001,#9e0000,#9d0000,#9b0000,#9a0000)"></i>
<i style="left:52px;top:367px;width:592px;background:linear-gradient(90deg,#00bfff,#00beff,#00bdff,#00bcff,#00bbff,#00baff,#00b9ff,#00b8ff,#00b7ff,#00b5ff,#00b4ff,#00b3ff,#00b2ff,#00b0ff,#00afff,#00adff,#00acff,#03aaff,#13a9ff,#25a7ff,#37a5ff,#4ba4ff,#60a2ff,#75a0ff,#8c9eff,#a49cff,#be99ff,#d897ff,#f595ff,#ff88ed,#ff78d5,#ff6ac0,#ff5eae,#ff549f,#ff4b91,#ff4385,#ff3c7a,#ff3570,#ff2f68,#ff2a60,#ff2658,#ff2152,#ff1d4c,#ff1a46,#fe1641,#fd133c,#fb1037,#f90d32,#f70b2e,#f4082a,#f10626,#ed0423,#ea0320,#e6011d,#e1001a,#dd0017,#d90015,#d40012,#d00010,#cb000e,#c6000c,#c2000b,#bd0009,#b90008,#b50007,#b10005,#ad0004,#a90003,#a60003,#a30002,#a00001,#9e0000,#9c0000,#9b0000,#9a0000)"></i>
<i style="left:52px;top:369px;width:584px;background:linear-gradient(90deg,#00bbff,#00baff,#00b9ff,#00b8ff,#00b7ff,#00b6ff,#00b5ff,#00b4ff,#00b3ff,#00b2ff,#00b0ff,#00afff,#00aeff,#00acff,#00abff,#00a9ff,#00a8ff,#04a6ff,#14a4ff,#26a3ff,#38a1ff,#4c9fff,#609dff,#769bff,#8d99ff,#a597ff,#be94ff,#d892ff,#f490ff,#ff83ee,#ff74d6,#ff67c1,#ff5baf,#ff51a0,#ff4892,#ff4086,#ff397b,#ff3371,#ff2d68,#ff2860,#ff2459,#ff1f53,#ff1b4c,#ff1847,#fe1541,#fd113c,#fb0f38,#f90c33,#f70a2f,#f4072b,#f10527,#ed0324,#e90220,#e6001d,#e1001a,#dd0018,#d90015,#d40013,#d00011,#cb000f,#c6000d,#c2000b,#bd000a,#b90008,#b50007,#b10006,#ad0005,#a90004,#a60003,#a30002,#a00001,#9e0001,#9c0000,#9b0000)"></i>
<i style="left:53px;top:371px;width:576px;background:linear-gradient(90deg,#00b8ff,#00b7ff,#00b6ff,#00b5ff,#00b4ff,#00b3ff,#00b1ff,#00b0ff,#00afff,#00aeff,#00acff,#00abff,#00a9ff,#00a8ff,#00a6ff,#00a5ff,#00a3ff,#08a2ff,#18a0ff,#299eff,#3c9cff,#4f9aff,#6498ff,#7a96ff,#9094ff,#a892ff,#c18fff,#dc8dff,#f78aff,#ff7deb,#ff6ed4,#ff61c0,#ff56ae,#ff4d9f,#ff4491,#ff3d85,#ff367b,#ff3071,#ff2b68,#ff2660,#ff2159,#ff1d53,#ff194d,#ff1647,#fe1342,#fd103d,#fb0d38,#f90a33,#f6082f,#f3062b,#f00427,#ed0224,#e90120,#e5001d,#e1001b,#dd0018,#d80015,#d40013,#cf0011,#ca000f,#c6000d,#c1000b,#bd000a,#b80009,#b40007,#b00006,#ac0005,#a90004,#a50003,#a20002,#a00001,#9e0001,#9c0000)"></i>
<i style="left:54px;top:373px;width:568px;background:linear-gradient(90deg,#00b4ff,#00b3ff,#00b2ff,#00b1ff,#00b0ff,#00afff,#00aeff,#00acff,#00abff,#00aaff,#00a8ff,#00a7ff,#00a5ff,#00a4ff,#00a2ff,#00a1ff,#009fff,#0b9dff,#1b9bff,#2d99ff,#3f98ff,#5395ff,#6893ff,#7d91ff,#948fff,#ac8dff,#c58aff,#df88ff,#fb85ff,#ff77e9,#ff68d2,#ff5cbe,#ff52ad,#ff499e,#ff4191,#ff3985,#ff337a,#ff2d71,#ff2868,#ff2360,#ff1f59,#ff1b53,#ff174d,#ff1447,#fe1142,#fd0e3d,#fb0b38,#f90933,#f6072f,#f3052b,#f00327,#ec0124,#e90021,#e5001e,#e0001b,#dc0018,#d80016,#d30013,#ce0011,#ca000f,#c5000d,#c1000c,#bc000a,#b80009,#b40007,#b00006,#ac0005,#a80004,#a50003,#a20002,#a00002,#9d0001)"></i>
<i style="left:55px;top:375px;width:560px;background:linear-gradient(90deg,#00b1ff,#00b0ff,#00afff,#00aeff,#00acff,#00abff,#00aaff,#00a8ff,#00a7ff,#00a6ff,#00a4ff,#00a3ff,#00a1ff,#00a0ff,#009eff,#009cff,#009bff,#0e99ff,#1f97ff,#3095ff,#4393ff,#5691ff,#6b8fff,#818cff,#978aff,#af88ff,#c885ff,#e282ff,#fe80ff,#ff71e6,#ff63d0,#ff58bc,#ff4eac,#ff459d,#ff3d90,#ff3684,#ff307a,#ff2a70,#ff2568,#ff2160,#ff1d59,#ff1953,#ff154d,#ff1247,#fe0f42,#fc0c3d,#fb0a38,#f80734,#f6052f,#f3032b,#ef0228,#ec0024,#e80021,#e4001e,#e0001b,#db0018,#d70016,#d20014,#ce0011,#c9000f,#c5000e,#c0000c,#bc000a,#b70009,#b30008,#af0006,#ab0005,#a80004,#a50003,#a20003,#9f0002)"></i>
<i style="left:55px;top:377px;width:560px;background:linear-gradient(90deg,#00aeff,#00acff,#00abff,#00aaff,#00a9ff,#00a8ff,#00a6ff,#00a5ff,#00a3ff,#00a2ff,#00a1ff,#009fff,#009dff,#009cff,#009aff,#0098ff,#0197ff,#1095ff,#2093ff,#3291ff,#448fff,#578cff,#6c8aff,#8188ff,#9886ff,#af83ff,#c880ff,#e27eff,#fd7bff,#ff6ce7,#ff5fd0,#ff54bd,#ff4aad,#ff429e,#ff3a91,#ff3485,#ff2e7b,#ff2871,#ff2369,#ff1f61,#ff1b5a,#ff1754,#ff144e,#ff1148,#fe0e43,#fc0b3e,#fb0839,#f80634,#f60430,#f3022c,#ef0128,#ec0025,#e80022,#e4001e,#e0001c,#dc0019,#d70016,#d20014,#ce0012,#c90010,#c5000e,#c0000c,#bc000b,#b70009,#b30008,#af0007,#ac0006,#a80005,#a50004,#a20003,#9f0002)"></i>
<i style="left:56px;top:379px;width:552px;background:linear-gradient(90deg,#00aaff,#00a9ff,#00a8ff,#00a7ff,#00a5ff,#00a4ff,#00a3ff,#00a1ff,#00a0ff,#009eff,#009dff,#009bff,#0099ff,#0098ff,#0096ff,#0094ff,#0492ff,#1390ff,#238eff,#358cff,#478aff,#5b88ff,#6f86ff,#8583ff,#9b81ff,#b37eff,#cb7bff,#e579ff,#ff75fe,#ff67e4,#ff5acf,#ff50bc,#ff46ab,#ff3e9d,#ff3790,#ff3085,#ff2b7a,#ff2571,#ff2169,#ff1c61,#ff195a,#ff1554,#ff124e,#ff0f48,#fe0c43,#fc093e,#fa0739,#f80535,#f50330,#f2012c,#ef0029,#eb0025,#e80022,#e4001f,#df001c,#db0019,#d70017,#d20014,#cd0012,#c90010,#c4000e,#c0000d,#bb000b,#b7000a,#b30008,#af0007,#ab0006,#a80005,#a50004,#a20003)"></i>
<i style="left:57px;top:381px;width:544px;background:linear-gradient(90deg,#00a7ff,#00a6ff,#00a4ff,#00a3ff,#00a2ff,#00a0ff,#009fff,#009dff,#009cff,#009aff,#0099ff,#0097ff,#0096ff,#0094ff,#0092ff,#0090ff,#078eff,#168cff,#278aff,#3888ff,#4b86ff,#5e84ff,#7381ff,#887fff,#9e7cff,#b679ff,#ce77ff,#e874ff,#ff6ffb,#ff61e2,#ff55cd,#ff4bba,#ff42aa,#ff3a9c,#ff338f,#ff2d84,#ff287a,#ff2371,#ff1e69,#ff1a61,#ff165a,#ff1354,#ff104e,#fe0d48,#fd0a43,#fc083e,#fa0539,#f80335,#f50130,#f2002d,#ef0029,#eb0025,#e70022,#e3001f,#df001c,#db0019,#d60017,#d20014,#cd0012,#c80010,#c4000f,#bf000d,#bb000b,#b7000a,#b30008,#af0007,#ab0006,#a80005,#a40004)"></i>
<i style="left:58px;top:383px;width:536px;background:linear-gradient(90deg,#00a4ff,#00a2ff,#00a1ff,#00a0ff,#009eff,#009dff,#009bff,#009aff,#0098ff,#0097ff,#0095ff,#0093ff,#0092ff,#0090ff,#008eff,#008cff,#0a8aff,#1a88ff,#2a86ff,#3c84ff,#4e81ff,#627fff,#767dff,#8b7aff,#a277ff,#b975ff,#d272ff,#eb6fff,#ff69f8,#ff5ce0,#ff51cb,#ff47b9,#ff3ea9,#ff379b,#ff308f,#ff2a84,#ff257a,#ff2071,#ff1c68,#ff1861,#ff145a,#ff1154,#ff0e4e,#fe0b48,#fd0843,#fc063e,#fa0439,#f70235,#f50031,#f2002d,#ee0029,#eb0025,#e70022,#e3001f,#df001c,#da001a,#d60017,#d10015,#cd0013,#c80011,#c3000f,#bf000d,#bb000b,#b6000a,#b20009,#ae0007,#ab0006,#a70005)"></i>
<i style="left:58px;top:385px;width:528px;background:linear-gradient(90deg,#00a0ff,#009fff,#009eff,#009cff,#009bff,#0099ff,#0098ff,#0096ff,#0095ff,#0093ff,#0092ff,#0090ff,#008eff,#008cff,#008aff,#0088ff,#0b86ff,#1b84ff,#2b82ff,#3d80ff,#4f7dff,#637bff,#7779ff,#8c76ff,#a273ff,#b970ff,#d26eff,#eb6bff,#ff65f8,#ff58e0,#ff4dcc,#ff44ba,#ff3caa,#ff349c,#ff2e90,#ff2885,#ff237b,#ff1e71,#ff1a69,#ff1662,#ff135b,#ff0f54,#ff0c4f,#fe0a49,#fd0744,#fc053f,#fa033a,#f80136,#f50031,#f2002d,#ee002a,#eb0026,#e70023,#e30020,#df001d,#da001a,#d60018,#d10015,#cd0013,#c80011,#c4000f,#bf000d,#bb000c,#b7000a,#b30009,#af0008,#ab0007)"></i>
<i style="left:59px;top:387px;width:528px;background:linear-gradient(90deg,#009dff,#009cff,#009aff,#0099ff,#0097ff,#0096ff,#0094ff,#0093ff,#0091ff,#0090ff,#008eff,#008cff,#008aff,#0088ff,#0086ff,#0084ff,#0e82ff,#1e80ff,#2f7eff,#407cff,#5379ff,#6677ff,#7a74ff,#8f72ff,#a56fff,#bc6cff,#d569ff,#ee66ff,#ff5ff6,#ff53de,#ff49ca,#ff40b8,#ff38a9,#ff319b,#ff2b8f,#ff2584,#ff207a,#ff1c71,#ff1869,#ff1462,#ff105b,#ff0d55,#ff0b4f,#fe0849,#fd0644,#fc033f,#fa013a,#f70036,#f50032,#f1002e,#ee002a,#ea0026,#e70023,#e30020,#de001d,#da001a,#d50018,#d10015,#cc0013,#c80011,#c3000f,#bf000e,#bb000c,#b6000b,#b20009,#ae0008,#ab0007)"></i>
<i style="left:60px;top:389px;width:520px;background:linear-gradient(90deg,#009aff,#0098ff,#0097ff,#0096ff,#0094ff,#0093ff,#0091ff,#008fff,#008eff,#008cff,#008aff,#0088ff,#0086ff,#0085ff,#0083ff,#0380ff,#127eff,#217cff,#327aff,#4377ff,#5675ff,#6973ff,#7d70ff,#926dff,#a86aff,#bf67ff,#d864ff,#f161ff,#ff5af3,#ff4edc,#ff44c8,#ff3cb7,#ff34a8,#ff2e9a,#ff288e,#ff2284,#ff1e7a,#ff1971,#ff1569,#ff1262,#ff0e5b,#ff0c55,#ff094f,#fe0649,#fd0444,#fc023f,#f9003a,#f70036,#f40032,#f1002e,#ee002a,#ea0027,#e60023,#e20020,#de001d,#da001b,#d50018,#d10016,#cc0014,#c80011,#c30010,#bf000e,#ba000c,#b6000b,#b20009,#ae0008)"></i>
<i style="left:61px;top:391px;width:512px;background:linear-gradient(90deg,#0097ff,#0095ff,#0094ff,#0092ff,#0091ff,#008fff,#008eff,#008cff,#008aff,#0088ff,#0087ff,#0085ff,#0083ff,#0081ff,#007fff,#067dff,#157aff,#2578ff,#3576ff,#4773ff,#5971ff,#6c6eff,#806cff,#9669ff,#ac66ff,#c363ff,#db60ff,#f45dff,#ff54f1,#ff49da,#ff40c7,#ff38b6,#ff31a7,#ff2a9a,#ff258e,#ff2083,#ff1b79,#ff1771,#ff1369,#ff1061,#ff0d5b,#ff0a55,#ff074f,#fe0549,#fd0344,#fb013f,#f9003b,#f70036,#f40032,#f1002e,#ee002a,#ea0027,#e60023,#e20020,#de001d,#d9001b,#d50018,#d00016,#cc0014,#c70012,#c30010,#be000e,#ba000d,#b6000b,#b2000a)"></i>
<i style="left:62px;top:393px;width:504px;background:linear-gradient(90deg,#0093ff,#0092ff,#0090ff,#008fff,#008dff,#008cff,#008aff,#0088ff,#0087ff,#0085ff,#0083ff,#0081ff,#007fff,#007dff,#007bff,#0979ff,#1877ff,#2874ff,#3872ff,#4a6fff,#5c6dff,#706aff,#8467ff,#9965ff,#af62ff,#c65fff,#de5bff,#f758ff,#ff4fee,#ff45d8,#ff3cc5,#ff34b5,#ff2da6,#ff2799,#ff228d,#ff1d83,#ff1879,#ff1471,#ff1169,#ff0e61,#ff0b5b,#ff0855,#ff054f,#fe0349,#fd0144,#fb003f,#f9003b,#f70036,#f40032,#f1002e,#ed002a,#ea0027,#e60024,#e20021,#dd001e,#d9001b,#d50018,#d00016,#cc0014,#c70012,#c30010,#be000e,#ba000d,#b6000b)"></i>
<i style="left:62px;top:395px;width:504px;background:linear-gradient(90deg,#0090ff,#008fff,#008dff,#008cff,#008aff,#0089ff,#0087ff,#0085ff,#0083ff,#0082ff,#0080ff,#007eff,#007cff,#007aff,#0078ff,#0a75ff,#1973ff,#2971ff,#396eff,#4b6cff,#5d69ff,#7066ff,#8464ff,#9961ff,#af5eff,#c65bff,#de57ff,#f654ff,#ff4bef,#ff42d9,#ff39c6,#ff31b5,#ff2ba7,#ff259a,#ff208e,#ff1b83,#ff177a,#ff1371,#ff0f69,#ff0c62,#ff095c,#ff0655,#ff0450,#fe024a,#fd0045,#fb0040,#f9003b,#f70037,#f40033,#f1002f,#ed002b,#ea0028,#e60024,#e20021,#de001e,#d9001c,#d50019,#d00017,#cc0014,#c70012,#c30011,#bf000f,#ba000d,#b6000c)"></i>
<i style="left:63px;top:397px;width:496px;background:linear-gradient(90deg,#008dff,#008cff,#008aff,#0089ff,#0087ff,#0085ff,#0084ff,#0082ff,#0080ff,#007eff,#007cff,#007aff,#0078ff,#0076ff,#0074ff,#0d72ff,#1c6fff,#2c6dff,#3d6aff,#4e68ff,#6065ff,#7362ff,#8760ff,#9c5dff,#b25aff,#c956ff,#e053ff,#f950ff,#ff47ec,#ff3dd7,#ff35c4,#ff2eb4,#ff27a6,#ff2299,#ff1d8d,#ff1883,#ff147a,#ff1071,#ff0d69,#ff0a62,#ff075c,#ff0555,#ff0250,#fe004a,#fd0045,#fb0040,#f9003c,#f70037,#f40033,#f1002f,#ed002b,#ea0028,#e60024,#e20021,#dd001e,#d9001c,#d50019,#d00017,#cc0015,#c70013,#c30011,#bf000f,#ba000d)"></i>
<i style="left:64px;top:399px;width:488px;background:linear-gradient(90deg,#008aff,#0089ff,#0087ff,#0085ff,#0084ff,#0082ff,#0080ff,#007eff,#007dff,#007bff,#0079ff,#0077ff,#0075ff,#0072ff,#0370ff,#106eff,#1f6cff,#2f69ff,#4067ff,#5164ff,#6361ff,#775eff,#8a5cff,#9f59ff,#b556ff,#cc52ff,#e34fff,#fc4cff,#ff42ea,#ff39d5,#ff31c3,#ff2ab3,#ff24a5,#ff1f98,#ff1a8d,#ff1683,#ff1279,#ff0e71,#ff0b69,#ff0862,#ff065c,#ff0355,#ff0150,#fe004a,#fd0045,#fb0040,#f9003c,#f60037,#f40033,#f0002f,#ed002b,#e90028,#e50025,#e10022,#dd001f,#d9001c,#d40019,#d00017,#cc0015,#c70013,#c30011,#bf000f)"></i>
<i style="left:64px;top:401px;width:480px;background:linear-gradient(90deg,#0087ff,#0086ff,#0084ff,#0082ff,#0081ff,#007fff,#007dff,#007bff,#0079ff,#0078ff,#0076ff,#0073ff,#0071ff,#006fff,#046dff,#126bff,#2168ff,#3066ff,#4163ff,#5260ff,#645eff,#775bff,#8b58ff,#a055ff,#b552ff,#cc4fff,#e34bff,#fc48ff,#ff3fea,#ff36d6,#ff2ec4,#ff28b4,#ff22a6,#ff1d99,#ff188e,#ff1483,#ff107a,#ff0d72,#ff096a,#ff0763,#ff045c,#ff0256,#ff0051,#fe004b,#fd0046,#fb0041,#f9003c,#f70038,#f40034,#f10030,#ed002c,#ea0029,#e60025,#e20022,#dd001f,#d9001d,#d5001a,#d00018,#cc0015,#c80013,#c30011)"></i>
<i style="left:65px;top:403px;width:472px;background:linear-gradient(90deg,#0084ff,#0083ff,#0081ff,#007fff,#007eff,#007cff,#007aff,#0078ff,#0076ff,#0074ff,#0072ff,#0070ff,#006eff,#006cff,#0769ff,#1567ff,#2465ff,#3362ff,#445fff,#555dff,#675aff,#7a57ff,#8e54ff,#a351ff,#b84eff,#cf4bff,#e647ff,#fe44ff,#ff3ae8,#ff32d4,#ff2bc2,#ff24b3,#ff1fa5,#ff1a98,#ff158d,#ff1183,#ff0e7a,#ff0a71,#ff086a,#ff0563,#ff025c,#ff0056,#ff0051,#fe004b,#fd0046,#fb0041,#f9003d,#f60038,#f40034,#f00030,#ed002c,#e90029,#e50025,#e10022,#dd001f,#d9001d,#d5001a,#d00018,#cc0016,#c80014)"></i>
<i style="left:66px;top:405px;width:472px;background:linear-gradient(90deg,#0081ff,#0080ff,#007eff,#007cff,#007aff,#0079ff,#0077ff,#0075ff,#0073ff,#0071ff,#006fff,#006dff,#006aff,#0068ff,#0a66ff,#1863ff,#2761ff,#365eff,#475cff,#5859ff,#6a56ff,#7d53ff,#9150ff,#a64dff,#bb4aff,#d147ff,#e943ff,#ff3ffd,#ff36e6,#ff2ed2,#ff27c1,#ff21b1,#ff1ca4,#ff1798,#ff138c,#ff0f83,#ff0c79,#ff0871,#ff066a,#ff0363,#ff015c,#ff0056,#ff0051,#fe004b,#fd0046,#fb0041,#f9003d,#f60038,#f30034,#f00030,#ed002c,#e90029,#e50026,#e10023,#dd0020,#d9001d,#d5001a,#d00018,#cc0016,#c80014)"></i>
<i style="left:66px;top:407px;width:464px;background:linear-gradient(90deg,#007eff,#007dff,#007bff,#0079ff,#0078ff,#0076ff,#0074ff,#0072ff,#0070ff,#006eff,#006cff,#006aff,#0067ff,#0065ff,#0b63ff,#1960ff,#285eff,#375bff,#4858ff,#5956ff,#6b53ff,#7e50ff,#914dff,#a64aff,#bb46ff,#d143ff,#e940ff,#ff3bfd,#ff33e7,#ff2bd3,#ff25c1,#ff1fb2,#ff1aa4,#ff1598,#ff118d,#ff0d83,#ff0a7a,#ff0772,#ff046a,#ff0263,#ff005d,#ff0057,#ff0051,#fe004c,#fd0047,#fb0042,#f9003d,#f60039,#f40035,#f00031,#ed002d,#ea002a,#e60026,#e20023,#de0020,#d9001e,#d5001b,#d10019,#cc0016)"></i>
<i style="left:67px;top:409px;width:456px;background:linear-gradient(90deg,#007bff,#007aff,#0078ff,#0076ff,#0074ff,#0073ff,#0071ff,#006fff,#006dff,#006bff,#0068ff,#0066ff,#0064ff,#0162ff,#0e5fff,#1c5dff,#2b5aff,#3a58ff,#4b55ff,#5c52ff,#6e4fff,#814cff,#9449ff,#a946ff,#be43ff,#d43fff,#eb3cff,#ff37fb,#ff2fe4,#ff28d1,#ff21c0,#ff1cb1,#ff17a4,#ff1298,#ff0e8d,#ff0b83,#ff087a,#ff0572,#ff026a,#ff0063,#ff005d,#ff0057,#ff0051,#fe004c,#fd0047,#fb0042,#f9003e,#f60039,#f30035,#f00031,#ed002d,#e9002a,#e60027,#e20023,#de0020,#d9001e,#d5001b,#d10019)"></i>
<i style="left:68px;top:411px;width:448px;background:linear-gradient(90deg,#0079ff,#0077ff,#0075ff,#0073ff,#0071ff,#006fff,#006eff,#006cff,#0069ff,#0067ff,#0065ff,#0063ff,#0061ff,#035eff,#105cff,#1f59ff,#2e57ff,#3d54ff,#4e51ff,#5f4eff,#714cff,#8448ff,#9745ff,#ac42ff,#c13fff,#d73bff,#ee38ff,#ff33f8,#ff2be2,#ff24cf,#ff1ebf,#ff19b0,#ff14a3,#ff1097,#ff0c8c,#ff0982,#ff067a,#ff0372,#ff016a,#ff0063,#ff005d,#ff0057,#ff0052,#fe004c,#fd0047,#fb0042,#f9003e,#f60039,#f30035,#f00031,#ed002e,#e9002a,#e50027,#e20024,#dd0021,#d9001e,#d5001b)"></i>
<i style="left:69px;top:413px;width:440px;background:linear-gradient(90deg,#0076ff,#0074ff,#0072ff,#0070ff,#006eff,#006cff,#006aff,#0068ff,#0066ff,#0064ff,#0062ff,#0060ff,#005dff,#065bff,#1358ff,#2256ff,#3153ff,#4051ff,#514eff,#624bff,#7448ff,#8745ff,#9a42ff,#af3eff,#c43bff,#da38ff,#f134ff,#ff2ef6,#ff27e0,#ff21ce,#ff1bbd,#ff16af,#ff11a2,#ff0d96,#ff0a8c,#ff0782,#ff0479,#ff0171,#ff006a,#ff0063,#ff005d,#ff0057,#ff0052,#fe004c,#fc0047,#fb0042,#f9003e,#f60039,#f30035,#f00031,#ed002e,#e9002a,#e50027,#e10024,#dd0021,#d9001e)"></i>
<i style="left:69px;top:415px;width:440px;background:linear-gradient(90deg,#0073ff,#0071ff,#006fff,#006eff,#006cff,#006aff,#0068ff,#0066ff,#0063ff,#0061ff,#005fff,#005dff,#005aff,#0758ff,#1455ff,#2353ff,#3250ff,#414dff,#524bff,#6348ff,#7545ff,#8742ff,#9b3eff,#af3bff,#c438ff,#da34ff,#f031ff,#ff2bf6,#ff24e1,#ff1ece,#ff18be,#ff14b0,#ff0fa3,#ff0b97,#ff088c,#ff0583,#ff027a,#ff0072,#ff006b,#ff0064,#ff005e,#ff0058,#ff0052,#fe004d,#fd0048,#fb0043,#f9003f,#f6003a,#f40036,#f00032,#ed002e,#ea002b,#e60028,#e20024,#de0022,#da001f)"></i>
<i style="left:70px;top:417px;width:432px;background:linear-gradient(90deg,#0070ff,#006eff,#006cff,#006bff,#0069ff,#0067ff,#0065ff,#0063ff,#0060ff,#005eff,#005cff,#005aff,#0057ff,#0a55ff,#1752ff,#2650ff,#354dff,#444aff,#5547ff,#6644ff,#7841ff,#8a3eff,#9d3bff,#b238ff,#c734ff,#dc31ff,#f32dff,#ff27f4,#ff21df,#ff1bcd,#ff15bd,#ff11af,#ff0da2,#ff0996,#ff068c,#ff0382,#ff017a,#ff0072,#ff006b,#ff0064,#ff005e,#ff0058,#ff0052,#fe004d,#fc0048,#fb0043,#f9003f,#f6003a,#f30036,#f00032,#ed002f,#ea002b,#e60028,#e20025,#de0022)"></i>
<i style="left:71px;top:419px;width:424px;background:linear-gradient(90deg,#006dff,#006bff,#006aff,#0068ff,#0066ff,#0064ff,#0062ff,#0060ff,#005dff,#005bff,#0059ff,#0056ff,#0054ff,#0d51ff,#1a4fff,#284cff,#384aff,#4747ff,#5844ff,#6941ff,#7b3eff,#8d3bff,#a037ff,#b434ff,#c931ff,#df2dff,#f629ff,#ff23f1,#ff1ddd,#ff17cb,#ff13bc,#ff0eae,#ff0aa1,#ff0796,#ff048b,#ff0182,#ff0079,#ff0072,#ff006a,#ff0064,#ff005e,#ff0058,#ff0052,#fe004d,#fc0048,#fb0043,#f9003f,#f6003a,#f30036,#f00032,#ed002f,#ea002b,#e60028,#e20025)"></i>
<i style="left:72px;top:421px;width:416px;background:linear-gradient(90deg,#006aff,#0069ff,#0067ff,#0065ff,#0063ff,#0061ff,#005fff,#005dff,#005aff,#0058ff,#0056ff,#0053ff,#0351ff,#0f4eff,#1d4cff,#2b49ff,#3a46ff,#4a43ff,#5b41ff,#6c3eff,#7d3aff,#9037ff,#a334ff,#b731ff,#cc2dff,#e229ff,#f826ff,#ff20ef,#ff1adb,#ff14ca,#ff10ba,#ff0cad,#ff08a0,#ff0595,#ff028b,#ff0082,#ff0079,#ff0071,#ff006a,#ff0064,#ff005e,#ff0058,#ff0052,#fe004d,#fc0048,#fb0043,#f9003f,#f6003b,#f30037,#f00033,#ed002f,#ea002b,#e60028)"></i>
<i style="left:73px;top:423px;width:408px;background:linear-gradient(90deg,#0068ff,#0066ff,#0064ff,#0062ff,#0060ff,#005eff,#005cff,#005aff,#0057ff,#0055ff,#0053ff,#0050ff,#054eff,#124bff,#2049ff,#2e46ff,#3d43ff,#4d40ff,#5d3dff,#6e3aff,#8037ff,#9334ff,#a631ff,#ba2dff,#cf2aff,#e426ff,#fb22ff,#ff1ced,#ff16da,#ff11c8,#ff0db9,#ff09ac,#ff069f,#ff0394,#ff008a,#ff0081,#ff0079,#ff0071,#ff006a,#ff0064,#ff005d,#ff0058,#ff0052,#fe004d,#fc0048,#fb0044,#f9003f,#f6003b,#f30037,#f00033,#ed002f,#ea002c)"></i>
<i style="left:74px;top:425px;width:408px;background:linear-gradient(90deg,#0065ff,#0063ff,#0061ff,#005fff,#005dff,#005bff,#0059ff,#0057ff,#0054ff,#0052ff,#0050ff,#004dff,#084bff,#1548ff,#2345ff,#3143ff,#4040ff,#503dff,#603aff,#7137ff,#8334ff,#9531ff,#a92dff,#bd2aff,#d126ff,#e722ff,#fd1fff,#ff19eb,#ff13d8,#ff0fc7,#ff0ab8,#ff07ab,#ff039f,#ff0194,#ff008a,#ff0081,#ff0079,#ff0071,#ff006a,#ff0063,#ff005d,#ff0058,#ff0052,#fe004d,#fc0048,#fb0044,#f8003f,#f6003b,#f30037,#f00033,#ed002f,#ea002c)"></i>
<i style="left:75px;top:427px;width:400px;background:linear-gradient(90deg,#0062ff,#0060ff,#005eff,#005cff,#005aff,#0058ff,#0056ff,#0054ff,#0051ff,#004fff,#004dff,#004aff,#0b48ff,#1845ff,#2542ff,#3440ff,#433dff,#533aff,#6337ff,#7434ff,#8630ff,#982dff,#ab2aff,#bf26ff,#d423ff,#e91fff,#ff1bfe,#ff15e9,#ff10d6,#ff0cc6,#ff08b7,#ff04aa,#ff019e,#ff0093,#ff0089,#ff0080,#ff0078,#ff0071,#ff006a,#ff0063,#ff005d,#ff0058,#ff0053,#fe004d,#fc0049,#fb0044,#f8003f,#f6003b,#f30037,#f00033,#ed0030)"></i>
<i style="left:76px;top:429px;width:392px;background:linear-gradient(90deg,#005fff,#005eff,#005cff,#0059ff,#0057ff,#0055ff,#0053ff,#0051ff,#004eff,#004cff,#004aff,#0147ff,#0d45ff,#1a42ff,#283fff,#373cff,#463aff,#5537ff,#6634ff,#7730ff,#892dff,#9b2aff,#ae27ff,#c223ff,#d71fff,#ec1cff,#ff18fc,#ff12e7,#ff0dd5,#ff09c4,#ff05b6,#ff02a9,#ff009d,#ff0093,#ff0089,#ff0080,#ff0078,#ff0071,#ff006a,#ff0063,#ff005d,#ff0058,#ff0053,#fe004d,#fc0049,#fb0044,#f80040,#f6003b,#f30037,#f00033)"></i>
<i style="left:76px;top:431px;width:384px;background:linear-gradient(90deg,#005dff,#005bff,#0059ff,#0057ff,#0055ff,#0053ff,#0051ff,#004eff,#004cff,#004aff,#0047ff,#0245ff,#0e42ff,#1b3fff,#293dff,#383aff,#4737ff,#5634ff,#6731ff,#772eff,#892aff,#9b27ff,#ae24ff,#c220ff,#d61dff,#ec19ff,#ff15fc,#ff10e7,#ff0bd5,#ff07c5,#ff03b7,#ff00aa,#ff009e,#ff0093,#ff008a,#ff0081,#ff0079,#ff0071,#ff006a,#ff0064,#ff005e,#ff0059,#ff0053,#fe004e,#fc0049,#fb0045,#f90040,#f6003c,#f40038)"></i>
<i style="left:77px;top:433px;width:376px;background:linear-gradient(90deg,#005aff,#0058ff,#0056ff,#0054ff,#0052ff,#0050ff,#004eff,#004bff,#0049ff,#0047ff,#0044ff,#0542ff,#113fff,#1e3cff,#2c3aff,#3a37ff,#4934ff,#5931ff,#692eff,#7a2bff,#8c27ff,#9e24ff,#b121ff,#c51dff,#d919ff,#ee16ff,#ff11fa,#ff0de5,#ff08d4,#ff04c4,#ff01b5,#ff00a9,#ff009d,#ff0093,#ff0089,#ff0080,#ff0078,#ff0071,#ff006a,#ff0064,#ff005e,#ff0059,#ff0053,#fe004e,#fc0049,#fb0045,#f90040,#f6003c)"></i>
<i style="left:79px;top:435px;width:368px;background:linear-gradient(90deg,#0057ff,#0055ff,#0053ff,#0051ff,#004fff,#004dff,#004bff,#0048ff,#0046ff,#0043ff,#0041ff,#093eff,#153cff,#2339ff,#3036ff,#3f33ff,#4e30ff,#5e2dff,#6e2aff,#7f27ff,#9124ff,#a320ff,#b61dff,#ca19ff,#de16ff,#f312ff,#ff0ef5,#ff09e1,#ff05d0,#ff02c1,#ff00b3,#ff00a6,#ff009b,#ff0091,#ff0088,#ff007f,#ff0077,#ff0070,#ff0069,#ff0063,#ff005d,#ff0058,#fe0053,#fe004e,#fc0049,#fb0044,#f80040)"></i>
<i style="left:80px;top:437px;width:368px;background:linear-gradient(90deg,#0055ff,#0053ff,#0051ff,#004fff,#004cff,#004aff,#0048ff,#0046ff,#0043ff,#0041ff,#003eff,#0b3cff,#1839ff,#2536ff,#3333ff,#4230ff,#512dff,#602aff,#7127ff,#8224ff,#9321ff,#a61dff,#b91aff,#cc16ff,#e113ff,#f60fff,#ff0bf3,#ff06df,#ff03ce,#ff00bf,#ff00b2,#ff00a6,#ff009b,#ff0090,#ff0087,#ff007f,#ff0077,#ff0070,#ff0069,#ff0063,#ff005d,#ff0058,#fe0053,#fe004e,#fc0049,#fb0044,#f90040)"></i>
<i style="left:81px;top:439px;width:360px;background:linear-gradient(90deg,#0052ff,#0050ff,#004eff,#004cff,#004aff,#0047ff,#0045ff,#0043ff,#0040ff,#003eff,#023bff,#0e39ff,#1b36ff,#2833ff,#3630ff,#442dff,#532bff,#6327ff,#7324ff,#8421ff,#961eff,#a81aff,#bb17ff,#cf13ff,#e310ff,#f80cff,#ff08f0,#ff04de,#ff00cd,#ff00be,#ff00b1,#ff00a5,#ff009a,#ff0090,#ff0087,#ff007e,#ff0077,#ff0070,#ff0069,#ff0063,#ff005d,#ff0058,#fe0053,#fe004e,#fc0049,#fb0045)"></i>
<i style="left:82px;top:441px;width:352px;background:linear-gradient(90deg,#0050ff,#004eff,#004bff,#0049ff,#0047ff,#0045ff,#0042ff,#0040ff,#003eff,#003bff,#0539ff,#1136ff,#1d33ff,#2b30ff,#392eff,#472bff,#5628ff,#6625ff,#7621ff,#871eff,#991bff,#ab17ff,#be14ff,#d110ff,#e60dff,#fb09ff,#ff05ee,#ff01dc,#ff00cc,#ff00bd,#ff00b0,#ff00a4,#ff0099,#ff008f,#ff0086,#ff007e,#ff0077,#ff006f,#ff0069,#ff0063,#ff005d,#ff0058,#fe0053,#fe004e,#fc0049)"></i>
<i style="left:83px;top:443px;width:344px;background:linear-gradient(90deg,#004dff,#004bff,#0049ff,#0047ff,#0044ff,#0042ff,#0040ff,#003dff,#003bff,#0038ff,#0736ff,#1333ff,#2030ff,#2d2eff,#3b2bff,#4a28ff,#5925ff,#6822ff,#791eff,#8a1bff,#9b18ff,#ad14ff,#c011ff,#d40dff,#e80aff,#fd06ff,#ff02ec,#ff00da,#ff00ca,#ff00bc,#ff00af,#ff00a3,#ff0099,#ff008f,#ff0086,#ff007e,#ff0076,#ff006f,#ff0069,#ff0063,#ff005d,#ff0058,#ff0053,#fe004e)"></i>
<i style="left:84px;top:445px;width:336px;background:linear-gradient(90deg,#004bff,#0049ff,#0046ff,#0044ff,#0042ff,#0040ff,#003dff,#003bff,#0038ff,#0036ff,#0a33ff,#1630ff,#222eff,#302bff,#3e28ff,#4c25ff,#5b22ff,#6b1fff,#7b1cff,#8c18ff,#9e15ff,#b012ff,#c30eff,#d60aff,#ea07ff,#ff03ff,#ff00ea,#ff00d9,#ff00c9,#ff00bb,#ff00ae,#ff00a2,#ff0098,#ff008e,#ff0086,#ff007d,#ff0076,#ff006f,#ff0069,#ff0063,#ff005d,#ff0058,#ff0053)"></i>
<i style="left:85px;top:447px;width:336px;background:linear-gradient(90deg,#0048ff,#0046ff,#0044ff,#0042ff,#003fff,#003dff,#003bff,#0038ff,#0036ff,#0133ff,#0c30ff,#182eff,#252bff,#3328ff,#4025ff,#4f22ff,#5e1fff,#6e1cff,#7e19ff,#8f15ff,#a012ff,#b20fff,#c50bff,#d908ff,#ed04ff,#ff00fc,#ff00e9,#ff00d7,#ff00c8,#ff00ba,#ff00ad,#ff00a2,#ff0097,#ff008e,#ff0085,#ff007d,#ff0076,#ff006f,#ff0069,#ff0063,#ff005d,#ff0058,#ff0053)"></i>
<i style="left:86px;top:449px;width:328px;background:linear-gradient(90deg,#0046ff,#0043ff,#0041ff,#003fff,#003dff,#003aff,#0038ff,#0035ff,#0033ff,#0330ff,#0f2eff,#1b2bff,#2828ff,#3525ff,#4322ff,#521fff,#611cff,#7019ff,#8116ff,#9113ff,#a30fff,#b50cff,#c808ff,#db05ff,#ef01ff,#ff00fa,#ff00e7,#ff00d6,#ff00c6,#ff00b9,#ff00ac,#ff00a1,#ff0097,#ff008d,#ff0085,#ff007d,#ff0076,#ff006f,#ff0068,#ff0063,#ff005d,#ff0058)"></i>
<i style="left:88px;top:451px;width:320px;background:linear-gradient(90deg,#0043ff,#0041ff,#003eff,#003cff,#003aff,#0037ff,#0035ff,#0033ff,#0030ff,#072dff,#132bff,#1f28ff,#2c25ff,#3922ff,#471fff,#561cff,#6519ff,#7516ff,#8513ff,#9610ff,#a80cff,#ba09ff,#cc05ff,#e002ff,#f400ff,#ff00f5,#ff00e3,#ff00d2,#ff00c3,#ff00b6,#ff00aa,#ff009f,#ff0095,#ff008c,#ff0083,#ff007c,#ff0074,#ff006e,#ff0068,#ff0062,#ff005c)"></i>
<i style="left:89px;top:453px;width:312px;background:linear-gradient(90deg,#0040ff,#003eff,#003cff,#003aff,#0037ff,#0035ff,#0033ff,#0030ff,#002dff,#092bff,#1528ff,#2125ff,#2e23ff,#3c20ff,#4a1dff,#591aff,#6817ff,#7713ff,#8810ff,#990dff,#aa09ff,#bc06ff,#cf03ff,#e200ff,#f600ff,#ff00f3,#ff00e1,#ff00d1,#ff00c2,#ff00b5,#ff00a9,#ff009e,#ff0094,#ff008b,#ff0083,#ff007b,#ff0074,#ff006e,#ff0067,#ff0062)"></i>
<i style="left:90px;top:455px;width:304px;background:linear-gradient(90deg,#003eff,#003cff,#003aff,#0037ff,#0035ff,#0032ff,#0030ff,#002dff,#012bff,#0c28ff,#1826ff,#2423ff,#3120ff,#3f1dff,#4d1aff,#5b17ff,#6a14ff,#7a11ff,#8a0dff,#9b0aff,#ac07ff,#be03ff,#d100ff,#e500ff,#f900ff,#ff00f1,#ff00df,#ff00cf,#ff00c1,#ff00b4,#ff00a8,#ff009e,#ff0094,#ff008b,#ff0083,#ff007b,#ff0074,#ff006d,#ff0067)"></i>
<i style="left:91px;top:457px;width:296px;background:linear-gradient(90deg,#003cff,#0039ff,#0037ff,#0035ff,#0032ff,#0030ff,#002dff,#002bff,#0328ff,#0e26ff,#1a23ff,#2720ff,#341dff,#411aff,#4f17ff,#5e14ff,#6d11ff,#7c0eff,#8d0bff,#9d08ff,#af04ff,#c101ff,#d400ff,#e700ff,#fb00ff,#ff00ef,#ff00de,#ff00ce,#ff00c0,#ff00b3,#ff00a8,#ff009d,#ff0093,#ff008b,#ff0082,#ff007b,#ff0074,#ff006d)"></i>
<i style="left:92px;top:459px;width:296px;background:linear-gradient(90deg,#0039ff,#0037ff,#0035ff,#0032ff,#0030ff,#002eff,#002bff,#0028ff,#0526ff,#1123ff,#1d20ff,#291eff,#361bff,#4418ff,#5215ff,#6012ff,#6f0fff,#7f0cff,#8f08ff,#a005ff,#b102ff,#c300ff,#d600ff,#e900ff,#fd00ff,#ff00ed,#ff00dc,#ff00cd,#ff00bf,#ff00b2,#ff00a7,#ff009c,#ff0093,#ff008a,#ff0082,#ff007b,#ff0074,#ff006d)"></i>
<i style="left:93px;top:461px;width:288px;background:linear-gradient(90deg,#0037ff,#0035ff,#0032ff,#0030ff,#002eff,#002bff,#0029ff,#0026ff,#0823ff,#1321ff,#1f1eff,#2c1bff,#3918ff,#4615ff,#5412ff,#630fff,#720cff,#8109ff,#9206ff,#a203ff,#b400ff,#c600ff,#d800ff,#eb00ff,#ff00ff,#ff00ec,#ff00db,#ff00cb,#ff00be,#ff00b1,#ff00a6,#ff009c,#ff0092,#ff008a,#ff0082,#ff007a,#ff0073)"></i>
<i style="left:94px;top:463px;width:280px;background:linear-gradient(90deg,#0035ff,#0032ff,#0030ff,#002eff,#002bff,#0029ff,#0026ff,#0024ff,#0a21ff,#151eff,#211bff,#2e19ff,#3b16ff,#4913ff,#5710ff,#650dff,#740aff,#8407ff,#9403ff,#a500ff,#b600ff,#c800ff,#db00ff,#ee00ff,#ff00fc,#ff00ea,#ff00d9,#ff00ca,#ff00bd,#ff00b0,#ff00a5,#ff009b,#ff0092,#ff0089,#ff0081,#ff007a)"></i>
<i style="left:96px;top:465px;width:272px;background:linear-gradient(90deg,#0032ff,#0030ff,#002dff,#002bff,#0028ff,#0026ff,#0023ff,#0321ff,#0e1eff,#191bff,#2519ff,#3216ff,#3f13ff,#4d10ff,#5b0dff,#6a0aff,#7907ff,#8804ff,#9901ff,#a900ff,#bb00ff,#cd00ff,#df00ff,#f200ff,#ff00f8,#ff00e6,#ff00d6,#ff00c7,#ff00ba,#ff00ae,#ff00a3,#ff0099,#ff0090,#ff0088,#ff0080)"></i>
<i style="left:97px;top:467px;width:264px;background:linear-gradient(90deg,#0030ff,#002dff,#002bff,#0029ff,#0026ff,#0024ff,#0021ff,#051eff,#101cff,#1c19ff,#2816ff,#3513ff,#4211ff,#4f0eff,#5d0bff,#6c08ff,#7b04ff,#8b01ff,#9b00ff,#ac00ff,#bd00ff,#cf00ff,#e100ff,#f500ff,#ff00f6,#ff00e4,#ff00d4,#ff00c6,#ff00b9,#ff00ad,#ff00a3,#ff0099,#ff0090,#ff0087)"></i>
<i style="left:98px;top:469px;width:256px;background:linear-gradient(90deg,#002dff,#002bff,#0029ff,#0026ff,#0024ff,#0021ff,#001fff,#081cff,#1319ff,#1e17ff,#2a14ff,#3711ff,#440eff,#520bff,#6008ff,#6e05ff,#7e02ff,#8d00ff,#9d00ff,#ae00ff,#bf00ff,#d100ff,#e400ff,#f700ff,#ff00f4,#ff00e2,#ff00d3,#ff00c5,#ff00b8,#ff00ac,#ff00a2,#ff0098,#ff008f)"></i>
<i style="left:99px;top:471px;width:248px;background:linear-gradient(90deg,#002bff,#0029ff,#0026ff,#0024ff,#0022ff,#001fff,#001cff,#0a1aff,#1517ff,#2114ff,#2d12ff,#390fff,#470cff,#5409ff,#6206ff,#7103ff,#8000ff,#8f00ff,#a000ff,#b000ff,#c200ff,#d300ff,#e600ff,#f900ff,#ff00f2,#ff00e1,#ff00d1,#ff00c4,#ff00b7,#ff00ac,#ff00a1,#ff0098)"></i>
<i style="left:100px;top:473px;width:248px;background:linear-gradient(90deg,#0029ff,#0027ff,#0024ff,#0022ff,#001fff,#001dff,#021aff,#0c17ff,#1715ff,#2312ff,#2f0fff,#3c0cff,#490aff,#5707ff,#6504ff,#7301ff,#8200ff,#9200ff,#a200ff,#b300ff,#c400ff,#d600ff,#e800ff,#fb00ff,#ff00f0,#ff00df,#ff00d0,#ff00c3,#ff00b6,#ff00ab,#ff00a1,#ff0097)"></i>
<i style="left:101px;top:475px;width:240px;background:linear-gradient(90deg,#0027ff,#0024ff,#0022ff,#001fff,#001dff,#001aff,#0418ff,#0e15ff,#1a12ff,#2510ff,#320dff,#3e0aff,#4b07ff,#5904ff,#6701ff,#7600ff,#8500ff,#9400ff,#a400ff,#b500ff,#c600ff,#d800ff,#ea00ff,#fd00ff,#ff00ee,#ff00de,#ff00cf,#ff00c1,#ff00b5,#ff00aa,#ff00a0)"></i>
<i style="left:103px;top:477px;width:232px;background:linear-gradient(90deg,#0024ff,#0022ff,#001fff,#001dff,#001aff,#0018ff,#0715ff,#1213ff,#1d10ff,#290dff,#350aff,#4208ff,#4f05ff,#5d02ff,#6b00ff,#7a00ff,#8900ff,#9800ff,#a900ff,#b900ff,#ca00ff,#dc00ff,#ef00ff,#ff00fc,#ff00ea,#ff00da,#ff00cc,#ff00bf,#ff00b3,#ff00a8)"></i>
<i style="left:104px;top:479px;width:224px;background:linear-gradient(90deg,#0022ff,#0020ff,#001dff,#001bff,#0018ff,#0016ff,#0a13ff,#1410ff,#200eff,#2c0bff,#3808ff,#4505ff,#5203ff,#5f00ff,#6e00ff,#7c00ff,#8b00ff,#9b00ff,#ab00ff,#bc00ff,#cd00ff,#de00ff,#f100ff,#ff00fa,#ff00e9,#ff00d9,#ff00cb,#ff00be,#ff00b2)"></i>
<i style="left:105px;top:481px;width:216px;background:linear-gradient(90deg,#0020ff,#001dff,#001bff,#0019ff,#0016ff,#0213ff,#0c11ff,#170eff,#220cff,#2e09ff,#3a06ff,#4703ff,#5401ff,#6200ff,#7000ff,#7e00ff,#8e00ff,#9d00ff,#ad00ff,#be00ff,#cf00ff,#e100ff,#f300ff,#ff00f8,#ff00e7,#ff00d7,#ff00c9,#ff00bd)"></i>
<i style="left:106px;top:483px;width:208px;background:linear-gradient(90deg,#001eff,#001bff,#0019ff,#0016ff,#0014ff,#0411ff,#0e0fff,#190cff,#2409ff,#3007ff,#3d04ff,#4901ff,#5600ff,#6400ff,#7200ff,#8100ff,#9000ff,#9f00ff,#af00ff,#c000ff,#d100ff,#e300ff,#f500ff,#ff00f6,#ff00e5,#ff00d6,#ff00c8)"></i>
<i style="left:107px;top:485px;width:208px;background:linear-gradient(90deg,#001cff,#0019ff,#0017ff,#0014ff,#0012ff,#060fff,#100dff,#1b0aff,#2707ff,#3305ff,#3f02ff,#4c00ff,#5900ff,#6600ff,#7500ff,#8300ff,#9200ff,#a200ff,#b200ff,#c200ff,#d300ff,#e500ff,#f700ff,#ff00f4,#ff00e4,#ff00d5,#ff00c7)"></i>
<i style="left:108px;top:487px;width:200px;background:linear-gradient(90deg,#001aff,#0017ff,#0015ff,#0012ff,#0010ff,#080dff,#120aff,#1d08ff,#2905ff,#3503ff,#4100ff,#4e00ff,#5b00ff,#6900ff,#7700ff,#8500ff,#9400ff,#a400ff,#b400ff,#c400ff,#d500ff,#e700ff,#f900ff,#ff00f3,#ff00e2,#ff00d3)"></i>
<i style="left:110px;top:489px;width:192px;background:linear-gradient(90deg,#0017ff,#0015ff,#0012ff,#0010ff,#020dff,#0b0bff,#1608ff,#2105ff,#2d03ff,#3900ff,#4500ff,#5200ff,#5f00ff,#6d00ff,#7b00ff,#8900ff,#9800ff,#a800ff,#b800ff,#c900ff,#da00ff,#eb00ff,#fe00ff,#ff00ef,#ff00df)"></i>
<i style="left:111px;top:491px;width:184px;background:linear-gradient(90deg,#0015ff,#0013ff,#0010ff,#000eff,#040bff,#0e09ff,#1806ff,#2303ff,#2f01ff,#3b00ff,#4700ff,#5400ff,#6100ff,#6f00ff,#7d00ff,#8c00ff,#9b00ff,#aa00ff,#ba00ff,#cb00ff,#dc00ff,#ed00ff,#ff00fe,#ff00ed)"></i>
<i style="left:112px;top:493px;width:176px;background:linear-gradient(90deg,#0013ff,#0011ff,#000eff,#000cff,#0609ff,#1007ff,#1a04ff,#2602ff,#3100ff,#3d00ff,#4a00ff,#5600ff,#6400ff,#7100ff,#7f00ff,#8e00ff,#9d00ff,#ac00ff,#bc00ff,#cd00ff,#de00ff,#ef00ff,#ff00fc)"></i>
<i style="left:114px;top:495px;width:168px;background:linear-gradient(90deg,#0011ff,#000eff,#000cff,#0009ff,#0907ff,#1304ff,#1e02ff,#2900ff,#3500ff,#4100ff,#4d00ff,#5a00ff,#6800ff,#7500ff,#8300ff,#9200ff,#a100ff,#b100ff,#c100ff,#d100ff,#e200ff,#f400ff)"></i>
<i style="left:115px;top:497px;width:160px;background:linear-gradient(90deg,#000fff,#000cff,#000aff,#0207ff,#0b05ff,#1602ff,#2000ff,#2c00ff,#3700ff,#4300ff,#5000ff,#5c00ff,#6a00ff,#7700ff,#8600ff,#9400ff,#a300ff,#b300ff,#c300ff,#d300ff,#e400ff)"></i>
<i style="left:116px;top:499px;width:160px;background:linear-gradient(90deg,#000dff,#000aff,#0008ff,#0406ff,#0d03ff,#1801ff,#2200ff,#2e00ff,#3900ff,#4500ff,#5200ff,#5f00ff,#6c00ff,#7a00ff,#8800ff,#9600ff,#a500ff,#b500ff,#c500ff,#d500ff,#e600ff)"></i>
<i style="left:118px;top:501px;width:152px;background:linear-gradient(90deg,#000bff,#0008ff,#0006ff,#0703ff,#1101ff,#1b00ff,#2600ff,#3100ff,#3d00ff,#4900ff,#5600ff,#6300ff,#7000ff,#7e00ff,#8c00ff,#9a00ff,#a900ff,#b900ff,#c900ff,#d900ff)"></i>
<i style="left:119px;top:503px;width:144px;background:linear-gradient(90deg,#0009ff,#0006ff,#0004ff,#0902ff,#1300ff,#1d00ff,#2800ff,#3400ff,#3f00ff,#4b00ff,#5800ff,#6500ff,#7200ff,#8000ff,#8e00ff,#9c00ff,#ab00ff,#bb00ff,#cb00ff)"></i>
<i style="left:121px;top:505px;width:136px;background:linear-gradient(90deg,#0007ff,#0004ff,#0302ff,#0c00ff,#1600ff,#2100ff,#2c00ff,#3700ff,#4300ff,#4f00ff,#5c00ff,#6900ff,#7600ff,#8400ff,#9200ff,#a000ff,#af00ff,#bf00ff)"></i>
<i style="left:122px;top:507px;width:128px;background:linear-gradient(90deg,#0005ff,#0002ff,#0500ff,#0e00ff,#1800ff,#2300ff,#2e00ff,#3900ff,#4500ff,#5100ff,#5e00ff,#6b00ff,#7800ff,#8600ff,#9400ff,#a300ff,#b200ff)"></i>
<i style="left:123px;top:509px;width:120px;background:linear-gradient(90deg,#0003ff,#0001ff,#0700ff,#1000ff,#1b00ff,#2500ff,#3000ff,#3c00ff,#4700ff,#5300ff,#6000ff,#6d00ff,#7a00ff,#8800ff,#9600ff,#a500ff)"></i>
<i style="left:124px;top:511px;width:112px;background:linear-gradient(90deg,#0001ff,#0000ff,#0900ff,#1200ff,#1d00ff,#2700ff,#3200ff,#3e00ff,#4900ff,#5600ff,#6200ff,#6f00ff,#7c00ff,#8a00ff,#9800ff)"></i>
<i style="left:125px;top:513px;width:112px;background:linear-gradient(90deg,#0000ff,#0200ff,#0b00ff,#1400ff,#1f00ff,#2900ff,#3400ff,#4000ff,#4c00ff,#5800ff,#6400ff,#7100ff,#7e00ff,#8c00ff,#9a00ff)"></i>
<i style="left:126px;top:515px;width:104px;background:linear-gradient(90deg,#0000ff,#0300ff,#0d00ff,#1700ff,#2100ff,#2c00ff,#3700ff,#4200ff,#4e00ff,#5a00ff,#6600ff,#7300ff,#8100ff,#8e00ff)"></i>
<i style="left:127px;top:517px;width:96px;background:linear-gradient(90deg,#0000ff,#0500ff,#0f00ff,#1900ff,#2300ff,#2e00ff,#3900ff,#4400ff,#5000ff,#5c00ff,#6800ff,#7500ff,#8300ff)"></i>
<i style="left:128px;top:519px;width:88px;background:linear-gradient(90deg,#0000ff,#0700ff,#1100ff,#1b00ff,#2500ff,#3000ff,#3b00ff,#4600ff,#5200ff,#5e00ff,#6b00ff,#7700ff)"></i>
<i style="left:129px;top:521px;width:80px;background:linear-gradient(90deg,#0100ff,#0900ff,#1300ff,#1d00ff,#2700ff,#3200ff,#3d00ff,#4800ff,#5400ff,#6000ff,#6d00ff)"></i>
<i style="left:131px;top:523px;width:72px;background:linear-gradient(90deg,#0300ff,#0c00ff,#1600ff,#2000ff,#2a00ff,#3500ff,#4000ff,#4c00ff,#5800ff,#6400ff)"></i>
<i style="left:132px;top:525px;width:72px;background:linear-gradient(90deg,#0500ff,#0e00ff,#1800ff,#2200ff,#2d00ff,#3700ff,#4200ff,#4e00ff,#5a00ff,#6600ff)"></i>
<i style="left:134px;top:527px;width:64px;background:linear-gradient(90deg,#0800ff,#1200ff,#1b00ff,#2500ff,#3000ff,#3b00ff,#4600ff,#5100ff,#5d00ff)"></i>
<i style="left:135px;top:529px;width:56px;background:linear-gradient(90deg,#0a00ff,#1400ff,#1d00ff,#2700ff,#3200ff,#3d00ff,#4800ff,#5300ff)"></i>
<i style="left:137px;top:531px;width:48px;background:linear-gradient(90deg,#0d00ff,#1700ff,#2100ff,#2b00ff,#3500ff,#4000ff,#4b00ff)"></i>
<i style="left:140px;top:533px;width:40px;background:linear-gradient(90deg,#1200ff,#1b00ff,#2500ff,#2f00ff,#3a00ff,#4500ff)"></i>
<i style="left:142px;top:535px;width:32px;background:linear-gradient(90deg,#1500ff,#1e00ff,#2800ff,#3300ff,#3d00ff)"></i>
<i style="left:148px;top:537px;width:24px;background:linear-gradient(90deg,#1d00ff,#2700ff,#3100ff,#3b00ff)"></i></div><b style="clip-path:polygon(evenodd,62.4px 13.9px,91.0px 13.9px,98.2px 14.4px,112.5px 17.7px,126.8px 21.3px,138.0px 25.5px,150.9px 31.5px,173.8px 42.0px,196.7px 53.8px,219.6px 66.4px,242.5px 79.9px,265.4px 94.2px,288.3px 108.8px,308.0px 121.9px,383.9px 177.2px,441.1px 218.2px,478.0px 244.8px,519.1px 275.3px,549.6px 298.0px,580.1px 321.2px,610.7px 344.9px,638.2px 365.5px,178.0px 530.9px,169.0px 534.6px,162.2px 537.0px,154.2px 537.6px,146.2px 536.3px,138.2px 529.6px,130.2px 518.9px,123.5px 505.5px,114.1px 492.2px,102.1px 472.1px,90.7px 452.1px,79.4px 432.0px,70.6px 412.0px,66.3px 399.0px,56.1px 372.2px,45.4px 345.5px,35.4px 318.7px,25.8px 292.0px,23.0px 283.0px,17.3px 261.5px,11.6px 232.9px,7.3px 204.3px,4.4px 175.6px,3.0px 147.0px,2.6px 135.8px,3.4px 121.5px,5.2px 107.2px,8.0px 92.9px,12.3px 78.6px,19.5px 61.4px,26.6px 46.4px,33.8px 34.9px,40.9px 25.6px,48.1px 19.2px,55.3px 15.3px,62.4px 13.9px,566.4px 333.9px,265.5px 157.3px,132.8px 510.5px,566.4px 333.9px)"></b></div>
<div class="inset" style="left:1696.5px;top:137.6px;width:210.4px;height:198.7px"><i style="left:0;top:0px;width:225px;height:3px;background:linear-gradient(90deg,#b0ff00,#b6ff00,#bdff00,#c4ff00,#cbff00,#d2ff00,#d9ff00,#e0ff00,#e8ff00,#efff00,#f6ff00,#feff00,#fff800,#fff100,#ffea00,#ffe400)"></i>
<i style="left:0;top:3px;width:225px;height:3px;background:linear-gradient(90deg,#b1ff00,#b7ff00,#beff00,#c5ff00,#ccff00,#d3ff00,#daff00,#e1ff00,#e8ff00,#f0ff00,#f7ff00,#ffff00,#fff700,#fff000,#ffe900,#ffe300)"></i>
<i style="left:0;top:6px;width:225px;height:3px;background:linear-gradient(90deg,#b1ff00,#b8ff00,#bfff00,#c6ff00,#cdff00,#d4ff00,#dbff00,#e2ff00,#e9ff00,#f1ff00,#f8ff00,#fffe00,#fff700,#ffef00,#ffe900,#ffe200)"></i>
<i style="left:0;top:9px;width:225px;height:3px;background:linear-gradient(90deg,#b2ff00,#b9ff00,#bfff00,#c6ff00,#cdff00,#d4ff00,#dcff00,#e3ff00,#eaff00,#f2ff00,#f9ff00,#fffd00,#fff600,#ffee00,#ffe800,#ffe100)"></i>
<i style="left:0;top:12px;width:225px;height:3px;background:linear-gradient(90deg,#b3ff00,#b9ff00,#c0ff00,#c7ff00,#ceff00,#d5ff00,#dcff00,#e4ff00,#ebff00,#f3ff00,#faff00,#fffc00,#fff500,#ffee00,#ffe700,#ffe000)"></i>
<i style="left:0;top:15px;width:225px;height:3px;background:linear-gradient(90deg,#b3ff00,#baff00,#c1ff00,#c8ff00,#cfff00,#d6ff00,#ddff00,#e5ff00,#ecff00,#f4ff00,#fbff00,#fffb00,#fff400,#ffed00,#ffe600,#ffdf00)"></i>
<i style="left:0;top:18px;width:225px;height:3px;background:linear-gradient(90deg,#b4ff00,#bbff00,#c2ff00,#c9ff00,#d0ff00,#d7ff00,#deff00,#e6ff00,#edff00,#f5ff00,#fcff00,#fffa00,#fff300,#ffec00,#ffe500,#ffdf00)"></i>
<i style="left:0;top:21px;width:225px;height:3px;background:linear-gradient(90deg,#b5ff00,#bcff00,#c3ff00,#caff00,#d1ff00,#d8ff00,#dfff00,#e6ff00,#eeff00,#f5ff00,#fdff00,#fff900,#fff200,#ffeb00,#ffe400,#ffde00)"></i>
<i style="left:0;top:24px;width:225px;height:3px;background:linear-gradient(90deg,#b6ff01,#bcff00,#c3ff00,#caff00,#d1ff00,#d9ff00,#e0ff00,#e7ff00,#efff00,#f6ff00,#feff00,#fff800,#fff100,#ffea00,#ffe300,#ffdd00)"></i>
<i style="left:0;top:27px;width:225px;height:3px;background:linear-gradient(90deg,#b6ff01,#bdff00,#c4ff00,#cbff00,#d2ff00,#daff00,#e1ff00,#e8ff00,#f0ff00,#f7ff00,#ffff00,#fff700,#fff000,#ffe900,#ffe300,#ffdc00)"></i>
<i style="left:0;top:30px;width:225px;height:3px;background:linear-gradient(90deg,#b7ff01,#beff00,#c5ff00,#ccff00,#d3ff00,#daff00,#e2ff00,#e9ff00,#f1ff00,#f8ff00,#fffe00,#fff600,#ffef00,#ffe800,#ffe200,#ffdb00)"></i>
<i style="left:0;top:33px;width:225px;height:3px;background:linear-gradient(90deg,#b8ff02,#bfff00,#c6ff00,#cdff00,#d4ff00,#dbff00,#e3ff00,#eaff00,#f2ff00,#f9ff00,#fffd00,#fff500,#ffee00,#ffe700,#ffe100,#ffdb00)"></i>
<i style="left:0;top:36px;width:225px;height:3px;background:linear-gradient(90deg,#b9ff02,#c0ff01,#c7ff00,#ceff00,#d5ff00,#dcff00,#e3ff00,#ebff00,#f3ff00,#faff00,#fffc00,#fff500,#ffed00,#ffe700,#ffe000,#ffda00)"></i>
<i style="left:0;top:39px;width:225px;height:3px;background:linear-gradient(90deg,#b9ff02,#c0ff01,#c7ff00,#ceff00,#d6ff00,#ddff00,#e4ff00,#ecff00,#f3ff00,#fbff00,#fffb00,#fff400,#ffec00,#ffe600,#ffdf00,#ffd900)"></i>
<i style="left:0;top:42px;width:225px;height:3px;background:linear-gradient(90deg,#baff03,#c1ff01,#c8ff00,#cfff00,#d6ff00,#deff00,#e5ff00,#edff00,#f4ff00,#fcff00,#fffa00,#fff300,#ffec00,#ffe500,#ffde00,#ffd800)"></i>
<i style="left:0;top:45px;width:225px;height:3px;background:linear-gradient(90deg,#bbff03,#c2ff02,#c9ff00,#d0ff00,#d7ff00,#dfff00,#e6ff00,#eeff00,#f5ff00,#fdff00,#fff900,#fff200,#ffeb00,#ffe400,#ffdd00,#ffd700)"></i>
<i style="left:0;top:48px;width:225px;height:3px;background:linear-gradient(90deg,#bcff03,#c3ff02,#caff01,#d1ff00,#d8ff00,#e0ff00,#e7ff00,#efff00,#f6ff00,#feff00,#fff800,#fff100,#ffea00,#ffe300,#ffdd00,#ffd600)"></i>
<i style="left:0;top:51px;width:225px;height:3px;background:linear-gradient(90deg,#bcff04,#c3ff02,#cbff01,#d2ff00,#d9ff00,#e0ff00,#e8ff00,#f0ff00,#f7ff00,#ffff00,#fff700,#fff000,#ffe900,#ffe200,#ffdc00,#ffd600)"></i>
<i style="left:0;top:54px;width:225px;height:3px;background:linear-gradient(90deg,#bdff04,#c4ff03,#cbff01,#d3ff00,#daff00,#e1ff00,#e9ff00,#f1ff00,#f8ff00,#fffe00,#fff600,#ffef00,#ffe800,#ffe100,#ffdb00,#ffd500)"></i>
<i style="left:0;top:57px;width:225px;height:3px;background:linear-gradient(90deg,#beff04,#c5ff03,#ccff02,#d3ff01,#dbff00,#e2ff00,#eaff00,#f1ff00,#f9ff00,#fffd00,#fff500,#ffee00,#ffe700,#ffe000,#ffda00,#ffd400)"></i>
<i style="left:0;top:60px;width:225px;height:3px;background:linear-gradient(90deg,#bfff05,#c6ff03,#cdff02,#d4ff01,#dcff00,#e3ff00,#ebff00,#f2ff00,#faff00,#fffc00,#fff400,#ffed00,#ffe600,#ffe000,#ffd900,#ffd300)"></i>
<i style="left:0;top:63px;width:225px;height:3px;background:linear-gradient(90deg,#c0ff05,#c7ff04,#ceff02,#d5ff01,#ddff00,#e4ff00,#ecff00,#f3ff00,#fbff00,#fffb00,#fff300,#ffec00,#ffe500,#ffdf00,#ffd800,#ffd200)"></i>
<i style="left:0;top:66px;width:225px;height:3px;background:linear-gradient(90deg,#c0ff05,#c7ff04,#cfff03,#d6ff01,#ddff00,#e5ff00,#edff00,#f4ff00,#fcff00,#fffa00,#fff200,#ffeb00,#ffe400,#ffde00,#ffd800,#ffd200)"></i>
<i style="left:0;top:69px;width:225px;height:3px;background:linear-gradient(90deg,#c1ff06,#c8ff04,#d0ff03,#d7ff02,#deff01,#e6ff00,#eeff00,#f5ff00,#fdff00,#fff900,#fff200,#ffea00,#ffe400,#ffdd00,#ffd700,#ffd100)"></i>
<i style="left:0;top:72px;width:225px;height:3px;background:linear-gradient(90deg,#c2ff06,#c9ff05,#d0ff03,#d8ff02,#dfff01,#e7ff00,#eeff00,#f6ff00,#feff00,#fff800,#fff100,#ffe900,#ffe300,#ffdc00,#ffd600,#ffd000)"></i>
<i style="left:0;top:75px;width:225px;height:3px;background:linear-gradient(90deg,#c3ff06,#caff05,#d1ff04,#d9ff03,#e0ff01,#e8ff00,#efff00,#f7ff00,#ffff00,#fff700,#fff000,#ffe900,#ffe200,#ffdb00,#ffd500,#ffcf00)"></i>
<i style="left:0;top:78px;width:225px;height:3px;background:linear-gradient(90deg,#c4ff07,#cbff05,#d2ff04,#d9ff03,#e1ff02,#e9ff00,#f0ff00,#f8ff00,#fffe00,#fff600,#ffef00,#ffe800,#ffe100,#ffda00,#ffd400,#ffce00)"></i>
<i style="left:0;top:81px;width:225px;height:3px;background:linear-gradient(90deg,#c4ff07,#ccff06,#d3ff05,#daff03,#e2ff02,#eaff01,#f1ff00,#f9ff00,#fffd00,#fff500,#ffee00,#ffe700,#ffe000,#ffda00,#ffd300,#ffce00)"></i>
<i style="left:0;top:84px;width:225px;height:3px;background:linear-gradient(90deg,#c5ff08,#ccff06,#d4ff05,#dbff04,#e3ff02,#eaff01,#f2ff00,#faff00,#fffc00,#fff400,#ffed00,#ffe600,#ffdf00,#ffd900,#ffd300,#ffcd00)"></i>
<i style="left:0;top:87px;width:225px;height:3px;background:linear-gradient(90deg,#c6ff08,#cdff07,#d5ff05,#dcff04,#e4ff03,#ebff01,#f3ff00,#fbff00,#fffb00,#fff300,#ffec00,#ffe500,#ffde00,#ffd800,#ffd200,#ffcc00)"></i>
<i style="left:0;top:90px;width:225px;height:3px;background:linear-gradient(90deg,#c7ff08,#ceff07,#d6ff06,#ddff04,#e5ff03,#ecff02,#f4ff00,#fcff00,#fffa00,#fff200,#ffeb00,#ffe400,#ffdd00,#ffd700,#ffd100,#ffcb00)"></i>
<i style="left:0;top:93px;width:225px;height:3px;background:linear-gradient(90deg,#c8ff09,#cfff07,#d6ff06,#deff05,#e6ff03,#edff02,#f5ff01,#fdff00,#fff900,#fff100,#ffea00,#ffe300,#ffdd00,#ffd600,#ffd000,#ffca00)"></i>
<i style="left:0;top:96px;width:225px;height:3px;background:linear-gradient(90deg,#c8ff09,#d0ff08,#d7ff06,#dfff05,#e6ff04,#eeff02,#f6ff01,#feff00,#fff800,#fff000,#ffe900,#ffe200,#ffdc00,#ffd500,#ffcf00,#ffca00)"></i>
<i style="left:0;top:99px;width:225px;height:3px;background:linear-gradient(90deg,#c9ff09,#d1ff08,#d8ff07,#e0ff05,#e7ff04,#efff03,#f7ff01,#ffff00,#fff700,#ffef00,#ffe800,#ffe100,#ffdb00,#ffd500,#ffcf00,#ffc900)"></i>
<i style="left:0;top:102px;width:225px;height:3px;background:linear-gradient(90deg,#caff0a,#d2ff08,#d9ff07,#e1ff06,#e8ff04,#f0ff03,#f8ff02,#fffe00,#fff600,#ffef00,#ffe700,#ffe100,#ffda00,#ffd400,#ffce00,#ffc800)"></i>
<i style="left:0;top:105px;width:225px;height:3px;background:linear-gradient(90deg,#cbff0a,#d2ff09,#daff08,#e2ff06,#e9ff05,#f1ff03,#f9ff02,#fffd01,#fff500,#ffee00,#ffe600,#ffe000,#ffd900,#ffd300,#ffcd00,#ffc700)"></i>
<i style="left:0;top:108px;width:225px;height:3px;background:linear-gradient(90deg,#ccff0b,#d3ff09,#dbff08,#e2ff07,#eaff05,#f2ff04,#faff02,#fffc01,#fff400,#ffed00,#ffe600,#ffdf00,#ffd800,#ffd200,#ffcc00,#ffc700)"></i>
<i style="left:0;top:111px;width:225px;height:3px;background:linear-gradient(90deg,#cdff0b,#d4ff0a,#dcff08,#e3ff07,#ebff06,#f3ff04,#fbff03,#fffb01,#fff300,#ffec00,#ffe500,#ffde00,#ffd800,#ffd100,#ffcb00,#ffc600)"></i>
<i style="left:0;top:114px;width:225px;height:3px;background:linear-gradient(90deg,#ceff0b,#d5ff0a,#ddff09,#e4ff07,#ecff06,#f4ff05,#fcff03,#fffa02,#fff200,#ffeb00,#ffe400,#ffdd00,#ffd700,#ffd100,#ffcb00,#ffc500)"></i>
<i style="left:0;top:117px;width:225px;height:3px;background:linear-gradient(90deg,#ceff0c,#d6ff0a,#deff09,#e5ff08,#edff06,#f5ff05,#fdff04,#fff902,#fff101,#ffea00,#ffe300,#ffdc00,#ffd600,#ffd000,#ffca00,#ffc400)"></i>
<i style="left:0;top:120px;width:225px;height:3px;background:linear-gradient(90deg,#cfff0c,#d7ff0b,#deff09,#e6ff08,#eeff07,#f6ff05,#feff04,#fff802,#fff001,#ffe900,#ffe200,#ffdb00,#ffd500,#ffcf00,#ffc900,#ffc300)"></i>
<i style="left:0;top:123px;width:225px;height:3px;background:linear-gradient(90deg,#d0ff0d,#d8ff0b,#dfff0a,#e7ff08,#efff07,#f7ff06,#ffff04,#fff703,#ffef01,#ffe800,#ffe100,#ffda00,#ffd400,#ffce00,#ffc800,#ffc300)"></i>
<i style="left:0;top:126px;width:225px;height:3px;background:linear-gradient(90deg,#d1ff0d,#d9ff0c,#e0ff0a,#e8ff09,#f0ff07,#f8ff06,#fffe05,#fff603,#ffee02,#ffe701,#ffe000,#ffda00,#ffd300,#ffcd00,#ffc800,#ffc200)"></i>
<i style="left:0;top:129px;width:225px;height:3px;background:linear-gradient(90deg,#d2ff0d,#d9ff0c,#e1ff0b,#e9ff09,#f1ff08,#f9ff06,#fffd05,#fff504,#ffed02,#ffe601,#ffdf00,#ffd900,#ffd200,#ffcc00,#ffc700,#ffc100)"></i>
<i style="left:0;top:132px;width:225px;height:3px;background:linear-gradient(90deg,#d3ff0e,#daff0c,#e2ff0b,#eaff0a,#f2ff08,#faff07,#fffc05,#fff404,#ffec02,#ffe501,#ffde00,#ffd800,#ffd200,#ffcc00,#ffc600,#ffc000)"></i>
<i style="left:0;top:135px;width:225px;height:3px;background:linear-gradient(90deg,#d4ff0e,#dbff0d,#e3ff0b,#ebff0a,#f3ff09,#fbff07,#fffb06,#fff304,#ffeb03,#ffe401,#ffde00,#ffd700,#ffd100,#ffcb00,#ffc500,#ffc000)"></i>
<i style="left:0;top:138px;width:225px;height:3px;background:linear-gradient(90deg,#d5ff0f,#dcff0d,#e4ff0c,#ecff0b,#f4ff09,#fcff08,#fffa06,#fff205,#ffeb03,#ffe302,#ffdd01,#ffd600,#ffd000,#ffca00,#ffc400,#ffbf00)"></i>
<i style="left:0;top:141px;width:225px;height:3px;background:linear-gradient(90deg,#d5ff0f,#ddff0e,#e5ff0c,#edff0b,#f5ff0a,#fdff08,#fff907,#fff105,#ffea03,#ffe302,#ffdc01,#ffd500,#ffcf00,#ffc900,#ffc400,#ffbe00)"></i>
<i style="left:0;top:144px;width:225px;height:3px;background:linear-gradient(90deg,#d6ff10,#deff0e,#e6ff0d,#eeff0b,#f6ff0a,#feff09,#fff807,#fff005,#ffe904,#ffe202,#ffdb01,#ffd400,#ffce00,#ffc800,#ffc300,#ffbd00)"></i>
<i style="left:0;top:147px;width:225px;height:3px;background:linear-gradient(90deg,#d7ff10,#dfff0f,#e7ff0d,#efff0c,#f7ff0a,#ffff09,#fff707,#ffef06,#ffe804,#ffe103,#ffda01,#ffd400,#ffce00,#ffc800,#ffc200,#ffbd00)"></i>
<i style="left:0;top:150px;width:225px;height:3px;background:linear-gradient(90deg,#d8ff10,#e0ff0f,#e8ff0e,#f0ff0c,#f8ff0b,#fffe09,#fff608,#ffee06,#ffe705,#ffe003,#ffd902,#ffd301,#ffcd00,#ffc700,#ffc100,#ffbc00)"></i>
<i style="left:0;top:153px;width:225px;height:3px;background:linear-gradient(90deg,#d9ff11,#e1ff0f,#e9ff0e,#f1ff0d,#f9ff0b,#fffd0a,#fff508,#ffed06,#ffe605,#ffdf03,#ffd802,#ffd201,#ffcc00,#ffc600,#ffc100,#ffbb00)"></i>
<i style="left:0;top:156px;width:225px;height:3px;background:linear-gradient(90deg,#daff11,#e2ff10,#eaff0e,#f2ff0d,#faff0c,#fffc0a,#fff408,#ffec07,#ffe505,#ffde04,#ffd702,#ffd101,#ffcb00,#ffc500,#ffc000,#ffba00)"></i>
<i style="left:0;top:159px;width:225px;height:3px;background:linear-gradient(90deg,#dbff12,#e3ff10,#ebff0f,#f3ff0d,#fbff0c,#fffb0a,#fff309,#ffeb07,#ffe406,#ffdd04,#ffd703,#ffd001,#ffca00,#ffc500,#ffbf00,#ffba00)"></i>
<i style="left:0;top:162px;width:225px;height:3px;background:linear-gradient(90deg,#dcff12,#e4ff11,#ecff0f,#f4ff0e,#fcff0c,#fffa0b,#fff209,#ffea07,#ffe306,#ffdc04,#ffd603,#ffcf02,#ffc901,#ffc400,#ffbe00,#ffb900)"></i>
<i style="left:0;top:165px;width:225px;height:3px;background:linear-gradient(90deg,#ddff13,#e5ff11,#edff10,#f5ff0e,#fdff0d,#fff90b,#fff109,#ffe908,#ffe206,#ffdb05,#ffd503,#ffcf02,#ffc901,#ffc300,#ffbd00,#ffb800)"></i>
<i style="left:0;top:168px;width:225px;height:3px;background:linear-gradient(90deg,#deff13,#e6ff12,#eeff10,#f6ff0f,#feff0d,#fff80c,#fff00a,#ffe808,#ffe107,#ffda05,#ffd404,#ffce02,#ffc801,#ffc200,#ffbd00,#ffb700)"></i>
<i style="left:0;top:171px;width:225px;height:3px;background:linear-gradient(90deg,#dfff13,#e7ff12,#efff11,#f7ff0f,#ffff0e,#fff70c,#ffef0a,#ffe708,#ffe007,#ffda05,#ffd304,#ffcd03,#ffc702,#ffc100,#ffbc00,#ffb700)"></i>
<i style="left:0;top:174px;width:225px;height:3px;background:linear-gradient(90deg,#e0ff14,#e8ff12,#f0ff11,#f8ff10,#fffe0e,#fff60c,#ffee0b,#ffe609,#ffdf07,#ffd906,#ffd204,#ffcc03,#ffc602,#ffc101,#ffbb00,#ffb600)"></i>
<i style="left:0;top:177px;width:225px;height:3px;background:linear-gradient(90deg,#e0ff14,#e9ff13,#f1ff12,#f9ff10,#fffd0f,#fff50d,#ffed0b,#ffe609,#ffdf08,#ffd806,#ffd105,#ffcb03,#ffc502,#ffc001,#ffba00,#ffb500)"></i>
<i style="left:0;top:180px;width:225px;height:3px;background:linear-gradient(90deg,#e1ff15,#e9ff13,#f2ff12,#faff11,#fffc0f,#fff40d,#ffec0b,#ffe50a,#ffde08,#ffd706,#ffd105,#ffca04,#ffc502,#ffbf01,#ffba00,#ffb500)"></i>
<i style="left:0;top:183px;width:225px;height:3px;background:linear-gradient(90deg,#e2ff15,#eaff14,#f3ff12,#fbff11,#fffb0f,#fff30d,#ffeb0c,#ffe40a,#ffdd08,#ffd607,#ffd005,#ffca04,#ffc403,#ffbe02,#ffb900,#ffb400)"></i>
<i style="left:0;top:186px;width:225px;height:3px;background:linear-gradient(90deg,#e3ff16,#ebff14,#f4ff13,#fcff11,#fffa10,#fff20e,#ffea0c,#ffe30a,#ffdc09,#ffd507,#ffcf06,#ffc904,#ffc303,#ffbe02,#ffb801,#ffb300)"></i>
<i style="left:0;top:189px;width:225px;height:3px;background:linear-gradient(90deg,#e4ff16,#ecff15,#f5ff13,#fdff12,#fff910,#fff10e,#ffe90c,#ffe20b,#ffdb09,#ffd407,#ffce06,#ffc805,#ffc203,#ffbd02,#ffb701,#ffb200)"></i>
<i style="left:0;top:192px;width:225px;height:3px;background:linear-gradient(90deg,#e5ff17,#edff15,#f6ff14,#feff12,#fff810,#fff00e,#ffe80d,#ffe10b,#ffda09,#ffd308,#ffcd06,#ffc705,#ffc104,#ffbc02,#ffb701,#ffb200)"></i>
<i style="left:0;top:195px;width:225px;height:3px;background:linear-gradient(90deg,#e6ff17,#eeff16,#f7ff14,#ffff13,#fff611,#ffef0f,#ffe70d,#ffe00b,#ffd90a,#ffd308,#ffcc07,#ffc605,#ffc104,#ffbb03,#ffb602,#ffb100)"></i>
<i style="left:0;top:198px;width:225px;height:3px;background:linear-gradient(90deg,#e7ff18,#efff16,#f8ff15,#fffe13,#fff511,#ffee0f,#ffe60d,#ffdf0c,#ffd80a,#ffd208,#ffcc07,#ffc606,#ffc004,#ffba03,#ffb502,#ffb001)"></i><b style="clip-path:polygon(-43.4px -14.4px,253.8px 213.4px,253.8px -50px,-43.4px -50px)"></b></div>
<svg class="layer" width="1920" height="1048" viewBox="0 0 1920 1048">
<rect x="1428.2" y="426.7" width="17.400" height="16.400" fill="none" stroke="#fff" stroke-width="1.600" stroke-opacity=".92"/>
<rect x="1424.8" y="392.8" width="17.400" height="16.400" fill="none" stroke="#fff" stroke-width="1.600" stroke-opacity=".92"/>
<rect x="1423.6" y="357.3" width="17.400" height="16.400" fill="none" stroke="#fff" stroke-width="1.600" stroke-opacity=".92"/>
<rect x="1421.7" y="323.3" width="17.400" height="16.400" fill="none" stroke="#fff" stroke-width="1.600" stroke-opacity=".92"/>
<rect x="1418.7" y="284.8" width="17.400" height="16.400" fill="none" stroke="#fff" stroke-width="1.600" stroke-opacity=".92"/>
<rect x="1448.8" y="438.8" width="17.400" height="16.400" fill="none" stroke="#fff" stroke-width="1.600" stroke-opacity=".92"/>
<rect x="1468.7" y="414.9" width="17.400" height="16.400" fill="none" stroke="#fff" stroke-width="1.600" stroke-opacity=".92"/>
<rect x="1487.8" y="392.8" width="17.400" height="16.400" fill="none" stroke="#fff" stroke-width="1.600" stroke-opacity=".92"/>
<rect x="1504.5" y="371.8" width="17.400" height="16.400" fill="none" stroke="#fff" stroke-width="1.600" stroke-opacity=".92"/>
<rect x="1525.2" y="346.6" width="17.400" height="16.400" fill="none" stroke="#fff" stroke-width="1.600" stroke-opacity=".92"/>
<rect x="1415.8" y="462.7" width="17.400" height="16.400" fill="none" stroke="#fff" stroke-width="1.600" stroke-opacity=".92"/>
<rect x="1400.0" y="462.7" width="17.400" height="16.400" fill="none" stroke="#fff" stroke-width="1.600" stroke-opacity=".92"/>
<rect x="1384.7" y="462.7" width="17.400" height="16.400" fill="none" stroke="#fff" stroke-width="1.600" stroke-opacity=".92"/>
<rect x="1368.5" y="462.7" width="17.400" height="16.400" fill="none" stroke="#fff" stroke-width="1.600" stroke-opacity=".92"/>
<rect x="1351.3" y="462.7" width="17.400" height="16.400" fill="none" stroke="#fff" stroke-width="1.600" stroke-opacity=".92"/>
<rect x="1432.0" y="486.2" width="17.400" height="16.400" fill="none" stroke="#fff" stroke-width="1.600" stroke-opacity=".92"/>
<rect x="1432.6" y="509.8" width="17.400" height="16.400" fill="none" stroke="#fff" stroke-width="1.600" stroke-opacity=".92"/>
<rect x="1434.7" y="531.0" width="17.400" height="16.400" fill="none" stroke="#fff" stroke-width="1.600" stroke-opacity=".92"/>
<rect x="1435.7" y="553.0" width="17.400" height="16.400" fill="none" stroke="#fff" stroke-width="1.600" stroke-opacity=".92"/>
<rect x="1437.8" y="576.8" width="17.400" height="16.400" fill="none" stroke="#fff" stroke-width="1.600" stroke-opacity=".92"/>
<rect x="1401.9" y="497.6" width="17.400" height="16.400" fill="none" stroke="#fff" stroke-width="1.600" stroke-opacity=".92"/>
<rect x="1371.9" y="533.9" width="17.400" height="16.400" fill="none" stroke="#fff" stroke-width="1.600" stroke-opacity=".92"/>
<rect x="1345.3" y="566.3" width="17.400" height="16.400" fill="none" stroke="#fff" stroke-width="1.600" stroke-opacity=".92"/>
<rect x="1316.9" y="600.3" width="17.400" height="16.400" fill="none" stroke="#fff" stroke-width="1.600" stroke-opacity=".92"/>
<rect x="1285.8" y="638.8" width="17.400" height="16.400" fill="none" stroke="#fff" stroke-width="1.600" stroke-opacity=".92"/>
<rect x="1486.2" y="462.7" width="17.400" height="16.400" fill="none" stroke="#fff" stroke-width="1.600" stroke-opacity=".92"/>
<rect x="1547.3" y="462.7" width="17.400" height="16.400" fill="none" stroke="#fff" stroke-width="1.600" stroke-opacity=".92"/>
<rect x="1598.8" y="462.7" width="17.400" height="16.400" fill="none" stroke="#fff" stroke-width="1.600" stroke-opacity=".92"/>
<rect x="1656.7" y="462.7" width="17.400" height="16.400" fill="none" stroke="#fff" stroke-width="1.600" stroke-opacity=".92"/>
<rect x="1720.9" y="462.7" width="17.400" height="16.400" fill="none" stroke="#fff" stroke-width="1.600" stroke-opacity=".92"/>
<rect x="1430.100" y="463.400" width="16.800" height="15.400" fill="none" stroke="#000" stroke-width="1.700"/>
<circle cx="1428.9" cy="443.7" r="5.5" fill="#98b898" stroke="#000" stroke-width="1.3"/>
<circle cx="1428.9" cy="405.5" r="5.5" fill="#80b880" stroke="#000" stroke-width="1.3"/>
<circle cx="1428.9" cy="368.5" r="5.5" fill="#60b860" stroke="#000" stroke-width="1.3"/>
<circle cx="1428.9" cy="330.0" r="5.5" fill="#48b848" stroke="#000" stroke-width="1.3"/>
<circle cx="1428.9" cy="293.0" r="5.5" fill="#00a800" stroke="#000" stroke-width="1.3"/>
<circle cx="1446.3" cy="454.0" r="5.5" fill="#bcb8a0" stroke="#000" stroke-width="1.3"/>
<circle cx="1466.5" cy="428.8" r="5.5" fill="#bcb880" stroke="#000" stroke-width="1.3"/>
<circle cx="1485.6" cy="402.7" r="5.5" fill="#bab860" stroke="#000" stroke-width="1.3"/>
<circle cx="1504.5" cy="376.9" r="5.5" fill="#bcb848" stroke="#000" stroke-width="1.3"/>
<circle cx="1523.0" cy="351.0" r="5.5" fill="#c0b800" stroke="#000" stroke-width="1.3"/>
<circle cx="1413.6" cy="479.9" r="5.5" fill="#98b8b0" stroke="#000" stroke-width="1.3"/>
<circle cx="1401.0" cy="480.3" r="5.5" fill="#88b8b8" stroke="#000" stroke-width="1.3"/>
<circle cx="1387.1" cy="480.6" r="5.5" fill="#68b8b8" stroke="#000" stroke-width="1.3"/>
<circle cx="1374.7" cy="480.6" r="5.5" fill="#48b8b8" stroke="#000" stroke-width="1.3"/>
<circle cx="1361.9" cy="482.9" r="5.5" fill="#00b8b8" stroke="#000" stroke-width="1.3"/>
<circle cx="1428.9" cy="502.6" r="5.5" fill="#b898b0" stroke="#000" stroke-width="1.3"/>
<circle cx="1427.4" cy="526.8" r="5.5" fill="#b880b8" stroke="#000" stroke-width="1.3"/>
<circle cx="1427.4" cy="548.8" r="5.5" fill="#b868b8" stroke="#000" stroke-width="1.3"/>
<circle cx="1428.9" cy="572.6" r="5.5" fill="#b848b8" stroke="#000" stroke-width="1.3"/>
<circle cx="1428.9" cy="594.6" r="5.5" fill="#b800b0" stroke="#000" stroke-width="1.3"/>
<circle cx="1402.4" cy="514.8" r="5.5" fill="#9090b8" stroke="#000" stroke-width="1.3"/>
<circle cx="1374.3" cy="552.0" r="5.5" fill="#7878b8" stroke="#000" stroke-width="1.3"/>
<circle cx="1349.5" cy="586.0" r="5.5" fill="#6060c0" stroke="#000" stroke-width="1.3"/>
<circle cx="1324.4" cy="619.1" r="5.5" fill="#4848c0" stroke="#000" stroke-width="1.3"/>
<circle cx="1301.0" cy="649.9" r="5.5" fill="#0000b0" stroke="#000" stroke-width="1.3"/>
<circle cx="1479.5" cy="476.8" r="5.5" fill="#b88080" stroke="#000" stroke-width="1.3"/>
<circle cx="1539.0" cy="475.0" r="5.5" fill="#b86060" stroke="#000" stroke-width="1.3"/>
<circle cx="1596.6" cy="474.0" r="5.5" fill="#c05050" stroke="#000" stroke-width="1.3"/>
<circle cx="1658.1" cy="471.0" r="5.5" fill="#c03c3c" stroke="#000" stroke-width="1.3"/>
<circle cx="1715.4" cy="469.1" r="5.5" fill="#c00000" stroke="#000" stroke-width="1.3"/>
<circle cx="1428.9" cy="477.5" r="5.5" fill="#fff" stroke="#000" stroke-width="1.3"/>
<rect x="1695.7" y="136.8" width="212" height="200.3" fill="none" stroke="#9a9a9a" stroke-width="1.6"/>
<rect x="1793.1" y="229" width="17" height="16" fill="none" stroke="#fff" stroke-width="1.8"/>
<circle cx="1753" cy="206" r="5.5" fill="#c0b800" stroke="#000" stroke-width="1.3"/>
</svg>
<div id="titlebar">
 <svg class="abs" style="left:2px;top:3px" width="16" height="16" viewBox="0 0 16 16"><defs><radialGradient id="i1" cx=".1" cy=".15" r=".55"><stop offset="0" stop-color="#ff2a00"/><stop offset=".5" stop-color="#f04010" stop-opacity=".8"/><stop offset="1" stop-color="#f04010" stop-opacity="0"/></radialGradient><radialGradient id="i2" cx=".9" cy=".1" r=".5"><stop offset="0" stop-color="#006a00"/><stop offset=".6" stop-color="#0a5a0a" stop-opacity=".8"/><stop offset="1" stop-color="#0a5a0a" stop-opacity="0"/></radialGradient><radialGradient id="i3" cx=".9" cy=".85" r=".55"><stop offset="0" stop-color="#e80030"/><stop offset=".6" stop-color="#d01040" stop-opacity=".8"/><stop offset="1" stop-color="#d01040" stop-opacity="0"/></radialGradient><radialGradient id="i4" cx=".5" cy=".5" r=".42"><stop offset="0" stop-color="#f4fff0"/><stop offset=".6" stop-color="#f0d8d0" stop-opacity=".9"/><stop offset="1" stop-color="#e0b0b0" stop-opacity="0"/></radialGradient><radialGradient id="i5" cx=".08" cy=".62" r=".25"><stop offset="0" stop-color="#4020c0"/><stop offset="1" stop-color="#4020c0" stop-opacity="0"/></radialGradient></defs><rect width="16" height="16" fill="#3c0808"/><rect width="16" height="16" fill="url(#i1)"/><rect width="16" height="16" fill="url(#i2)"/><rect width="16" height="16" fill="url(#i3)"/><rect width="16" height="16" fill="url(#i5)"/><rect width="16" height="16" fill="url(#i4)"/><text x="8" y="13.300" font-size="14.500" font-weight="bold" text-anchor="middle" fill="#000" font-family="Liberation Sans, sans-serif">5</text></svg>
 <svg class="abs" style="left:0;top:0" width="1920" height="23" viewBox="0 0 1920 23"><text x="959.5" y="16.6" font-size="14.4" text-anchor="middle" fill="#1e1e1e" textLength="408" lengthAdjust="spacingAndGlyphs" font-family="Liberation Sans, sans-serif">CalMAN 5 CalMAN Ultimate for Business 112 Days Remaining</text>
 <rect x="1827.700" y="10.900" width="8.400" height="2.300" fill="#1e1e1e"/>
 <rect x="1853.700" y="7.200" width="6.400" height="6" fill="none" stroke="#1e1e1e" stroke-width="1.200"/><rect x="1853.100" y="6.300" width="7.600" height="1.900" fill="#1e1e1e"/><path d="M1855.800 6.300v-1.800h6.700v6.500h-1.800" fill="none" stroke="#1e1e1e" stroke-width="1.200"/>
 <rect x="1872" y="0" width="45" height="19" fill="#c75050"/><path d="M1891.300 6.200l7.500 6.700m0-6.700l-7.500 6.700" stroke="#fff" stroke-width="2.100" fill="none"/></svg>
</div>
<div id="toolbar"></div>
<div id="leftline"></div><div id="rightline"></div>
<div id="rainbow"></div>
<div id="logo"><svg class="abs" style="left:0;top:0" width="181" height="29" viewBox="1 23 181 29"><defs><linearGradient id="lg" x1="0" y1="0" x2="0" y2="1"><stop offset="0" stop-color="#ffffff"/><stop offset=".55" stop-color="#ececec"/><stop offset="1" stop-color="#cfcfcf"/></linearGradient></defs><g font-family="Liberation Sans, sans-serif" font-weight="bold" font-size="29"><g fill="#5a0000" opacity=".55"><text x="7" y="46.800" textLength="116.500" lengthAdjust="spacingAndGlyphs">CalMAN</text><text x="129.800" y="46.800" textLength="17.500" lengthAdjust="spacingAndGlyphs">5</text></g><g fill="url(#lg)" stroke="url(#lg)" stroke-width=".9" stroke-linejoin="round"><text x="6.300" y="45.600" textLength="115.800" lengthAdjust="spacingAndGlyphs">CalMAN</text><text x="129" y="45.600" textLength="17" lengthAdjust="spacingAndGlyphs">5</text></g></g><path d="M89.500 28.500L84.800 39.500h9.600z" fill="#ececec"/><g fill="#b01212"><circle cx="89.300" cy="29.900" r="1.250"/><path d="M85.300 33.300l2.500-1.600 2.100 .3 1.900 1.500 1.700-.6.300.7-2.200 1-1.700-1.200-.9 1.900 2 1.200.2 2.600h-.9l-.2-2-2.100-1-1.400 2-2.300 .5-.2-.8 1.900-.5 1.500-2.700.7-2-1.300 .2-1.600 1.200z"/></g></svg><div class="dd"><div class="tri-d" style="left:4.8px;top:7.8px"></div></div>
</div>
<!-- left play & tabs -->
<div class="abs" style="left:-2px;top:58px;width:29px;height:28px;border-radius:0 5px 5px 0;background:linear-gradient(#a6a6a6,#7c7c7c 55%,#8c8c8c);box-shadow:inset 0 0 0 1px #d0d0d0"><div class="abs" style="left:4.500px;top:4px;width:20px;height:20px;border-radius:50%;background:linear-gradient(#5a5a5a,#8e8e8e)"></div><svg class="abs" style="left:11.500px;top:8.500px" width="7" height="11"><path d="M.3 .3v10.200l5.600-5.100z" fill="#fff"/></svg></div>
<div class="abs" style="left:29px;top:58px;width:92px;height:30px;border-radius:4px 4px 0 0;background:linear-gradient(#434343,#343434);box-shadow:inset 1px 1px 0 #6a6a6a,inset -1px 0 0 #6a6a6a"><div class="abs" style="left:58px;top:1px;width:1px;height:29px;background:#6a6a6a"></div><span class="abs" style="left:6px;top:9.700px;font-size:10.900px;color:#eee;white-space:nowrap;transform:scaleX(1.09);transform-origin:0 0">History 1</span><div class="abs" style="left:64px;top:7px;width:20px;height:20px;border-radius:50%;background:linear-gradient(#363636,#525252)"></div><span class="abs" style="left:70.5px;top:9.5px;font-size:12px;color:#999">+</span></div>
<!-- right tabs -->
<div class="tab" style="left:1353px;width:154px"><div class="bar" style="background:#10e010"></div><div class="tx">X-Rite i1Pro 2<br>LCD Direct View</div><div class="dd" style="left:89px"><div class="tri-d" style="left:4.8px;top:8px"></div></div><div class="abs" style="left:118px;top:3px;width:1px;height:27px;background:#3c3c3c"></div><div class="abs" style="left:126.6px;top:2.5px;width:24px;height:24px;border-radius:50%;background:#0000f4;box-shadow:0 0 0 1.1px #f0f0f0"></div><span class="abs" style="left:126.6px;top:9px;width:24px;text-align:center;font-size:9.1px;font-weight:bold;color:#fff">234</span></div>
<div class="tab" style="left:1513.5px;width:155px"><div class="bar" style="background:#f0f000"></div><div class="tx">Generic Calibration DVD</div><div class="dd" style="left:129px"><div class="tri-d" style="left:4.8px;top:8px"></div></div></div>
<div class="tab" style="left:1675px;width:143px"><div class="bar" style="background:#f0f000"></div><div class="tx">Direct Display Control</div><div class="dd" style="left:117px"><div class="tri-d" style="left:4.8px;top:8px"></div></div></div>
<div class="sqb" style="left:1821px"><div class="c"></div><svg class="abs" style="left:9.5px;top:6.5px" width="15" height="15" viewBox="-7.5 -7.5 15 15"><g fill="#dedede"><path fill-rule="evenodd" d="M0-4.7a4.7 4.7 0 1 0 .01 0zM0-2.7a2.7 2.7 0 1 1-.01 0z"/><g id="th"><rect x="-1.15" y="-6.4" width="2.3" height="2.2"/><rect x="-1.15" y="4.2" width="2.3" height="2.2"/><rect x="-6.4" y="-1.15" width="2.2" height="2.3"/><rect x="4.2" y="-1.15" width="2.2" height="2.3"/></g><use href="#th" transform="rotate(45)"/></g></svg></div>
<div class="sqb" style="left:1857px"><div class="c"></div><span class="abs" style="left:7px;top:4.5px;width:20px;text-align:center;font-size:15.5px;font-weight:bold;color:#fff;-webkit-text-stroke:.5px #fff">?</span></div>
<div class="sqb" style="left:1893px"><div class="c" style="left:4px"></div><svg class="abs" style="left:10.5px;top:8.5px" width="7" height="11"><path d="M6 .3v9.8L.4 5.200z" fill="#fff"/></svg></div>
<!-- bottom bar -->
<div id="bottombar"></div>
<div class="abs" style="left:811px;top:978px;width:785px;height:62px;background:linear-gradient(#4c4c4c,#3a3a3a 50%,#2b2b2b)"></div>
<div class="gbtn" style="left:1px;top:978px;width:45px;height:60.5px;border-radius:4px;background:linear-gradient(#8e8e8e,#565656)"><div class="c" style="left:14.5px;top:1.5px;width:16px;height:16px;background:linear-gradient(#585858,#8a8a8a)"></div><svg class="abs" style="left:18px;top:6px" width="10" height="6"><path d="M0 5.5h9L4.5 0z" fill="#2a2a2a"/></svg><div class="abs" style="left:5px;top:26px;width:35.5px;height:30.5px;border-radius:3px;background:#ffff00;box-shadow:0 0 0 1px rgba(90,90,40,.6)"></div></div>
<div class="sw" style="left:52px"><div class="c" style="background:#c2c2a6"></div><div class="l">20%</div></div>
<div class="sw" style="left:204.2px"><div class="c" style="background:#c2c08a"></div><div class="l">40%</div></div>
<div class="sw" style="left:356.3px"><div class="c" style="background:#c2c06c"></div><div class="l">60%</div></div>
<div class="sw" style="left:508.4px"><div class="c" style="background:#c2c04c"></div><div class="l">80%</div></div>
<div class="sw" style="left:660.5px"><div class="c" style="background:#c4c004"></div><div class="l" style="color:#fff">100%</div></div>
<!-- bottom right controls -->
<div class="gbtn" style="left:1597px;top:978px;width:48px;height:18px;border-radius:5px 5px 0 0;background:linear-gradient(#a6a6a6,#8c8c8c)"><div class="c" style="left:16.5px;top:1.5px;width:15px;height:15px;background:linear-gradient(#6c6c6c,#989898)"></div><svg class="abs" style="left:19.5px;top:6px" width="10" height="6"><path d="M0 5.5h9L4.5 0z" fill="#2a2a2a"/></svg></div>
<div class="gbtn" style="left:1597px;top:997px;width:48px;height:41.5px;border-radius:0 0 5px 5px;background:linear-gradient(#8a8a8a,#606060)"><div class="abs" style="left:7.5px;top:4.5px;width:27px;height:27px;border:3px solid #1c1c1c;border-radius:5px;background:linear-gradient(#ababab 0,#a0a0a0 50%,#6c6c6c 50%,#727272 100%);box-shadow:0 0 0 1px #b0b0b0"></div><div class="abs" style="left:17px;top:14px;width:14px;height:14px;background:linear-gradient(#222 0,#1a1a1a 50%,#000 50%)"></div></div>
<div class="gbtn" style="left:1646px;top:978px;width:46px;height:30px;border-radius:5px 0 0 5px"><div class="c" style="left:13px;top:5px"></div><div class="abs" style="left:19px;top:11px;width:8px;height:8px;background:#2e2e2e"></div></div>
<div class="gbtn" style="left:1693px;top:978px;width:44px;height:30px"><div class="c" style="left:12px;top:5px"></div><svg class="abs" style="left:19px;top:10px" width="9" height="11"><path d="M0 0v10.5L8.5 5.2z" fill="#2e2e2e"/></svg></div>
<div class="gbtn" style="left:1738px;top:978px;width:44px;height:30px"><div class="c" style="left:12px;top:5px"></div><svg class="abs" style="left:16px;top:9.6px" width="12" height="11.4" viewBox="0 0 12 11.4"><path d="M3.2 1H1v9.4h2.200M8.800 1H11v9.400H8.800" stroke="#2a2a2a" stroke-width="1.9" fill="none"/><rect x="4.200" y="4.900" width="1.500" height="1.700" fill="#2a2a2a"/><rect x="6.400" y="4.900" width="1.500" height="1.700" fill="#2a2a2a"/></svg></div>
<div class="gbtn" style="left:1783px;top:978px;width:44px;height:30px"><div class="c" style="left:12px;top:5px"></div><svg class="abs" style="left:14.700px;top:11.500px" width="14.600" height="7.200" viewBox="-.3 -.3 14.600 7.200"><path d="M7 3.300C5.800 1.300 4.600 .8 3.400 .8a2.500 2.500 0 0 0 0 5c1.200 0 2.400-.5 3.600-2.500zm0 0c1.200-2 2.400-2.500 3.600-2.500a2.500 2.500 0 0 1 0 5c-1.200 0-2.400-.5-3.600-2.500z" stroke="#2a2a2a" stroke-width="1.700" fill="none"/></svg></div>
<div class="gbtn" style="left:1828px;top:978px;width:44px;height:30px;background:linear-gradient(#484848,#2c2c2c)"><div class="c" style="left:12px;top:5px;background:linear-gradient(#2a2a2a,#3e3e3e)"></div><svg class="abs" style="left:15px;top:8px" width="14" height="14" viewBox="-7 -7 14 14"><path d="M-4.700 -1a4.800 4.800 0 0 1 7.800-2.600M4.700 1a4.800 4.800 0 0 1-7.800 2.600" fill="none" stroke="#1c1c1c" stroke-width="2.300"/><path d="M5.600-6.200v4.600H1zM-5.600 6.200V1.600H-1z" fill="#1c1c1c"/></svg></div>
<div class="gbtn" style="left:1873px;top:978px;width:45px;height:30px;border-radius:0 5px 5px 0;background:linear-gradient(#484848,#2c2c2c)"><div class="c" style="left:13px;top:5px;background:linear-gradient(#2a2a2a,#3e3e3e)"></div></div>
<div class="gbtn" style="left:1646px;top:1009px;width:136px;height:29.500px;border-radius:5px 0 0 5px"><div class="c" style="left:21px;top:5px"></div><svg class="abs" style="left:25.800px;top:10px" width="10.400" height="10.400" viewBox="0 0 10.400 10.400"><path d="M5 .7l-4.300 4.500 4.300 4.500M9.400 .7l-4.300 4.500 4.300 4.500" stroke="#2a2a2a" stroke-width="1.500" fill="none"/></svg></div>
<div class="gbtn" style="left:1783px;top:1009px;width:135.500px;height:29.500px;border-radius:0 5px 5px 0"><div class="c" style="left:97px;top:5px"></div><svg class="abs" style="left:102px;top:10px" width="10.400" height="10.400" viewBox="0 0 10.400 10.400"><path d="M1 .7l4.300 4.500-4.300 4.500M5.400 .7l4.300 4.500-4.300 4.500" stroke="#2a2a2a" stroke-width="1.500" fill="none"/></svg></div>
<svg class="abs" style="left:1640px;top:1005px" width="280" height="40"><g font-family="Liberation Sans, sans-serif" font-size="21.800" fill="#2c2c2c" stroke="#2c2c2c" stroke-width=".35"><text x="64.200" y="26.800" textLength="50" lengthAdjust="spacingAndGlyphs">Back</text><text x="170.500" y="26.800" textLength="51.500" lengthAdjust="spacingAndGlyphs">Next</text></g></svg>
<div id="taskbar"><div class="abs" style="left:300px;top:0;width:57px;height:8px;background:#7da6c4;box-shadow:inset 0 1px 0 #b8d4e6,inset 1px 0 0 #b8d4e6,inset -1px 0 0 #b8d4e6"></div><div class="abs" style="left:252px;top:5px;width:30px;height:3px;background:#008a00"></div><div class="abs" style="left:318px;top:3px;width:14px;height:5px;background:#301010;border-radius:6px 6px 0 0"></div><div class="abs" style="left:196px;top:5px;width:18px;height:3px;background:#3aa0e8;border-radius:8px 8px 0 0"></div><div class="abs" style="left:150px;top:4px;width:8px;height:4px;background:#e8a860;border-radius:0 6px 0 0"></div><div class="abs" style="left:66px;top:6px;width:14px;height:2px;background:#e8d080"></div><div class="abs" style="left:20px;top:6px;width:14px;height:2px;background:#e0e8f0"></div></div>

</body></html>
